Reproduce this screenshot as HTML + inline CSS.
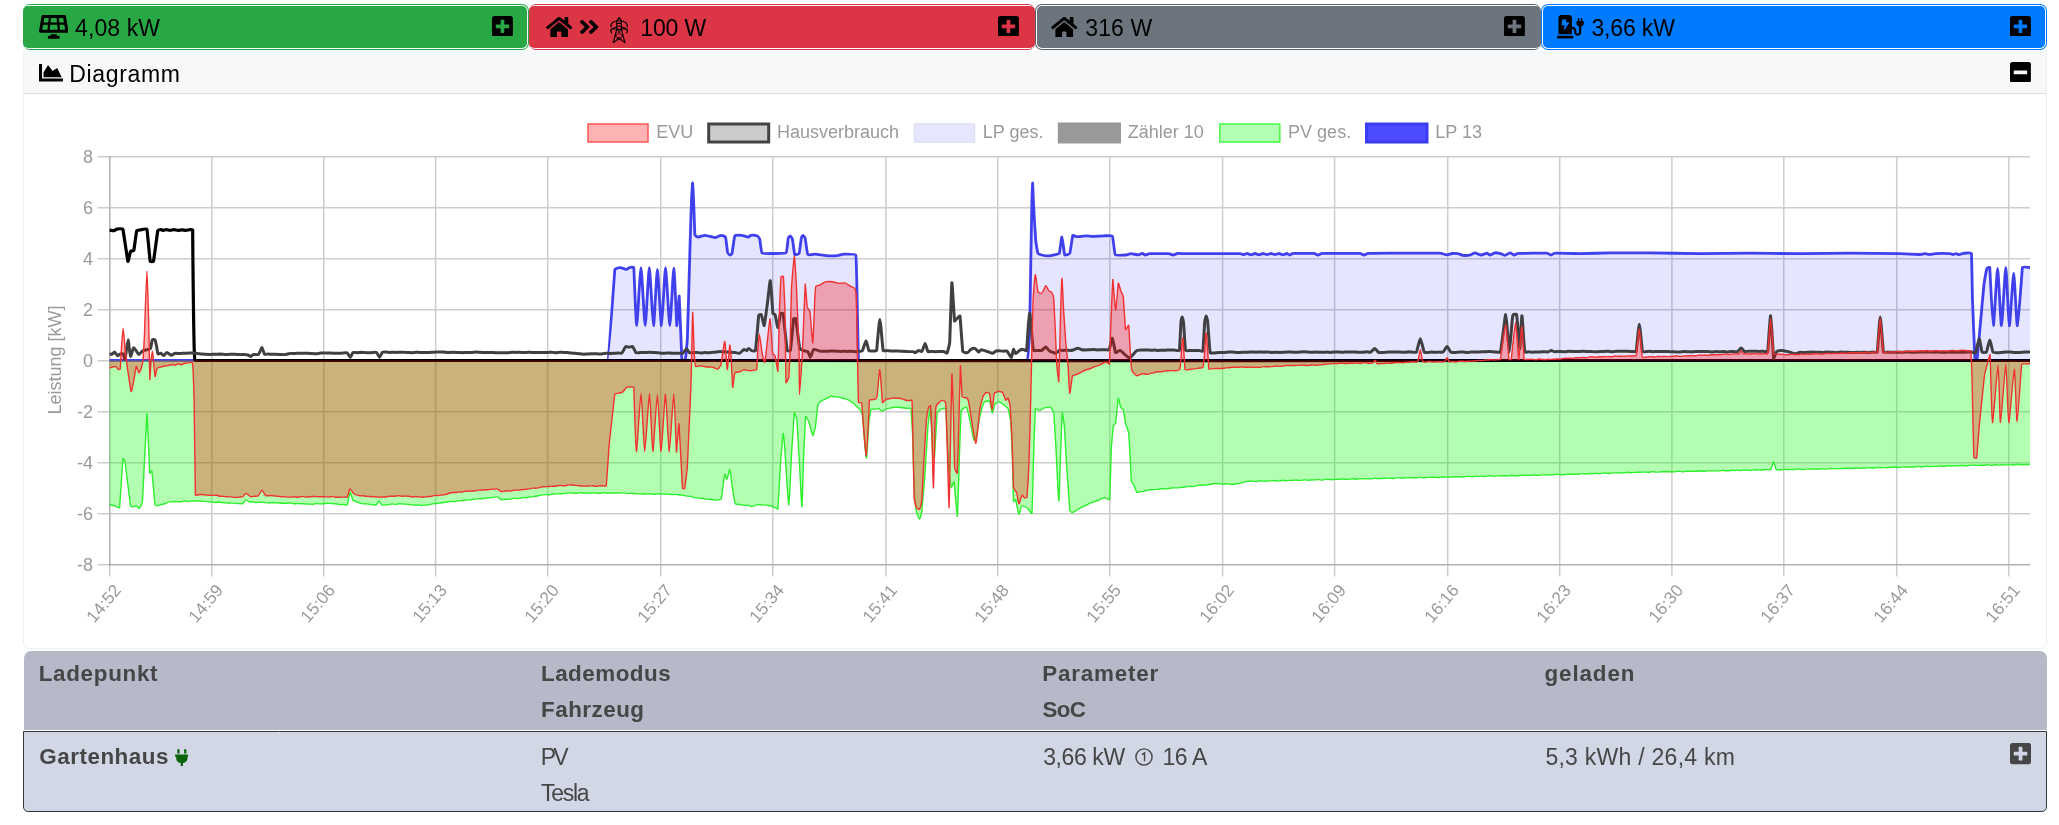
<!DOCTYPE html>
<html lang="de"><head><meta charset="utf-8"><title>openWB</title>
<style>
*{box-sizing:border-box}
html,body{margin:0;padding:0;background:#fff;width:2059px;height:825px;overflow:hidden}
body{font-family:"Liberation Sans",Arial,sans-serif;color:#000;position:relative}
.ic{display:inline-block;vertical-align:middle;position:absolute}
.t{position:absolute;font-size:23px;line-height:34px;white-space:nowrap}
.tc,.tc i,.tc b{position:absolute;display:block}
.card{position:absolute;left:23px;top:50px;width:2024px;height:599px;background:#fff;border:1px solid #eff0f2;border-top:none;border-radius:0 0 7px 7px}
.chead{position:absolute;left:0;top:0;width:100%;height:44px;background:#f7f8fa;border-bottom:1.500px solid #dcdddf}
.chart{position:absolute;left:0;top:0;will-change:transform}
.thead{position:absolute;left:23.5px;top:650.6px;width:2023px;height:79.4px;background:#b6bac8;border-radius:7px 7px 0 0}
.trow{position:absolute;left:23px;top:731.3px;width:2024px;height:80.7px;background:#d2d7e6;border:1.500px solid #33363b;border-radius:0 0 5px 5px}
.cell{position:absolute;font-size:23px;line-height:36px;color:#464646;white-space:nowrap;letter-spacing:-0.200px}
.b{font-weight:bold;font-size:22.4px}

#t1{left:75.10px;top:11.30px;letter-spacing:0.100px}
#t2{left:640.30px;top:11.30px;letter-spacing:-0.150px}
#t3{left:1085.30px;top:11.30px;letter-spacing:0.100px}
#t4{left:1591.50px;top:11.30px;letter-spacing:-0.170px}
#t5{left:69.20px;top:57.00px;letter-spacing:0.660px}
#h1{left:38.70px;top:656.20px;letter-spacing:0.705px}
#h2{left:541.00px;top:656.20px;letter-spacing:0.494px}
#h3{left:541.00px;top:692.20px;letter-spacing:0.500px}
#h4{left:1042.20px;top:656.20px;letter-spacing:0.825px}
#h5{left:1042.40px;top:692.20px;letter-spacing:-0.650px}
#h6{left:1544.50px;top:656.20px;letter-spacing:0.880px}
#r1{left:39.30px;top:738.80px;letter-spacing:0.526px}
#r2{left:540.80px;top:739.20px;letter-spacing:-2.800px}
#r3{left:541.00px;top:775.10px;letter-spacing:-1.300px}
#r4{left:1043.20px;top:739.20px;letter-spacing:-0.400px}
#r5{left:1162.40px;top:739.20px;letter-spacing:-0.400px}
#r6{left:1545.40px;top:739.20px;letter-spacing:0.260px}
</style></head><body>
<div class="card"><div class="chead"></div></div>
<svg class="chart" width="2059" height="60" viewBox="0 0 2059 60"><rect x="23.00" y="4.00" width="506.00" height="46.00" rx="7" fill="#28a745"/><rect x="23.00" y="5.00" width="505.00" height="44.00" rx="6" fill="#fff"/><rect x="23.00" y="6.00" width="504.00" height="42.00" rx="5" fill="#28a745"/><rect x="529.00" y="4.00" width="506.00" height="46.00" rx="7" fill="#dc3545"/><rect x="529.00" y="5.00" width="506.00" height="44.00" rx="6" fill="#fff"/><rect x="529.00" y="6.00" width="506.00" height="42.00" rx="5" fill="#dc3545"/><rect x="1035.00" y="4.00" width="506.00" height="46.00" rx="7" fill="#5a6268"/><rect x="1036.00" y="5.00" width="505.00" height="44.00" rx="6" fill="#fff"/><rect x="1037.00" y="6.00" width="504.00" height="42.00" rx="5" fill="#6c757d"/><rect x="1541.00" y="4.00" width="506.00" height="46.00" rx="7" fill="#007bff"/><rect x="1542.00" y="5.00" width="504.00" height="44.00" rx="6" fill="#fff"/><rect x="1543.00" y="6.00" width="502.00" height="42.00" rx="5" fill="#007bff"/></svg>
<svg class="chart" width="2059" height="825" viewBox="0 0 2059 825">
<g stroke="#cdcdcd" stroke-width="1.5" fill="none">
<line x1="97.5" x2="2030" y1="156.70" y2="156.70"/>
<line x1="97.5" x2="2030" y1="207.70" y2="207.70"/>
<line x1="97.5" x2="2030" y1="258.70" y2="258.70"/>
<line x1="97.5" x2="2030" y1="309.70" y2="309.70"/>
<line x1="97.5" x2="2030" y1="360.70" y2="360.70"/>
<line x1="97.5" x2="2030" y1="411.70" y2="411.70"/>
<line x1="97.5" x2="2030" y1="462.70" y2="462.70"/>
<line x1="97.5" x2="2030" y1="513.70" y2="513.70"/>
<line x1="97.5" x2="2030" y1="564.70" y2="564.70"/>
<line x1="109.80" x2="109.80" y1="156" y2="576.5"/>
<line x1="211.80" x2="211.80" y1="156" y2="576.5"/>
<line x1="323.75" x2="323.75" y1="156" y2="576.5"/>
<line x1="435.65" x2="435.65" y1="156" y2="576.5"/>
<line x1="547.70" x2="547.70" y1="156" y2="576.5"/>
<line x1="660.75" x2="660.75" y1="156" y2="576.5"/>
<line x1="772.80" x2="772.80" y1="156" y2="576.5"/>
<line x1="885.90" x2="885.90" y1="156" y2="576.5"/>
<line x1="997.75" x2="997.75" y1="156" y2="576.5"/>
<line x1="1109.80" x2="1109.80" y1="156" y2="576.5"/>
<line x1="1222.60" x2="1222.60" y1="156" y2="576.5"/>
<line x1="1334.60" x2="1334.60" y1="156" y2="576.5"/>
<line x1="1447.70" x2="1447.70" y1="156" y2="576.5"/>
<line x1="1559.70" x2="1559.70" y1="156" y2="576.5"/>
<line x1="1671.90" x2="1671.90" y1="156" y2="576.5"/>
<line x1="1783.80" x2="1783.80" y1="156" y2="576.5"/>
<line x1="1896.70" x2="1896.70" y1="156" y2="576.5"/>
<line x1="2008.80" x2="2008.80" y1="156" y2="576.5"/>
<line x1="109.8" x2="109.8" y1="156" y2="565.4" stroke="#000" stroke-opacity="0.13"/>
<line x1="109" x2="2030" y1="564.7" y2="564.7" stroke="#000" stroke-opacity="0.13"/>
</g>
<path d="M109.6 360.3C110.9 360.3 605.9 360.6 607.2 360.4C608.5 360.2 614.7 270.7 614.8 269.4C614.9 268.8 616.9 268.2 617.5 268C618.1 267.8 620.1 267.5 620.7 267.6C621.8 267.8 625.1 269.4 626.2 269.4C626.9 269.4 628.8 267.8 629.5 267.6C630.3 267.4 633.7 266.8 633.8 267.6C634 268.9 636 325.5 636.7 325.5C637.4 325.5 640.1 267.6 641 267.6C641.8 267.6 644.4 325.5 645.2 325.5C646 325.5 648.5 267.6 649.3 267.6C650.1 267.6 652.7 325.3 653.5 325.5C654.3 325.7 656.6 269.4 657.4 269.4C658.2 269.4 660.7 325.7 661.5 325.5C662.3 325.3 664.7 267.6 665.5 267.6C666.3 267.6 669 325.4 669.8 325.5C670.6 325.5 673.1 268.1 673.8 268.1C674.5 268.1 676.6 324.2 676.8 325.5C677 326.8 679 294.7 679.2 296C679.4 297.3 681.7 356.9 681.8 358.2C681.8 358.7 682.2 360.2 682.5 360.4C682.8 360.6 685 360.9 685.1 360.4C685.4 359.1 687.2 340.9 687.3 339.6C687.4 338.3 690.1 244.9 690.1 243.6C690.1 242.3 691.4 201.3 691.5 200C691.6 198.7 692.4 182.6 692.6 183C692.9 183.6 693.7 203.7 693.8 205C693.9 206.3 694.7 233.6 694.9 234.9C695 235.7 697.5 237.1 698.2 237.1C699.4 237.2 703.4 235.3 704.7 235.3C706 235.3 710 236.4 711.3 236.7C712.2 236.9 714.8 237.6 715.6 237.5C716.7 237.3 720 235.3 721.1 235.3C722 235.3 725.2 236.3 725.5 237.1C726 238.3 727.3 251.1 727.6 252.4C727.8 253 729.3 254.9 729.8 255C730.2 255.1 731.9 254 732 253.5C732.3 252.2 734.2 237.1 734.8 236C735.4 235 740.5 235.2 741.8 235.3C743.1 235.4 747.2 237.1 748.4 237.1C748.9 237.1 750.1 235.4 750.6 235.3C751.9 235.1 756.2 235.5 757.4 236C758.1 236.3 759.6 238.5 759.8 239.3C760.1 240.6 761.2 251.8 762 252.8C762.8 253.8 770.5 253.5 771.8 253.5C773.1 253.5 785 253.7 786 252.8C787 251.9 787.9 239.5 788.2 238.2C788.4 237.6 790 235.9 790.4 236C790.9 236.1 792.3 238.5 792.5 239.3C792.8 240.6 794.2 253.3 794.7 254.5C795 255.1 798.8 254.2 799.1 253.5C799.6 252.3 801 239.5 801.3 238.2C801.4 237.5 802.6 235.3 803 235.3C803.4 235.3 805 237.5 805.2 238.2C805.5 239.5 807.1 253.4 807.8 254.5C808.5 255.5 814.2 254 815.5 254.1C816.8 254.2 825.1 255.5 826.4 255.6C827.7 255.7 836 255.7 837.3 255.6C838.6 255.5 842.5 254.1 843.8 254.1C845.1 254.1 855.3 253.8 855.8 255C856.3 256.2 856.9 286 856.9 287.3C856.9 288.6 858.4 358 858.4 359.3C858.4 359.5 858.6 360.4 858.8 360.4C860.1 360.4 1025.9 360.7 1027.2 360.4C1028.5 360.1 1029.8 322.2 1029.8 320.9C1029.8 319.6 1030.9 256.8 1030.9 255.5C1030.9 254.2 1031.8 206.3 1031.8 205C1031.8 203.7 1032.4 183.6 1032.6 183C1032.7 182.6 1033.3 198.7 1033.4 200C1033.5 201.3 1034.1 214.9 1034.2 216.2C1034.3 217.5 1035.6 238.9 1035.7 240.2C1035.8 241.5 1037.4 252.1 1037.9 253.3C1038.2 254 1041 254.8 1041.8 255C1043.1 255.3 1047.1 255.9 1048.4 255.9C1049.5 255.9 1052.9 255.1 1054 254.8C1055.1 254.5 1058.9 254.2 1059.3 253.3C1059.8 252.1 1061.4 236.8 1061.9 236.9C1062.5 237.1 1064.1 253.6 1064.7 254.8C1065.1 255.5 1069.4 254.2 1069.8 253.3C1070.3 252.1 1072.3 236.6 1072.8 235.4C1073 234.9 1075.3 236.4 1076 236.5C1077.1 236.6 1080.6 236.4 1081.8 236.3C1082.8 236.2 1086 235.8 1087 235.8C1088.1 235.8 1091.6 236.3 1092.7 236.3C1094 236.3 1102.3 235.8 1103.6 235.8C1104.9 235.8 1111.7 235.2 1112.4 236.3C1113.1 237.4 1114.5 253.3 1115.2 254.4C1115.9 255.5 1124.2 255.1 1125.5 255C1126.6 255 1129.8 253.7 1130.9 253.7C1132.2 253.7 1137.2 254.8 1138.5 254.8C1139.3 254.8 1141.7 253.3 1142.5 253.3C1143.1 253.3 1144.5 255 1145.1 255C1145.9 255 1148.6 253.7 1149.5 253.7C1150.8 253.6 1167.8 253.6 1169.1 253.7C1169.9 253.7 1172.2 255 1173 255C1174 255 1176.8 253.4 1177.8 253.3C1179.1 253.2 1189.6 253.7 1190.9 253.7C1192.2 253.7 1238.7 253.7 1240 253.7C1240.8 253.7 1243.2 254.6 1244 254.6C1244.6 254.6 1246.4 253.4 1247 253.4C1247.8 253.4 1250.2 254.8 1251 254.8C1251.8 254.8 1254.2 253.5 1255 253.5C1255.8 253.5 1258.2 254.8 1259 254.8C1259.8 254.8 1262.2 253.5 1263 253.5C1263.8 253.5 1266.2 254.6 1267 254.6C1267.8 254.6 1270.2 253.5 1271 253.5C1271.8 253.5 1274.2 254.6 1275 254.6C1275.8 254.6 1278.2 253.5 1279 253.5C1279.8 253.5 1282.2 254.8 1283 254.8C1283.8 254.8 1286.2 253.5 1287 253.5C1287.5 253.5 1289 255 1289.5 255C1290.2 255 1292.2 253.4 1293 253.4C1294.3 253.3 1312.7 253.3 1314 253.4C1314.9 253.5 1317.2 255 1318 255C1318.8 255 1321.1 253.4 1322 253.4C1323.3 253.4 1358.7 253.4 1360 253.4C1360.9 253.4 1363.2 255 1364 255C1364.8 255 1367.1 253.5 1368 253.4C1369.3 253.3 1388.7 253.2 1390 253.2C1391.3 253.2 1438.7 253.2 1440 253.2C1441.3 253.2 1445.7 254.8 1447 254.8C1448 254.8 1451 253.6 1452 253.5C1453.2 253.4 1456.8 253.4 1458 253.6C1459 253.8 1462 255.2 1463 255.3C1464.3 255.5 1468.7 255.3 1470 255C1471.1 254.8 1474 252.8 1475 252.8C1476.2 252.8 1479.8 255 1481 255C1482.2 255 1485.8 253.2 1487 253.2C1487.6 253.2 1489.4 255 1490 255C1491 255 1494 253 1495 252.8C1496 252.6 1499 253.2 1500 253.4C1501 253.7 1504 255.4 1505 255.3C1506 255.2 1509 252.8 1510 252.8C1510.8 252.8 1513.2 254.9 1514 255C1514.8 255.1 1517.1 253.4 1518 253.4C1519.3 253.3 1545.7 253.1 1547 253.2C1547.9 253.2 1550.2 255 1551 255C1551.8 255 1554.1 253.2 1555 253.2C1556.3 253.1 1578.7 253.6 1580 253.6C1581.3 253.6 1608.7 252.9 1610 252.9C1611.3 252.9 1648.7 252.9 1650 252.9C1651.3 252.9 1698.7 253.6 1700 253.6C1701.3 253.6 1748.7 253.2 1750 253.2C1751.3 253.2 1798.7 253.7 1800 253.7C1801.3 253.7 1848.7 253.2 1850 253.2C1851.3 253.2 1898.7 253.6 1900 253.6C1901.3 253.6 1918.7 254.5 1920 254.5C1921 254.5 1924 253.6 1925 253.6C1926 253.6 1929 254.5 1930 254.5C1931 254.5 1934 253.6 1935 253.6C1936.3 253.5 1948.7 253.5 1950 253.6C1950.6 253.6 1952.4 254.5 1953 254.5C1953.6 254.5 1955.4 253.6 1956 253.6C1956.6 253.6 1958.4 254.6 1959 254.6C1959.8 254.6 1962.2 253.5 1963 253.4C1964.3 253.3 1971.1 252.1 1971.4 253.4C1971.7 254.7 1972.4 296.3 1972.4 297.6C1972.4 298.9 1974.8 357.4 1974.9 358.7C1974.9 359.1 1977.1 359.1 1977.2 358.7C1977.4 357.4 1980 328 1980.1 326.7C1980.2 325.4 1983.8 285.3 1984 284C1984.2 282.7 1986.5 269.7 1986.9 268.5C1987.1 268 1989.7 266.9 1989.8 267.5C1989.9 268.8 1992.5 325.6 1993.3 325.7C1994.1 325.8 1996.8 268.5 1997.6 268.5C1998.4 268.5 2000.7 325.8 2001.5 325.7C2002.3 325.6 2005 267.5 2005.8 267.5C2006.6 267.5 2008.5 325.1 2009.3 325.7C2010 326.3 2012.9 273.4 2013.7 273.4C2014.5 273.4 2016.6 326.3 2017.4 325.7C2018.3 325.1 2022.1 268.8 2022.4 267.5C2022.7 266.2 2028.7 267.5 2030 267.5" fill="none" stroke="#4444ec" stroke-width="2.8" stroke-linejoin="round"/>
<path d="M109.6 504.7C110.7 504.9 113.9 505.5 115 505.8C115.9 506.1 119.5 508.5 119.6 507.6C119.8 506.3 122.7 459.8 122.9 458.5C123 457.8 125 461.4 125.1 462.2C125.3 463.5 130.3 504.5 130.5 505.8C130.6 506.3 132.2 506.9 132.7 506.9C133.3 506.9 135.4 505.7 136 505.8C136.7 506 138.8 508.7 139.3 508.4C140.1 507.8 142.4 502.8 142.5 501.5C142.6 500.2 146.6 415 146.9 413.7C147.2 412.4 149.6 471.8 149.7 473.1C149.7 473.7 151.8 470.4 151.9 470.9C152.1 472.2 154.8 503.4 155 504.7C155.1 505.2 156.7 505.8 157.2 505.8C157.8 505.8 159.7 504.8 160.3 504.7C161 504.5 162.9 504.3 163.5 504.2C164.2 504 166 503 166.7 502.8C167.3 502.5 169.2 502 169.8 501.9C170.4 501.8 172.2 501.8 172.8 501.8C173.4 501.7 175.2 501.5 175.8 501.5C176.4 501.5 178.2 501.8 178.8 501.8C179.4 501.8 181.2 501.6 181.8 501.5C182.4 501.4 184.2 501 184.8 501C185.4 501 187.2 501.5 187.8 501.5C188.4 501.5 190.2 501.2 190.8 501.1C191.4 501.1 193.2 501 193.8 501C194.5 501 196.4 500.9 197.1 500.9C197.8 500.9 199.7 501 200.4 501C201.3 501 203.9 501.3 204.8 501.4C205.6 501.5 208.2 501.8 209.1 501.9C209.8 502 211.7 502 212.4 502.1C213 502.2 215 502.5 215.6 502.5C216.3 502.5 218.3 502 218.9 502C219.6 502.1 221.5 502.5 222.2 502.6C222.9 502.7 225 502.8 225.7 502.9C226.4 503 228.5 503.2 229.2 503.2C229.9 503.2 231.9 503 232.6 503.1C233.3 503.1 235.4 503.3 236.1 503.4C236.8 503.4 238.9 503.6 239.6 503.6C240.3 503.6 242.4 503.9 242.9 503.6C243.6 503.2 245.1 500.1 245.8 499.9C246.4 499.7 248.7 501.7 249.5 501.9C250.1 502.1 252.1 501.9 252.8 501.9C253.4 502 255.4 502.5 256 502.5C256.7 502.5 258.6 502.1 259.3 502.1C259.9 502.1 261.9 502.2 262.5 502.3C263.2 502.3 265.1 502.5 265.8 502.6C266.4 502.7 268.3 503 268.9 503C269.5 503 271.4 502.7 272 502.6C272.6 502.6 274.5 502.8 275.1 502.8C275.8 502.9 277.6 502.8 278.3 502.8C278.9 502.9 280.7 503.2 281.4 503.2C282 503.3 283.9 503.2 284.5 503.2C285.1 503.2 287 503.2 287.6 503.2C288.2 503.2 290.1 502.9 290.7 503C291.4 503 293.2 503.7 293.9 503.8C294.5 503.8 296.4 503.6 297 503.6C297.6 503.6 299.5 503.6 300.1 503.6C300.7 503.6 302.6 503.8 303.2 503.8C303.9 503.8 305.7 504 306.4 504C307 504 308.9 504.1 309.5 504.1C310.2 504.1 312.2 504.3 312.9 504.2C313.6 504.2 315.6 503.5 316.3 503.5C317 503.5 319.1 503.8 319.8 503.9C320.4 503.9 322.5 503.9 323.2 503.8C323.9 503.8 325.9 503.4 326.6 503.3C327.3 503.3 329.3 503.4 330 503.4C330.7 503.4 332.8 503.7 333.5 503.7C334.2 503.8 336.2 503.9 336.9 504C337.6 504.1 339.7 504.6 340.4 504.6C341.1 504.7 343.2 504.4 343.8 504.5C344.5 504.5 347 505.5 347.3 505C347.9 503.8 349.3 492.9 350 492.3C350.5 491.9 352.3 499.3 353 500.4C353.4 501 355.8 501.4 356.4 501.6C357.2 501.9 359.2 503 359.9 503.2C360.5 503.4 362.5 503.9 363.1 503.9C363.8 504 365.7 503.7 366.3 503.8C367 503.8 368.9 504.2 369.6 504.3C370.2 504.3 372.1 504.5 372.8 504.6C373.4 504.6 375.5 505.3 376 505C376.8 504.6 378.4 500.9 379 500.9C379.6 500.9 381.1 504.5 381.8 505C382.3 505.3 384.6 505 385.3 504.9C386 504.9 388 504.7 388.7 504.6C389.4 504.5 391.5 503.9 392.2 503.9C392.9 503.9 394.9 504.4 395.6 504.4C396.3 504.3 398.4 503.8 399.1 503.8C399.8 503.8 401.7 504 402.4 504C403 504.1 405 504.1 405.7 504.1C406.3 504.2 408.3 504.5 409 504.5C409.6 504.6 411.6 504.7 412.2 504.8C412.9 504.9 414.9 505.2 415.5 505.2C416.2 505.3 418.2 504.9 418.8 504.9C419.5 504.9 421.4 505.5 422.1 505.5C422.8 505.5 424.7 505.2 425.4 505.1C426 505.1 428 504.9 428.7 504.8C429.3 504.7 431.3 504 432 503.9C432.6 503.8 434.6 503.7 435.2 503.6C435.9 503.6 437.9 503.2 438.5 503.1C439.2 503 441.2 503 441.8 502.9C442.5 502.8 444.4 502.3 445.1 502.2C445.8 502.1 447.7 501.8 448.4 501.7C449.1 501.6 451 501.4 451.7 501.4C452.4 501.4 454.4 501.6 455 501.6C455.7 501.5 457.6 500.8 458.3 500.7C458.9 500.6 460.9 500.6 461.6 500.5C462.3 500.5 464.2 500.3 464.9 500.2C465.6 500.1 467.5 499.9 468.2 499.9C468.9 499.9 470.8 499.8 471.5 499.7C472.1 499.7 474.1 499.4 474.8 499.3C475.4 499.2 477.4 498.6 478.1 498.6C478.7 498.5 480.7 498.9 481.3 498.9C482 498.9 484 498.4 484.6 498.3C485.3 498.1 487.3 497.8 487.9 497.8C488.6 497.7 490.5 497.7 491.2 497.6C492.4 497.5 495.9 496.7 497 496.9C498 497.1 500.5 499.4 501.5 499.7C502 499.9 503.9 499.5 504.5 499.5C505.1 499.4 506.9 499.2 507.6 499.2C508.2 499.2 510 499.2 510.6 499.1C511.2 499 513 498.4 513.6 498.3C514.2 498.2 516 498.5 516.6 498.5C517.2 498.5 519.1 498.5 519.7 498.4C520.3 498.3 522.1 497.7 522.7 497.6C523.3 497.5 525.1 497.6 525.7 497.6C526.4 497.6 528.5 497.2 529.2 497.1C529.8 497 531.9 496.7 532.6 496.6C533.3 496.5 535.4 496.4 536 496.3C536.8 496.2 538.8 495.6 539.5 495.4C540.2 495.3 542.3 495 543 494.9C543.6 494.8 545.7 494.6 546.4 494.6C547 494.6 548.9 494.8 549.6 494.8C550.2 494.7 552.1 494.1 552.8 494C553.4 493.9 555.3 494 555.9 493.9C556.6 493.9 558.5 493.8 559.1 493.8C559.7 493.8 561.6 493.7 562.3 493.7C562.9 493.7 564.8 493.5 565.4 493.4C566.1 493.4 568 492.9 568.6 492.9C569.3 492.8 571.2 493 571.8 493C572.4 493 574.3 493.3 574.9 493.3C575.6 493.3 577.4 493.1 578.1 493C578.7 493 580.6 492.8 581.2 492.8C581.8 492.8 583.7 493.1 584.3 493.1C585 493.1 586.9 493 587.5 493C588.1 493 590 493.2 590.6 493.2C591.2 493.1 593.1 492.7 593.8 492.7C594.4 492.7 596.3 493 596.9 493.1C597.5 493.2 599.4 493.3 600 493.3C600.7 493.2 602.5 492.7 603.2 492.7C603.8 492.7 605.7 493 606.3 493C606.9 493 608.8 493 609.4 493C610 493 611.9 492.9 612.5 493C613.1 493 615 493.1 615.6 493.1C616.2 493.1 618.1 492.8 618.7 492.8C619.3 492.7 621.2 492.9 621.8 492.9C622.4 492.9 624.3 492.8 624.9 492.9C625.5 493 627.4 493.6 628 493.6C628.6 493.6 630.5 493.2 631.1 493.2C631.8 493.1 633.6 493.4 634.3 493.5C634.9 493.5 636.7 493.7 637.4 493.7C638 493.8 639.9 493.9 640.5 493.9C641.1 493.9 643 494 643.6 494C644.2 494 646.1 494.1 646.7 494C647.4 494 649.2 493.6 649.9 493.7C650.5 493.7 652.4 494.3 653 494.3C653.6 494.4 655.5 494.1 656.1 494C656.7 494 658.6 493.8 659.2 493.8C659.9 493.8 661.7 494.1 662.4 494.1C663 494.1 664.9 494 665.5 494C666.2 494 668.3 494.2 669 494.2C669.7 494.3 671.8 494.6 672.5 494.6C673.2 494.6 675.2 494.3 675.9 494.4C676.6 494.4 678.7 494.9 679.4 495C680.1 495.1 682.2 495 682.9 495.1C683.6 495.2 685.8 496 686.5 496.1C687.2 496.2 689.5 496.1 690.2 496.3C690.9 496.4 693.1 497.1 693.8 497.3C694.5 497.5 696.7 497.8 697.4 497.9C698.2 498 700.3 498.2 701.1 498.3C701.8 498.4 704 498.7 704.7 498.8C705.4 498.9 707.6 499.3 708.3 499.4C709.1 499.4 711.2 499.5 712 499.5C712.7 499.6 714.9 500.2 715.6 500.1C716.7 500 720.6 499.6 721.1 498.8C721.8 497.7 722.4 490.9 722.6 489.6C722.8 488.3 724.3 475.6 724.8 474.4C725 473.9 726.7 479.5 727 479.2C727.7 478.6 729.4 469.1 729.8 469.6C730.4 470.3 731.8 484 732 485.3C732.2 486.6 734.9 502.6 735.3 503.8C735.5 504.4 737.9 504.1 738.5 504.2C739.2 504.3 741.1 504.8 741.8 504.9C742.5 505 744.4 505.5 745.1 505.5C745.8 505.5 747.8 505.2 748.4 505.3C749.1 505.4 751 506.7 751.6 506.7C752.6 506.7 755.5 505.1 756.5 504.9C757.1 504.7 759.1 504.7 759.8 504.7C760.5 504.7 762.4 504.8 763.1 504.9C764 505 766.6 505.3 767.5 505.4C768.3 505.5 771 505.8 771.8 506C772.4 506.2 774.2 507.2 774.8 507.5C775.5 507.8 777.8 509.4 777.9 508.8C778.1 507.5 780.4 464.8 780.5 463.5C780.6 462.2 782.9 433 783.4 433.4C784 433.9 785.9 466.5 786 467.8C786.1 469.1 788.3 506 788.8 504.9C789.3 503.7 791.4 456 791.5 454.7C791.6 453.4 794.1 414.1 794.3 412.8C794.5 411.7 796.8 418.5 796.9 419.8C797 421.1 799.6 466.5 799.7 467.8C799.8 469.1 801.6 507.5 801.9 506.7C802.3 505.7 803.4 460.4 803.5 459.1C803.6 457.8 805.4 417.9 805.6 416.6C805.7 415.6 808.5 420.8 808.9 422C809.4 423.2 812 435 812.8 435.5C813.3 435.9 815.3 427.7 815.5 426.4C815.7 425.1 817.4 408 817.6 406.7C817.8 405.7 819.1 402.6 819.8 401.9C820.6 401.1 824.2 399.7 825.3 399.1C826.4 398.5 829.6 396.6 830.7 396.3C831.3 396.1 833.3 396.6 834 396.6C834.7 396.7 836.7 396.8 837.3 396.9C838.2 397.1 840.8 397.8 841.6 398C842.5 398.3 845.1 398.8 846 399.1C846.7 399.3 848.7 400.1 849.3 400.4C850 400.8 852 401.9 852.6 402.4C853.5 403.2 856 405.8 856.9 406.7C857.6 407.4 859.7 409.2 860.2 410C860.8 411 862.3 414.3 862.4 415.5C862.6 416.8 865.6 457.3 866.3 458C866.9 458.6 868.8 423.3 868.9 422C869 420.7 870.5 410.5 871.1 409.3C871.4 408.7 874.1 409.3 874.9 409.2C875.7 409.1 878 408.3 878.7 408.5C879.4 408.7 881.3 411.1 882 411.1C882.8 411.1 885.5 409.2 886.4 408.9C887.1 408.6 889.4 408.2 890.2 408.1C891 407.9 893.2 407.3 894 407.2C894.9 407.1 897.5 407.2 898.4 407.2C899.2 407.3 901.8 407.7 902.7 407.8C903.5 407.9 906 408.2 906.8 408.3C907.6 408.4 910.8 407.8 910.9 408.5C911.2 409.8 912.6 436 912.7 437.3C912.8 438.6 914.1 490.5 914.2 491.8C914.3 493.1 916.1 510.2 916.4 511.5C916.7 512.8 919 519.1 919.6 519.1C920.1 519.1 921.6 512.8 921.8 511.5C922 510.2 925 473.5 925.1 472.2C925.2 470.9 927.8 427.7 927.9 426.4C928 425.1 930.3 405.9 930.5 407.2C930.7 408.5 932.6 455.6 932.7 456.9C932.7 457.2 934.5 457.2 934.5 456.9C934.6 455.6 936.9 414.6 937.1 413.3C937.3 412.1 940.5 409.4 941.5 408.9C942.2 408.5 945.7 408.1 945.8 408.9C946 410.2 947.5 446.9 947.6 448.2C947.7 449.5 949 470.9 949.1 472.2C949.2 473.5 950.7 486.3 951.3 487.5C951.6 488.1 953.9 481.1 954.1 482C954.4 483.3 957.1 517.6 957.4 516.3C957.7 515 959.3 460.4 959.3 459.1C959.3 457.8 960.9 412.4 961.1 411.1C961.3 409.8 965.9 406.6 966.5 407.2C967.4 408.1 969.5 418.5 969.8 419.8C970.1 421.1 973.3 438.7 973.8 439.9C974 440.4 976.2 438 976.4 437.3C976.7 436 979.3 418.9 979.6 417.6C979.9 416.3 983.3 403.5 984 402.4C984.5 401.5 989 400.6 989.5 401.3C990.3 402.3 991.7 412.5 992.3 412.8C992.8 413 994.2 405.2 994.9 404.1C995.4 403.3 998.5 401.8 999.3 401.9C1000.4 402.1 1003.7 404.8 1004.7 405.6C1005.4 406.1 1007.7 407.7 1008 408.5C1008.5 409.7 1010.7 420.7 1010.8 422C1010.9 423.3 1012.4 457.8 1012.4 459.1C1012.4 460.4 1013.4 500.3 1013.5 501.6C1013.5 502.1 1015.4 499.1 1015.6 499.5C1016.1 500.7 1018.1 513.3 1018.9 514.1C1019.4 514.6 1020.8 506.8 1021.8 506C1022.4 505.5 1025.8 506.9 1026.6 507.5C1027.7 508.2 1031.8 514.4 1032 513.2C1032.2 511.9 1033.5 460.4 1033.5 459.1C1033.5 457.8 1035.1 410.2 1035.3 408.9C1035.4 408.1 1038.8 410.8 1039.6 410.7C1040.5 410.6 1043.1 408.2 1044 407.8C1044.6 407.6 1046.6 407.6 1047.3 407.5C1048 407.4 1050.2 406.8 1050.6 407.2C1051.5 408 1053.6 412 1053.8 413.3C1054 414.6 1055.9 446.9 1056 448.2C1056.1 449.5 1058.3 499.8 1058.8 501C1059.2 502 1060.3 460.4 1060.4 459.1C1060.5 457.8 1062 414.1 1062.2 412.8C1062.4 411.5 1064.3 425.1 1064.4 426.4C1064.5 427.7 1066.4 462.2 1066.5 463.5C1066.6 464.8 1069.6 509.1 1069.8 510.4C1069.9 511.1 1071.8 512.8 1072.4 512.6C1073.7 512.3 1080.7 507.7 1081.8 507.1C1082.5 506.7 1084.7 506 1085.4 505.6C1086.2 505.3 1088.3 504 1089.1 503.6C1089.8 503.3 1092 502.6 1092.7 502.3C1093.3 502.1 1095.1 501.4 1095.7 501.2C1096.3 501 1098.1 500.5 1098.7 500.3C1099.3 500 1101.1 498.8 1101.7 498.5C1102.3 498.3 1104.1 497.6 1104.7 497.7C1105.7 497.8 1109.6 500.4 1109.7 499.5C1109.9 498.2 1111.2 449.5 1111.3 448.2C1111.4 446.9 1113.3 426.6 1113.5 425.3C1113.6 424.7 1115.5 423.7 1115.6 423.1C1115.8 421.8 1117.9 399.6 1118.3 398.4C1118.6 397.5 1120.2 406 1120.7 407.2C1121 407.9 1123.1 409.3 1123.3 410C1123.7 411.2 1125.2 421.8 1125.5 423.1C1125.8 424.4 1128.5 431.6 1128.7 432.9C1128.9 434.2 1130.2 457.8 1130.3 459.1C1130.4 460.4 1131.1 479.6 1131.3 480.9C1131.5 482 1133.7 484.7 1134.2 485.7C1134.8 486.9 1136 491.4 1136.8 492.3C1137.1 492.7 1139.2 492 1139.8 491.9C1140.5 491.8 1142.3 491.5 1142.9 491.4C1143.8 491.2 1146.4 490.3 1147.3 490.1C1148 490 1150.2 489.9 1150.9 489.8C1151.7 489.8 1153.8 489.7 1154.6 489.6C1155.3 489.5 1157.5 489.3 1158.2 489.2C1158.8 489.1 1160.7 488.9 1161.3 488.8C1161.9 488.8 1163.8 488.6 1164.4 488.6C1165.1 488.6 1166.9 488.9 1167.5 488.9C1168.2 488.8 1170 488.1 1170.7 488C1171.3 487.9 1173.1 487.9 1173.8 487.9C1174.4 487.9 1176.3 487.9 1176.9 487.9C1177.5 487.8 1179.4 487.6 1180 487.5C1180.6 487.4 1182.5 487.3 1183.1 487.2C1183.7 487.1 1185.6 487 1186.2 486.9C1186.9 486.8 1188.7 486.3 1189.3 486.3C1190 486.2 1191.8 486.6 1192.5 486.6C1193.1 486.5 1194.9 486.1 1195.6 485.9C1196.2 485.8 1198.1 485.4 1198.7 485.3C1199.3 485.3 1201.2 485.3 1201.8 485.3C1202.4 485.3 1204.3 485.2 1204.9 485.1C1205.5 485.1 1207.3 484.7 1207.9 484.6C1208.5 484.5 1210.4 484.4 1211 484.3C1211.6 484.2 1213.4 483.7 1214 483.6C1214.6 483.5 1216.5 483.5 1217.1 483.5C1217.7 483.5 1219.7 483.7 1220.3 483.8C1221 483.9 1222.9 484.2 1223.5 484.2C1224.2 484.2 1226.1 483.7 1226.8 483.7C1227.4 483.8 1229.4 484.3 1230 484.3C1230.7 484.3 1232.8 484.2 1233.5 484.2C1234.2 484.1 1236.3 483.9 1237 483.8C1237.7 483.7 1239.7 483.2 1240.3 483.1C1241 482.9 1243 482.4 1243.7 482.2C1244.3 482.1 1246.3 481.5 1247 481.4C1247.6 481.3 1249.4 481.3 1250 481.2C1250.6 481.2 1252.4 481.1 1253 481.1C1253.6 481.1 1255.4 481.6 1256 481.6C1256.6 481.6 1258.4 480.9 1259 480.9C1259.6 480.8 1261.5 480.9 1262.1 481C1262.7 481 1264.5 481.2 1265.1 481.2C1265.7 481.2 1267.5 480.9 1268.1 480.9C1268.7 480.9 1270.5 480.9 1271.1 480.9C1271.7 480.8 1273.5 480.5 1274.1 480.5C1274.7 480.5 1276.5 481 1277.1 481C1277.7 481 1279.5 480.7 1280.1 480.7C1280.7 480.6 1282.5 480.3 1283.1 480.3C1283.7 480.3 1285.5 480.7 1286.1 480.7C1286.7 480.7 1288.5 480.5 1289.1 480.4C1289.7 480.4 1291.6 480.5 1292.2 480.4C1292.8 480.4 1294.6 480.1 1295.2 480.1C1295.8 480.1 1297.6 480.3 1298.2 480.3C1298.8 480.3 1300.6 480.5 1301.2 480.4C1301.8 480.4 1303.6 479.7 1304.2 479.7C1304.8 479.7 1306.6 480.1 1307.2 480.1C1307.8 480.2 1309.6 480.1 1310.2 480C1310.8 480 1312.6 479.9 1313.2 479.9C1313.8 479.9 1315.6 479.8 1316.2 479.7C1316.8 479.7 1318.6 479.6 1319.2 479.6C1319.9 479.6 1321.7 480.1 1322.3 480.1C1322.9 480 1324.7 479.4 1325.3 479.4C1325.9 479.3 1327.7 479.4 1328.3 479.4C1328.9 479.5 1330.7 479.7 1331.3 479.7C1331.9 479.7 1333.7 479.4 1334.3 479.4C1334.9 479.4 1336.8 479.3 1337.4 479.3C1338 479.3 1339.8 479.3 1340.5 479.3C1341.1 479.3 1342.9 479 1343.5 479C1344.2 479 1346 479.4 1346.6 479.4C1347.2 479.4 1349.1 479.2 1349.7 479.1C1350.3 479 1352.2 478.7 1352.8 478.7C1353.4 478.7 1355.2 479.2 1355.8 479.2C1356.5 479.2 1358.3 478.9 1358.9 478.9C1359.5 478.8 1361.4 478.9 1362 478.8C1362.6 478.8 1364.5 478.6 1365.1 478.6C1365.7 478.6 1367.5 478.7 1368.2 478.8C1368.8 478.8 1370.6 478.9 1371.2 478.9C1371.9 478.8 1373.7 478.2 1374.3 478.2C1374.9 478.1 1376.8 478.6 1377.4 478.6C1378 478.6 1379.9 478.6 1380.5 478.5C1381.1 478.5 1382.9 478.4 1383.6 478.3C1384.2 478.3 1386 478.3 1386.6 478.2C1387.2 478.2 1389.1 478.1 1389.7 478.1C1390.3 478.1 1392.2 478.6 1392.8 478.5C1393.4 478.5 1395.2 477.9 1395.9 477.9C1396.5 477.8 1398.3 477.9 1398.9 477.9C1399.6 478 1401.4 478.2 1402 478.2C1402.6 478.2 1404.5 477.9 1405.1 477.8C1405.7 477.8 1407.6 477.9 1408.2 477.9C1408.8 477.8 1410.6 477.6 1411.3 477.6C1411.9 477.6 1413.7 478 1414.3 478C1415 478 1416.8 477.7 1417.4 477.7C1418 477.6 1419.9 477.2 1420.5 477.3C1421.1 477.3 1423 477.8 1423.6 477.8C1424.2 477.8 1426 477.5 1426.7 477.4C1427.3 477.4 1429.1 477.4 1429.7 477.4C1430.3 477.4 1432.2 477.2 1432.8 477.2C1433.4 477.2 1435.3 477.3 1435.9 477.3C1436.5 477.4 1438.4 477.5 1439 477.5C1439.6 477.4 1441.4 476.8 1442 476.7C1442.7 476.7 1444.5 477.2 1445.1 477.2C1445.7 477.2 1447.6 477 1448.2 477C1448.8 477 1450.6 477.1 1451.2 477.1C1451.8 477.1 1453.6 476.8 1454.2 476.8C1454.8 476.8 1456.6 476.8 1457.2 476.8C1457.9 476.7 1459.7 476.6 1460.3 476.6C1460.9 476.7 1462.7 477.1 1463.3 477C1463.9 477 1465.7 476.4 1466.3 476.4C1466.9 476.3 1468.7 476.4 1469.3 476.4C1469.9 476.5 1471.7 476.8 1472.3 476.8C1472.9 476.7 1474.7 476.4 1475.3 476.3C1475.9 476.3 1477.8 476.4 1478.4 476.4C1479 476.3 1480.8 476.1 1481.4 476.1C1482 476.1 1483.8 476.5 1484.4 476.5C1485 476.5 1486.8 476.2 1487.4 476.2C1488 476.1 1489.8 475.7 1490.4 475.7C1491 475.8 1492.8 476.3 1493.4 476.3C1494 476.3 1495.9 476 1496.5 475.9C1497.1 475.9 1498.9 475.9 1499.5 475.9C1500.1 475.8 1501.9 475.7 1502.5 475.7C1503.1 475.7 1504.9 475.8 1505.5 475.8C1506.1 475.9 1507.9 476 1508.5 476C1509.1 475.9 1510.9 475.3 1511.5 475.2C1512.1 475.2 1514 475.7 1514.6 475.7C1515.2 475.7 1517 475.7 1517.6 475.7C1518.2 475.6 1520 475.4 1520.6 475.3C1521.2 475.3 1523 475.4 1523.6 475.4C1524.2 475.3 1526 475.2 1526.6 475.2C1527.2 475.2 1529 475.6 1529.6 475.6C1530.2 475.5 1532 475 1532.7 474.9C1533.3 474.9 1535.1 474.9 1535.7 475C1536.3 475 1538.1 475.4 1538.7 475.4C1539.3 475.3 1541.1 474.9 1541.7 474.9C1542.3 474.8 1544.1 474.9 1544.7 474.9C1545.3 474.9 1547.1 474.7 1547.7 474.7C1548.3 474.7 1550.1 475 1550.8 475C1551.4 475 1553.2 474.8 1553.8 474.8C1554.4 474.7 1556.2 474.3 1556.8 474.3C1557.4 474.3 1559.2 474.6 1559.8 474.6C1560.4 474.7 1562.3 474.8 1562.9 474.8C1563.5 474.8 1565.3 474.5 1566 474.4C1566.6 474.3 1568.4 474.3 1569.1 474.2C1569.7 474.2 1571.5 474.2 1572.1 474.2C1572.8 474.2 1574.6 474.2 1575.2 474.2C1575.8 474.2 1577.7 474.3 1578.3 474.3C1578.9 474.2 1580.8 473.6 1581.4 473.6C1582 473.5 1583.9 474 1584.5 474C1585.1 474 1586.9 474 1587.6 473.9C1588.2 473.9 1590 473.5 1590.6 473.5C1591.3 473.5 1593.1 473.6 1593.7 473.6C1594.3 473.6 1596.2 473.4 1596.8 473.4C1597.4 473.4 1599.3 473.7 1599.9 473.7C1600.5 473.7 1602.4 473.1 1603 473.1C1603.6 473 1605.5 473 1606.1 473.1C1606.7 473.1 1608.5 473.5 1609.2 473.5C1609.8 473.4 1611.6 472.9 1612.2 472.9C1612.8 472.8 1614.7 472.9 1615.3 472.9C1615.9 472.9 1617.8 472.8 1618.4 472.8C1619 472.8 1620.9 473 1621.5 473C1622.1 472.9 1624 472.8 1624.6 472.7C1625.2 472.6 1627 472.2 1627.7 472.2C1628.3 472.2 1630.1 472.8 1630.7 472.8C1631.4 472.8 1633.2 472.4 1633.8 472.4C1634.4 472.3 1636.3 472.2 1636.9 472.2C1637.5 472.2 1639.4 472.2 1640 472.2C1640.6 472.2 1642.5 472.1 1643.1 472.1C1643.7 472.1 1645.6 472.1 1646.2 472.1C1646.9 472.2 1648.7 472.3 1649.4 472.3C1650 472.2 1651.9 471.6 1652.5 471.6C1653.1 471.6 1655 472 1655.6 472.1C1656.2 472.1 1658.1 472.1 1658.7 472.1C1659.3 472 1661.2 471.7 1661.8 471.6C1662.5 471.6 1664.3 471.8 1665 471.8C1665.6 471.8 1667.5 471.7 1668.1 471.7C1668.7 471.7 1670.6 471.7 1671.2 471.7C1671.8 471.7 1673.6 471.9 1674.2 471.9C1674.8 471.9 1676.6 471.4 1677.2 471.4C1677.8 471.3 1679.6 471.3 1680.2 471.4C1680.8 471.4 1682.6 471.8 1683.2 471.8C1683.9 471.8 1685.7 471.3 1686.3 471.2C1686.9 471.2 1688.7 471.3 1689.3 471.3C1689.9 471.3 1691.7 471.2 1692.3 471.2C1692.9 471.2 1694.7 471.4 1695.3 471.4C1695.9 471.4 1697.7 471.2 1698.3 471.2C1698.9 471.1 1700.7 470.7 1701.3 470.7C1701.9 470.8 1703.7 471.4 1704.3 471.4C1704.9 471.4 1706.7 471 1707.3 470.9C1707.9 470.9 1709.8 470.8 1710.4 470.8C1711 470.8 1712.8 470.9 1713.4 470.9C1714 470.9 1715.8 470.8 1716.4 470.8C1717 470.8 1718.8 471 1719.4 470.9C1720 470.9 1721.8 470.3 1722.4 470.3C1723 470.3 1724.8 470.7 1725.4 470.7C1726 470.8 1727.8 470.8 1728.4 470.8C1729 470.7 1730.8 470.3 1731.4 470.2C1732 470.2 1733.9 470.5 1734.5 470.5C1735.1 470.5 1736.9 470.3 1737.5 470.3C1738.1 470.3 1739.9 470.6 1740.5 470.5C1741.1 470.5 1742.9 470.1 1743.5 470C1744.1 470 1745.9 470 1746.5 470C1747.1 470.1 1748.9 470.5 1749.5 470.5C1750.1 470.5 1751.9 469.9 1752.5 469.9C1753.1 469.8 1754.9 470 1755.5 470C1756.1 470 1757.9 469.9 1758.6 469.9C1759.2 469.9 1761 470 1761.6 470C1762.2 470 1764 469.9 1764.6 469.8C1765.2 469.8 1767 469.4 1767.6 469.4C1768.2 469.4 1770.3 470.1 1770.6 469.7C1771.4 468.7 1773 462 1773.6 462C1774.2 462 1775.4 468.6 1776.2 469.7C1776.5 470.1 1778.7 470 1779.3 470C1779.9 470 1781.8 469.6 1782.4 469.6C1783 469.5 1784.8 469.4 1785.5 469.4C1786.1 469.4 1787.9 469.5 1788.5 469.5C1789.2 469.5 1791 469.4 1791.6 469.4C1792.2 469.4 1794.1 469.6 1794.7 469.5C1795.3 469.5 1797.2 469 1797.8 468.9C1798.4 468.9 1800.3 469.3 1800.9 469.4C1801.5 469.4 1803.4 469.5 1804 469.4C1804.6 469.4 1806.4 468.9 1807.1 468.9C1807.7 468.8 1809.5 469.1 1810.1 469.1C1810.8 469.1 1812.6 469 1813.2 469C1813.8 469 1815.7 469.2 1816.3 469.2C1816.9 469.1 1818.8 468.8 1819.4 468.7C1820 468.7 1821.9 468.7 1822.5 468.7C1823.1 468.8 1825 469.2 1825.6 469.2C1826.2 469.1 1828 468.6 1828.7 468.5C1829.3 468.5 1831.1 468.6 1831.7 468.6C1832.4 468.6 1834.2 468.6 1834.8 468.6C1835.4 468.6 1837.3 468.7 1837.9 468.7C1838.5 468.7 1840.4 468.5 1841 468.5C1841.6 468.5 1843.5 468.5 1844.1 468.5C1844.7 468.4 1846.6 468 1847.2 468C1847.8 468.1 1849.7 468.6 1850.3 468.6C1850.9 468.7 1852.8 468.3 1853.4 468.2C1854 468.1 1855.9 468 1856.5 468C1857.1 468 1858.9 468.2 1859.6 468.2C1860.2 468.2 1862 468.1 1862.7 468C1863.3 468 1865.1 468.2 1865.8 468.1C1866.4 468.1 1868.2 467.6 1868.8 467.6C1869.5 467.6 1871.3 467.9 1871.9 468C1872.6 468 1874.4 468.1 1875 468C1875.7 467.9 1877.5 467.4 1878.1 467.4C1878.7 467.4 1880.6 467.7 1881.2 467.7C1881.8 467.7 1883.7 467.6 1884.3 467.6C1884.9 467.6 1886.8 467.7 1887.4 467.7C1888 467.6 1889.9 467.3 1890.5 467.3C1891.1 467.2 1893 467.2 1893.6 467.2C1894.2 467.2 1896.1 467.3 1896.7 467.3C1897.3 467.3 1899.1 467.6 1899.7 467.6C1900.3 467.6 1902.2 467 1902.8 466.9C1903.4 466.8 1905.2 467 1905.8 467C1906.4 467 1908.2 467.1 1908.8 467.1C1909.4 467.1 1911.3 467 1911.9 467C1912.5 467 1914.3 466.9 1914.9 466.8C1915.5 466.8 1917.3 466.4 1917.9 466.4C1918.5 466.5 1920.4 467 1921 467C1921.6 467 1923.4 466.6 1924 466.6C1924.6 466.5 1926.4 466.3 1927 466.3C1927.6 466.3 1929.5 466.6 1930.1 466.6C1930.7 466.6 1932.5 466.4 1933.1 466.4C1933.7 466.3 1935.5 466.4 1936.1 466.4C1936.7 466.4 1938.6 465.9 1939.2 465.9C1939.8 465.9 1941.6 466.2 1942.2 466.2C1942.8 466.3 1944.6 466.3 1945.2 466.3C1945.8 466.2 1947.7 465.7 1948.3 465.6C1948.9 465.6 1950.7 466 1951.3 466C1951.9 466 1953.7 465.8 1954.3 465.8C1954.9 465.8 1956.8 465.9 1957.4 465.8C1958 465.8 1959.8 465.5 1960.4 465.5C1961 465.4 1962.8 465.4 1963.4 465.4C1964 465.5 1965.9 465.9 1966.5 465.9C1967.1 465.9 1968.9 465.5 1969.5 465.4C1970.1 465.3 1971.9 465.1 1972.5 465.1C1973.1 465.1 1974.9 465.2 1975.5 465.2C1976.2 465.3 1978 465.4 1978.6 465.4C1979.2 465.4 1981 465.3 1981.6 465.2C1982.2 465.2 1984 465.2 1984.6 465.2C1985.2 465.1 1987 464.8 1987.7 464.8C1988.3 464.8 1990.1 465.4 1990.7 465.4C1991.3 465.4 1993.1 465 1993.7 465C1994.3 464.9 1996.1 464.7 1996.7 464.7C1997.3 464.7 1999.1 465.1 1999.8 465.1C2000.4 465.1 2002.2 464.9 2002.8 464.8C2003.4 464.8 2005.2 464.9 2005.8 464.9C2006.4 464.9 2008.2 464.5 2008.8 464.5C2009.4 464.5 2011.2 464.8 2011.8 464.8C2012.5 464.9 2014.3 465 2014.9 464.9C2015.5 464.8 2017.3 464.3 2017.9 464.2C2018.5 464.2 2020.3 464.6 2020.9 464.7C2021.5 464.7 2023.3 464.6 2024 464.5C2024.6 464.5 2026.4 464.5 2027 464.5C2027.6 464.5 2029.4 464.4 2030 464.4L2030.0 360.5L109.6 360.5Z" fill="rgba(0,255,0,0.3)" stroke="none"/>
<path d="M109.6 504.7C110.7 504.9 113.9 505.5 115 505.8C115.9 506.1 119.5 508.5 119.6 507.6C119.8 506.3 122.7 459.8 122.9 458.5C123 457.8 125 461.4 125.1 462.2C125.3 463.5 130.3 504.5 130.5 505.8C130.6 506.3 132.2 506.9 132.7 506.9C133.3 506.9 135.4 505.7 136 505.8C136.7 506 138.8 508.7 139.3 508.4C140.1 507.8 142.4 502.8 142.5 501.5C142.6 500.2 146.6 415 146.9 413.7C147.2 412.4 149.6 471.8 149.7 473.1C149.7 473.7 151.8 470.4 151.9 470.9C152.1 472.2 154.8 503.4 155 504.7C155.1 505.2 156.7 505.8 157.2 505.8C157.8 505.8 159.7 504.8 160.3 504.7C161 504.5 162.9 504.3 163.5 504.2C164.2 504 166 503 166.7 502.8C167.3 502.5 169.2 502 169.8 501.9C170.4 501.8 172.2 501.8 172.8 501.8C173.4 501.7 175.2 501.5 175.8 501.5C176.4 501.5 178.2 501.8 178.8 501.8C179.4 501.8 181.2 501.6 181.8 501.5C182.4 501.4 184.2 501 184.8 501C185.4 501 187.2 501.5 187.8 501.5C188.4 501.5 190.2 501.2 190.8 501.1C191.4 501.1 193.2 501 193.8 501C194.5 501 196.4 500.9 197.1 500.9C197.8 500.9 199.7 501 200.4 501C201.3 501 203.9 501.3 204.8 501.4C205.6 501.5 208.2 501.8 209.1 501.9C209.8 502 211.7 502 212.4 502.1C213 502.2 215 502.5 215.6 502.5C216.3 502.5 218.3 502 218.9 502C219.6 502.1 221.5 502.5 222.2 502.6C222.9 502.7 225 502.8 225.7 502.9C226.4 503 228.5 503.2 229.2 503.2C229.9 503.2 231.9 503 232.6 503.1C233.3 503.1 235.4 503.3 236.1 503.4C236.8 503.4 238.9 503.6 239.6 503.6C240.3 503.6 242.4 503.9 242.9 503.6C243.6 503.2 245.1 500.1 245.8 499.9C246.4 499.7 248.7 501.7 249.5 501.9C250.1 502.1 252.1 501.9 252.8 501.9C253.4 502 255.4 502.5 256 502.5C256.7 502.5 258.6 502.1 259.3 502.1C259.9 502.1 261.9 502.2 262.5 502.3C263.2 502.3 265.1 502.5 265.8 502.6C266.4 502.7 268.3 503 268.9 503C269.5 503 271.4 502.7 272 502.6C272.6 502.6 274.5 502.8 275.1 502.8C275.8 502.9 277.6 502.8 278.3 502.8C278.9 502.9 280.7 503.2 281.4 503.2C282 503.3 283.9 503.2 284.5 503.2C285.1 503.2 287 503.2 287.6 503.2C288.2 503.2 290.1 502.9 290.7 503C291.4 503 293.2 503.7 293.9 503.8C294.5 503.8 296.4 503.6 297 503.6C297.6 503.6 299.5 503.6 300.1 503.6C300.7 503.6 302.6 503.8 303.2 503.8C303.9 503.8 305.7 504 306.4 504C307 504 308.9 504.1 309.5 504.1C310.2 504.1 312.2 504.3 312.9 504.2C313.6 504.2 315.6 503.5 316.3 503.5C317 503.5 319.1 503.8 319.8 503.9C320.4 503.9 322.5 503.9 323.2 503.8C323.9 503.8 325.9 503.4 326.6 503.3C327.3 503.3 329.3 503.4 330 503.4C330.7 503.4 332.8 503.7 333.5 503.7C334.2 503.8 336.2 503.9 336.9 504C337.6 504.1 339.7 504.6 340.4 504.6C341.1 504.7 343.2 504.4 343.8 504.5C344.5 504.5 347 505.5 347.3 505C347.9 503.8 349.3 492.9 350 492.3C350.5 491.9 352.3 499.3 353 500.4C353.4 501 355.8 501.4 356.4 501.6C357.2 501.9 359.2 503 359.9 503.2C360.5 503.4 362.5 503.9 363.1 503.9C363.8 504 365.7 503.7 366.3 503.8C367 503.8 368.9 504.2 369.6 504.3C370.2 504.3 372.1 504.5 372.8 504.6C373.4 504.6 375.5 505.3 376 505C376.8 504.6 378.4 500.9 379 500.9C379.6 500.9 381.1 504.5 381.8 505C382.3 505.3 384.6 505 385.3 504.9C386 504.9 388 504.7 388.7 504.6C389.4 504.5 391.5 503.9 392.2 503.9C392.9 503.9 394.9 504.4 395.6 504.4C396.3 504.3 398.4 503.8 399.1 503.8C399.8 503.8 401.7 504 402.4 504C403 504.1 405 504.1 405.7 504.1C406.3 504.2 408.3 504.5 409 504.5C409.6 504.6 411.6 504.7 412.2 504.8C412.9 504.9 414.9 505.2 415.5 505.2C416.2 505.3 418.2 504.9 418.8 504.9C419.5 504.9 421.4 505.5 422.1 505.5C422.8 505.5 424.7 505.2 425.4 505.1C426 505.1 428 504.9 428.7 504.8C429.3 504.7 431.3 504 432 503.9C432.6 503.8 434.6 503.7 435.2 503.6C435.9 503.6 437.9 503.2 438.5 503.1C439.2 503 441.2 503 441.8 502.9C442.5 502.8 444.4 502.3 445.1 502.2C445.8 502.1 447.7 501.8 448.4 501.7C449.1 501.6 451 501.4 451.7 501.4C452.4 501.4 454.4 501.6 455 501.6C455.7 501.5 457.6 500.8 458.3 500.7C458.9 500.6 460.9 500.6 461.6 500.5C462.3 500.5 464.2 500.3 464.9 500.2C465.6 500.1 467.5 499.9 468.2 499.9C468.9 499.9 470.8 499.8 471.5 499.7C472.1 499.7 474.1 499.4 474.8 499.3C475.4 499.2 477.4 498.6 478.1 498.6C478.7 498.5 480.7 498.9 481.3 498.9C482 498.9 484 498.4 484.6 498.3C485.3 498.1 487.3 497.8 487.9 497.8C488.6 497.7 490.5 497.7 491.2 497.6C492.4 497.5 495.9 496.7 497 496.9C498 497.1 500.5 499.4 501.5 499.7C502 499.9 503.9 499.5 504.5 499.5C505.1 499.4 506.9 499.2 507.6 499.2C508.2 499.2 510 499.2 510.6 499.1C511.2 499 513 498.4 513.6 498.3C514.2 498.2 516 498.5 516.6 498.5C517.2 498.5 519.1 498.5 519.7 498.4C520.3 498.3 522.1 497.7 522.7 497.6C523.3 497.5 525.1 497.6 525.7 497.6C526.4 497.6 528.5 497.2 529.2 497.1C529.8 497 531.9 496.7 532.6 496.6C533.3 496.5 535.4 496.4 536 496.3C536.8 496.2 538.8 495.6 539.5 495.4C540.2 495.3 542.3 495 543 494.9C543.6 494.8 545.7 494.6 546.4 494.6C547 494.6 548.9 494.8 549.6 494.8C550.2 494.7 552.1 494.1 552.8 494C553.4 493.9 555.3 494 555.9 493.9C556.6 493.9 558.5 493.8 559.1 493.8C559.7 493.8 561.6 493.7 562.3 493.7C562.9 493.7 564.8 493.5 565.4 493.4C566.1 493.4 568 492.9 568.6 492.9C569.3 492.8 571.2 493 571.8 493C572.4 493 574.3 493.3 574.9 493.3C575.6 493.3 577.4 493.1 578.1 493C578.7 493 580.6 492.8 581.2 492.8C581.8 492.8 583.7 493.1 584.3 493.1C585 493.1 586.9 493 587.5 493C588.1 493 590 493.2 590.6 493.2C591.2 493.1 593.1 492.7 593.8 492.7C594.4 492.7 596.3 493 596.9 493.1C597.5 493.2 599.4 493.3 600 493.3C600.7 493.2 602.5 492.7 603.2 492.7C603.8 492.7 605.7 493 606.3 493C606.9 493 608.8 493 609.4 493C610 493 611.9 492.9 612.5 493C613.1 493 615 493.1 615.6 493.1C616.2 493.1 618.1 492.8 618.7 492.8C619.3 492.7 621.2 492.9 621.8 492.9C622.4 492.9 624.3 492.8 624.9 492.9C625.5 493 627.4 493.6 628 493.6C628.6 493.6 630.5 493.2 631.1 493.2C631.8 493.1 633.6 493.4 634.3 493.5C634.9 493.5 636.7 493.7 637.4 493.7C638 493.8 639.9 493.9 640.5 493.9C641.1 493.9 643 494 643.6 494C644.2 494 646.1 494.1 646.7 494C647.4 494 649.2 493.6 649.9 493.7C650.5 493.7 652.4 494.3 653 494.3C653.6 494.4 655.5 494.1 656.1 494C656.7 494 658.6 493.8 659.2 493.8C659.9 493.8 661.7 494.1 662.4 494.1C663 494.1 664.9 494 665.5 494C666.2 494 668.3 494.2 669 494.2C669.7 494.3 671.8 494.6 672.5 494.6C673.2 494.6 675.2 494.3 675.9 494.4C676.6 494.4 678.7 494.9 679.4 495C680.1 495.1 682.2 495 682.9 495.1C683.6 495.2 685.8 496 686.5 496.1C687.2 496.2 689.5 496.1 690.2 496.3C690.9 496.4 693.1 497.1 693.8 497.3C694.5 497.5 696.7 497.8 697.4 497.9C698.2 498 700.3 498.2 701.1 498.3C701.8 498.4 704 498.7 704.7 498.8C705.4 498.9 707.6 499.3 708.3 499.4C709.1 499.4 711.2 499.5 712 499.5C712.7 499.6 714.9 500.2 715.6 500.1C716.7 500 720.6 499.6 721.1 498.8C721.8 497.7 722.4 490.9 722.6 489.6C722.8 488.3 724.3 475.6 724.8 474.4C725 473.9 726.7 479.5 727 479.2C727.7 478.6 729.4 469.1 729.8 469.6C730.4 470.3 731.8 484 732 485.3C732.2 486.6 734.9 502.6 735.3 503.8C735.5 504.4 737.9 504.1 738.5 504.2C739.2 504.3 741.1 504.8 741.8 504.9C742.5 505 744.4 505.5 745.1 505.5C745.8 505.5 747.8 505.2 748.4 505.3C749.1 505.4 751 506.7 751.6 506.7C752.6 506.7 755.5 505.1 756.5 504.9C757.1 504.7 759.1 504.7 759.8 504.7C760.5 504.7 762.4 504.8 763.1 504.9C764 505 766.6 505.3 767.5 505.4C768.3 505.5 771 505.8 771.8 506C772.4 506.2 774.2 507.2 774.8 507.5C775.5 507.8 777.8 509.4 777.9 508.8C778.1 507.5 780.4 464.8 780.5 463.5C780.6 462.2 782.9 433 783.4 433.4C784 433.9 785.9 466.5 786 467.8C786.1 469.1 788.3 506 788.8 504.9C789.3 503.7 791.4 456 791.5 454.7C791.6 453.4 794.1 414.1 794.3 412.8C794.5 411.7 796.8 418.5 796.9 419.8C797 421.1 799.6 466.5 799.7 467.8C799.8 469.1 801.6 507.5 801.9 506.7C802.3 505.7 803.4 460.4 803.5 459.1C803.6 457.8 805.4 417.9 805.6 416.6C805.7 415.6 808.5 420.8 808.9 422C809.4 423.2 812 435 812.8 435.5C813.3 435.9 815.3 427.7 815.5 426.4C815.7 425.1 817.4 408 817.6 406.7C817.8 405.7 819.1 402.6 819.8 401.9C820.6 401.1 824.2 399.7 825.3 399.1C826.4 398.5 829.6 396.6 830.7 396.3C831.3 396.1 833.3 396.6 834 396.6C834.7 396.7 836.7 396.8 837.3 396.9C838.2 397.1 840.8 397.8 841.6 398C842.5 398.3 845.1 398.8 846 399.1C846.7 399.3 848.7 400.1 849.3 400.4C850 400.8 852 401.9 852.6 402.4C853.5 403.2 856 405.8 856.9 406.7C857.6 407.4 859.7 409.2 860.2 410C860.8 411 862.3 414.3 862.4 415.5C862.6 416.8 865.6 457.3 866.3 458C866.9 458.6 868.8 423.3 868.9 422C869 420.7 870.5 410.5 871.1 409.3C871.4 408.7 874.1 409.3 874.9 409.2C875.7 409.1 878 408.3 878.7 408.5C879.4 408.7 881.3 411.1 882 411.1C882.8 411.1 885.5 409.2 886.4 408.9C887.1 408.6 889.4 408.2 890.2 408.1C891 407.9 893.2 407.3 894 407.2C894.9 407.1 897.5 407.2 898.4 407.2C899.2 407.3 901.8 407.7 902.7 407.8C903.5 407.9 906 408.2 906.8 408.3C907.6 408.4 910.8 407.8 910.9 408.5C911.2 409.8 912.6 436 912.7 437.3C912.8 438.6 914.1 490.5 914.2 491.8C914.3 493.1 916.1 510.2 916.4 511.5C916.7 512.8 919 519.1 919.6 519.1C920.1 519.1 921.6 512.8 921.8 511.5C922 510.2 925 473.5 925.1 472.2C925.2 470.9 927.8 427.7 927.9 426.4C928 425.1 930.3 405.9 930.5 407.2C930.7 408.5 932.6 455.6 932.7 456.9C932.7 457.2 934.5 457.2 934.5 456.9C934.6 455.6 936.9 414.6 937.1 413.3C937.3 412.1 940.5 409.4 941.5 408.9C942.2 408.5 945.7 408.1 945.8 408.9C946 410.2 947.5 446.9 947.6 448.2C947.7 449.5 949 470.9 949.1 472.2C949.2 473.5 950.7 486.3 951.3 487.5C951.6 488.1 953.9 481.1 954.1 482C954.4 483.3 957.1 517.6 957.4 516.3C957.7 515 959.3 460.4 959.3 459.1C959.3 457.8 960.9 412.4 961.1 411.1C961.3 409.8 965.9 406.6 966.5 407.2C967.4 408.1 969.5 418.5 969.8 419.8C970.1 421.1 973.3 438.7 973.8 439.9C974 440.4 976.2 438 976.4 437.3C976.7 436 979.3 418.9 979.6 417.6C979.9 416.3 983.3 403.5 984 402.4C984.5 401.5 989 400.6 989.5 401.3C990.3 402.3 991.7 412.5 992.3 412.8C992.8 413 994.2 405.2 994.9 404.1C995.4 403.3 998.5 401.8 999.3 401.9C1000.4 402.1 1003.7 404.8 1004.7 405.6C1005.4 406.1 1007.7 407.7 1008 408.5C1008.5 409.7 1010.7 420.7 1010.8 422C1010.9 423.3 1012.4 457.8 1012.4 459.1C1012.4 460.4 1013.4 500.3 1013.5 501.6C1013.5 502.1 1015.4 499.1 1015.6 499.5C1016.1 500.7 1018.1 513.3 1018.9 514.1C1019.4 514.6 1020.8 506.8 1021.8 506C1022.4 505.5 1025.8 506.9 1026.6 507.5C1027.7 508.2 1031.8 514.4 1032 513.2C1032.2 511.9 1033.5 460.4 1033.5 459.1C1033.5 457.8 1035.1 410.2 1035.3 408.9C1035.4 408.1 1038.8 410.8 1039.6 410.7C1040.5 410.6 1043.1 408.2 1044 407.8C1044.6 407.6 1046.6 407.6 1047.3 407.5C1048 407.4 1050.2 406.8 1050.6 407.2C1051.5 408 1053.6 412 1053.8 413.3C1054 414.6 1055.9 446.9 1056 448.2C1056.1 449.5 1058.3 499.8 1058.8 501C1059.2 502 1060.3 460.4 1060.4 459.1C1060.5 457.8 1062 414.1 1062.2 412.8C1062.4 411.5 1064.3 425.1 1064.4 426.4C1064.5 427.7 1066.4 462.2 1066.5 463.5C1066.6 464.8 1069.6 509.1 1069.8 510.4C1069.9 511.1 1071.8 512.8 1072.4 512.6C1073.7 512.3 1080.7 507.7 1081.8 507.1C1082.5 506.7 1084.7 506 1085.4 505.6C1086.2 505.3 1088.3 504 1089.1 503.6C1089.8 503.3 1092 502.6 1092.7 502.3C1093.3 502.1 1095.1 501.4 1095.7 501.2C1096.3 501 1098.1 500.5 1098.7 500.3C1099.3 500 1101.1 498.8 1101.7 498.5C1102.3 498.3 1104.1 497.6 1104.7 497.7C1105.7 497.8 1109.6 500.4 1109.7 499.5C1109.9 498.2 1111.2 449.5 1111.3 448.2C1111.4 446.9 1113.3 426.6 1113.5 425.3C1113.6 424.7 1115.5 423.7 1115.6 423.1C1115.8 421.8 1117.9 399.6 1118.3 398.4C1118.6 397.5 1120.2 406 1120.7 407.2C1121 407.9 1123.1 409.3 1123.3 410C1123.7 411.2 1125.2 421.8 1125.5 423.1C1125.8 424.4 1128.5 431.6 1128.7 432.9C1128.9 434.2 1130.2 457.8 1130.3 459.1C1130.4 460.4 1131.1 479.6 1131.3 480.9C1131.5 482 1133.7 484.7 1134.2 485.7C1134.8 486.9 1136 491.4 1136.8 492.3C1137.1 492.7 1139.2 492 1139.8 491.9C1140.5 491.8 1142.3 491.5 1142.9 491.4C1143.8 491.2 1146.4 490.3 1147.3 490.1C1148 490 1150.2 489.9 1150.9 489.8C1151.7 489.8 1153.8 489.7 1154.6 489.6C1155.3 489.5 1157.5 489.3 1158.2 489.2C1158.8 489.1 1160.7 488.9 1161.3 488.8C1161.9 488.8 1163.8 488.6 1164.4 488.6C1165.1 488.6 1166.9 488.9 1167.5 488.9C1168.2 488.8 1170 488.1 1170.7 488C1171.3 487.9 1173.1 487.9 1173.8 487.9C1174.4 487.9 1176.3 487.9 1176.9 487.9C1177.5 487.8 1179.4 487.6 1180 487.5C1180.6 487.4 1182.5 487.3 1183.1 487.2C1183.7 487.1 1185.6 487 1186.2 486.9C1186.9 486.8 1188.7 486.3 1189.3 486.3C1190 486.2 1191.8 486.6 1192.5 486.6C1193.1 486.5 1194.9 486.1 1195.6 485.9C1196.2 485.8 1198.1 485.4 1198.7 485.3C1199.3 485.3 1201.2 485.3 1201.8 485.3C1202.4 485.3 1204.3 485.2 1204.9 485.1C1205.5 485.1 1207.3 484.7 1207.9 484.6C1208.5 484.5 1210.4 484.4 1211 484.3C1211.6 484.2 1213.4 483.7 1214 483.6C1214.6 483.5 1216.5 483.5 1217.1 483.5C1217.7 483.5 1219.7 483.7 1220.3 483.8C1221 483.9 1222.9 484.2 1223.5 484.2C1224.2 484.2 1226.1 483.7 1226.8 483.7C1227.4 483.8 1229.4 484.3 1230 484.3C1230.7 484.3 1232.8 484.2 1233.5 484.2C1234.2 484.1 1236.3 483.9 1237 483.8C1237.7 483.7 1239.7 483.2 1240.3 483.1C1241 482.9 1243 482.4 1243.7 482.2C1244.3 482.1 1246.3 481.5 1247 481.4C1247.6 481.3 1249.4 481.3 1250 481.2C1250.6 481.2 1252.4 481.1 1253 481.1C1253.6 481.1 1255.4 481.6 1256 481.6C1256.6 481.6 1258.4 480.9 1259 480.9C1259.6 480.8 1261.5 480.9 1262.1 481C1262.7 481 1264.5 481.2 1265.1 481.2C1265.7 481.2 1267.5 480.9 1268.1 480.9C1268.7 480.9 1270.5 480.9 1271.1 480.9C1271.7 480.8 1273.5 480.5 1274.1 480.5C1274.7 480.5 1276.5 481 1277.1 481C1277.7 481 1279.5 480.7 1280.1 480.7C1280.7 480.6 1282.5 480.3 1283.1 480.3C1283.7 480.3 1285.5 480.7 1286.1 480.7C1286.7 480.7 1288.5 480.5 1289.1 480.4C1289.7 480.4 1291.6 480.5 1292.2 480.4C1292.8 480.4 1294.6 480.1 1295.2 480.1C1295.8 480.1 1297.6 480.3 1298.2 480.3C1298.8 480.3 1300.6 480.5 1301.2 480.4C1301.8 480.4 1303.6 479.7 1304.2 479.7C1304.8 479.7 1306.6 480.1 1307.2 480.1C1307.8 480.2 1309.6 480.1 1310.2 480C1310.8 480 1312.6 479.9 1313.2 479.9C1313.8 479.9 1315.6 479.8 1316.2 479.7C1316.8 479.7 1318.6 479.6 1319.2 479.6C1319.9 479.6 1321.7 480.1 1322.3 480.1C1322.9 480 1324.7 479.4 1325.3 479.4C1325.9 479.3 1327.7 479.4 1328.3 479.4C1328.9 479.5 1330.7 479.7 1331.3 479.7C1331.9 479.7 1333.7 479.4 1334.3 479.4C1334.9 479.4 1336.8 479.3 1337.4 479.3C1338 479.3 1339.8 479.3 1340.5 479.3C1341.1 479.3 1342.9 479 1343.5 479C1344.2 479 1346 479.4 1346.6 479.4C1347.2 479.4 1349.1 479.2 1349.7 479.1C1350.3 479 1352.2 478.7 1352.8 478.7C1353.4 478.7 1355.2 479.2 1355.8 479.2C1356.5 479.2 1358.3 478.9 1358.9 478.9C1359.5 478.8 1361.4 478.9 1362 478.8C1362.6 478.8 1364.5 478.6 1365.1 478.6C1365.7 478.6 1367.5 478.7 1368.2 478.8C1368.8 478.8 1370.6 478.9 1371.2 478.9C1371.9 478.8 1373.7 478.2 1374.3 478.2C1374.9 478.1 1376.8 478.6 1377.4 478.6C1378 478.6 1379.9 478.6 1380.5 478.5C1381.1 478.5 1382.9 478.4 1383.6 478.3C1384.2 478.3 1386 478.3 1386.6 478.2C1387.2 478.2 1389.1 478.1 1389.7 478.1C1390.3 478.1 1392.2 478.6 1392.8 478.5C1393.4 478.5 1395.2 477.9 1395.9 477.9C1396.5 477.8 1398.3 477.9 1398.9 477.9C1399.6 478 1401.4 478.2 1402 478.2C1402.6 478.2 1404.5 477.9 1405.1 477.8C1405.7 477.8 1407.6 477.9 1408.2 477.9C1408.8 477.8 1410.6 477.6 1411.3 477.6C1411.9 477.6 1413.7 478 1414.3 478C1415 478 1416.8 477.7 1417.4 477.7C1418 477.6 1419.9 477.2 1420.5 477.3C1421.1 477.3 1423 477.8 1423.6 477.8C1424.2 477.8 1426 477.5 1426.7 477.4C1427.3 477.4 1429.1 477.4 1429.7 477.4C1430.3 477.4 1432.2 477.2 1432.8 477.2C1433.4 477.2 1435.3 477.3 1435.9 477.3C1436.5 477.4 1438.4 477.5 1439 477.5C1439.6 477.4 1441.4 476.8 1442 476.7C1442.7 476.7 1444.5 477.2 1445.1 477.2C1445.7 477.2 1447.6 477 1448.2 477C1448.8 477 1450.6 477.1 1451.2 477.1C1451.8 477.1 1453.6 476.8 1454.2 476.8C1454.8 476.8 1456.6 476.8 1457.2 476.8C1457.9 476.7 1459.7 476.6 1460.3 476.6C1460.9 476.7 1462.7 477.1 1463.3 477C1463.9 477 1465.7 476.4 1466.3 476.4C1466.9 476.3 1468.7 476.4 1469.3 476.4C1469.9 476.5 1471.7 476.8 1472.3 476.8C1472.9 476.7 1474.7 476.4 1475.3 476.3C1475.9 476.3 1477.8 476.4 1478.4 476.4C1479 476.3 1480.8 476.1 1481.4 476.1C1482 476.1 1483.8 476.5 1484.4 476.5C1485 476.5 1486.8 476.2 1487.4 476.2C1488 476.1 1489.8 475.7 1490.4 475.7C1491 475.8 1492.8 476.3 1493.4 476.3C1494 476.3 1495.9 476 1496.5 475.9C1497.1 475.9 1498.9 475.9 1499.5 475.9C1500.1 475.8 1501.9 475.7 1502.5 475.7C1503.1 475.7 1504.9 475.8 1505.5 475.8C1506.1 475.9 1507.9 476 1508.5 476C1509.1 475.9 1510.9 475.3 1511.5 475.2C1512.1 475.2 1514 475.7 1514.6 475.7C1515.2 475.7 1517 475.7 1517.6 475.7C1518.2 475.6 1520 475.4 1520.6 475.3C1521.2 475.3 1523 475.4 1523.6 475.4C1524.2 475.3 1526 475.2 1526.6 475.2C1527.2 475.2 1529 475.6 1529.6 475.6C1530.2 475.5 1532 475 1532.7 474.9C1533.3 474.9 1535.1 474.9 1535.7 475C1536.3 475 1538.1 475.4 1538.7 475.4C1539.3 475.3 1541.1 474.9 1541.7 474.9C1542.3 474.8 1544.1 474.9 1544.7 474.9C1545.3 474.9 1547.1 474.7 1547.7 474.7C1548.3 474.7 1550.1 475 1550.8 475C1551.4 475 1553.2 474.8 1553.8 474.8C1554.4 474.7 1556.2 474.3 1556.8 474.3C1557.4 474.3 1559.2 474.6 1559.8 474.6C1560.4 474.7 1562.3 474.8 1562.9 474.8C1563.5 474.8 1565.3 474.5 1566 474.4C1566.6 474.3 1568.4 474.3 1569.1 474.2C1569.7 474.2 1571.5 474.2 1572.1 474.2C1572.8 474.2 1574.6 474.2 1575.2 474.2C1575.8 474.2 1577.7 474.3 1578.3 474.3C1578.9 474.2 1580.8 473.6 1581.4 473.6C1582 473.5 1583.9 474 1584.5 474C1585.1 474 1586.9 474 1587.6 473.9C1588.2 473.9 1590 473.5 1590.6 473.5C1591.3 473.5 1593.1 473.6 1593.7 473.6C1594.3 473.6 1596.2 473.4 1596.8 473.4C1597.4 473.4 1599.3 473.7 1599.9 473.7C1600.5 473.7 1602.4 473.1 1603 473.1C1603.6 473 1605.5 473 1606.1 473.1C1606.7 473.1 1608.5 473.5 1609.2 473.5C1609.8 473.4 1611.6 472.9 1612.2 472.9C1612.8 472.8 1614.7 472.9 1615.3 472.9C1615.9 472.9 1617.8 472.8 1618.4 472.8C1619 472.8 1620.9 473 1621.5 473C1622.1 472.9 1624 472.8 1624.6 472.7C1625.2 472.6 1627 472.2 1627.7 472.2C1628.3 472.2 1630.1 472.8 1630.7 472.8C1631.4 472.8 1633.2 472.4 1633.8 472.4C1634.4 472.3 1636.3 472.2 1636.9 472.2C1637.5 472.2 1639.4 472.2 1640 472.2C1640.6 472.2 1642.5 472.1 1643.1 472.1C1643.7 472.1 1645.6 472.1 1646.2 472.1C1646.9 472.2 1648.7 472.3 1649.4 472.3C1650 472.2 1651.9 471.6 1652.5 471.6C1653.1 471.6 1655 472 1655.6 472.1C1656.2 472.1 1658.1 472.1 1658.7 472.1C1659.3 472 1661.2 471.7 1661.8 471.6C1662.5 471.6 1664.3 471.8 1665 471.8C1665.6 471.8 1667.5 471.7 1668.1 471.7C1668.7 471.7 1670.6 471.7 1671.2 471.7C1671.8 471.7 1673.6 471.9 1674.2 471.9C1674.8 471.9 1676.6 471.4 1677.2 471.4C1677.8 471.3 1679.6 471.3 1680.2 471.4C1680.8 471.4 1682.6 471.8 1683.2 471.8C1683.9 471.8 1685.7 471.3 1686.3 471.2C1686.9 471.2 1688.7 471.3 1689.3 471.3C1689.9 471.3 1691.7 471.2 1692.3 471.2C1692.9 471.2 1694.7 471.4 1695.3 471.4C1695.9 471.4 1697.7 471.2 1698.3 471.2C1698.9 471.1 1700.7 470.7 1701.3 470.7C1701.9 470.8 1703.7 471.4 1704.3 471.4C1704.9 471.4 1706.7 471 1707.3 470.9C1707.9 470.9 1709.8 470.8 1710.4 470.8C1711 470.8 1712.8 470.9 1713.4 470.9C1714 470.9 1715.8 470.8 1716.4 470.8C1717 470.8 1718.8 471 1719.4 470.9C1720 470.9 1721.8 470.3 1722.4 470.3C1723 470.3 1724.8 470.7 1725.4 470.7C1726 470.8 1727.8 470.8 1728.4 470.8C1729 470.7 1730.8 470.3 1731.4 470.2C1732 470.2 1733.9 470.5 1734.5 470.5C1735.1 470.5 1736.9 470.3 1737.5 470.3C1738.1 470.3 1739.9 470.6 1740.5 470.5C1741.1 470.5 1742.9 470.1 1743.5 470C1744.1 470 1745.9 470 1746.5 470C1747.1 470.1 1748.9 470.5 1749.5 470.5C1750.1 470.5 1751.9 469.9 1752.5 469.9C1753.1 469.8 1754.9 470 1755.5 470C1756.1 470 1757.9 469.9 1758.6 469.9C1759.2 469.9 1761 470 1761.6 470C1762.2 470 1764 469.9 1764.6 469.8C1765.2 469.8 1767 469.4 1767.6 469.4C1768.2 469.4 1770.3 470.1 1770.6 469.7C1771.4 468.7 1773 462 1773.6 462C1774.2 462 1775.4 468.6 1776.2 469.7C1776.5 470.1 1778.7 470 1779.3 470C1779.9 470 1781.8 469.6 1782.4 469.6C1783 469.5 1784.8 469.4 1785.5 469.4C1786.1 469.4 1787.9 469.5 1788.5 469.5C1789.2 469.5 1791 469.4 1791.6 469.4C1792.2 469.4 1794.1 469.6 1794.7 469.5C1795.3 469.5 1797.2 469 1797.8 468.9C1798.4 468.9 1800.3 469.3 1800.9 469.4C1801.5 469.4 1803.4 469.5 1804 469.4C1804.6 469.4 1806.4 468.9 1807.1 468.9C1807.7 468.8 1809.5 469.1 1810.1 469.1C1810.8 469.1 1812.6 469 1813.2 469C1813.8 469 1815.7 469.2 1816.3 469.2C1816.9 469.1 1818.8 468.8 1819.4 468.7C1820 468.7 1821.9 468.7 1822.5 468.7C1823.1 468.8 1825 469.2 1825.6 469.2C1826.2 469.1 1828 468.6 1828.7 468.5C1829.3 468.5 1831.1 468.6 1831.7 468.6C1832.4 468.6 1834.2 468.6 1834.8 468.6C1835.4 468.6 1837.3 468.7 1837.9 468.7C1838.5 468.7 1840.4 468.5 1841 468.5C1841.6 468.5 1843.5 468.5 1844.1 468.5C1844.7 468.4 1846.6 468 1847.2 468C1847.8 468.1 1849.7 468.6 1850.3 468.6C1850.9 468.7 1852.8 468.3 1853.4 468.2C1854 468.1 1855.9 468 1856.5 468C1857.1 468 1858.9 468.2 1859.6 468.2C1860.2 468.2 1862 468.1 1862.7 468C1863.3 468 1865.1 468.2 1865.8 468.1C1866.4 468.1 1868.2 467.6 1868.8 467.6C1869.5 467.6 1871.3 467.9 1871.9 468C1872.6 468 1874.4 468.1 1875 468C1875.7 467.9 1877.5 467.4 1878.1 467.4C1878.7 467.4 1880.6 467.7 1881.2 467.7C1881.8 467.7 1883.7 467.6 1884.3 467.6C1884.9 467.6 1886.8 467.7 1887.4 467.7C1888 467.6 1889.9 467.3 1890.5 467.3C1891.1 467.2 1893 467.2 1893.6 467.2C1894.2 467.2 1896.1 467.3 1896.7 467.3C1897.3 467.3 1899.1 467.6 1899.7 467.6C1900.3 467.6 1902.2 467 1902.8 466.9C1903.4 466.8 1905.2 467 1905.8 467C1906.4 467 1908.2 467.1 1908.8 467.1C1909.4 467.1 1911.3 467 1911.9 467C1912.5 467 1914.3 466.9 1914.9 466.8C1915.5 466.8 1917.3 466.4 1917.9 466.4C1918.5 466.5 1920.4 467 1921 467C1921.6 467 1923.4 466.6 1924 466.6C1924.6 466.5 1926.4 466.3 1927 466.3C1927.6 466.3 1929.5 466.6 1930.1 466.6C1930.7 466.6 1932.5 466.4 1933.1 466.4C1933.7 466.3 1935.5 466.4 1936.1 466.4C1936.7 466.4 1938.6 465.9 1939.2 465.9C1939.8 465.9 1941.6 466.2 1942.2 466.2C1942.8 466.3 1944.6 466.3 1945.2 466.3C1945.8 466.2 1947.7 465.7 1948.3 465.6C1948.9 465.6 1950.7 466 1951.3 466C1951.9 466 1953.7 465.8 1954.3 465.8C1954.9 465.8 1956.8 465.9 1957.4 465.8C1958 465.8 1959.8 465.5 1960.4 465.5C1961 465.4 1962.8 465.4 1963.4 465.4C1964 465.5 1965.9 465.9 1966.5 465.9C1967.1 465.9 1968.9 465.5 1969.5 465.4C1970.1 465.3 1971.9 465.1 1972.5 465.1C1973.1 465.1 1974.9 465.2 1975.5 465.2C1976.2 465.3 1978 465.4 1978.6 465.4C1979.2 465.4 1981 465.3 1981.6 465.2C1982.2 465.2 1984 465.2 1984.6 465.2C1985.2 465.1 1987 464.8 1987.7 464.8C1988.3 464.8 1990.1 465.4 1990.7 465.4C1991.3 465.4 1993.1 465 1993.7 465C1994.3 464.9 1996.1 464.7 1996.7 464.7C1997.3 464.7 1999.1 465.1 1999.8 465.1C2000.4 465.1 2002.2 464.9 2002.8 464.8C2003.4 464.8 2005.2 464.9 2005.8 464.9C2006.4 464.9 2008.2 464.5 2008.8 464.5C2009.4 464.5 2011.2 464.8 2011.8 464.8C2012.5 464.9 2014.3 465 2014.9 464.9C2015.5 464.8 2017.3 464.3 2017.9 464.2C2018.5 464.2 2020.3 464.6 2020.9 464.7C2021.5 464.7 2023.3 464.6 2024 464.5C2024.6 464.5 2026.4 464.5 2027 464.5C2027.6 464.5 2029.4 464.4 2030 464.4" fill="none" stroke="#2bf02b" stroke-width="1.4" stroke-linejoin="round"/>
<path d="M109.6 230.1C110.5 230.2 113.3 230.8 114.2 230.7C114.7 230.6 115.9 229.3 116.4 229.2C117.6 229 122.5 228.1 122.9 229.2C123.3 230.4 127.5 260.1 127.9 261.3C128.3 262.4 129.9 252.6 130.5 251.5C130.8 250.9 133.6 251 133.8 250.4C134.2 249.2 136.3 231.9 136.7 230.7C136.9 230.1 139.3 230.1 140 230C141.3 229.8 146.5 228.1 146.9 229.2C147.3 230.4 149.9 260 150.2 261.3C150.3 261.9 153.4 261.9 153.5 261.3C153.8 260 157.5 232 157.8 230.7C157.9 230.1 159.9 229.5 160.5 229.5C161 229.5 162.7 230.3 163.3 230.3C163.8 230.3 165.5 229.6 166 229.6C166.8 229.6 169.2 230.4 170 230.4C170.8 230.4 173.2 229.7 174 229.7C174.8 229.7 177.2 230.3 178 230.3C178.8 230.3 181.2 229.8 182 229.8C182.8 229.8 185.2 230.3 186 230.3C186.8 230.3 189.2 229.6 190 229.6C190.5 229.6 192.7 229.6 192.7 230.1C192.7 231.4 193.6 360.4 194.9 360.5C196.2 360.6 2028.7 360.5 2030 360.5" fill="none" stroke="#000" stroke-width="3.2" stroke-linejoin="round"/>
<path d="M109.6 360.3C110.9 360.3 605.9 360.6 607.2 360.4C608.5 360.2 614.7 270.7 614.8 269.4C614.9 268.8 616.9 268.2 617.5 268C618.1 267.8 620.1 267.5 620.7 267.6C621.8 267.8 625.1 269.4 626.2 269.4C626.9 269.4 628.8 267.8 629.5 267.6C630.3 267.4 633.7 266.8 633.8 267.6C634 268.9 636 325.5 636.7 325.5C637.4 325.5 640.1 267.6 641 267.6C641.8 267.6 644.4 325.5 645.2 325.5C646 325.5 648.5 267.6 649.3 267.6C650.1 267.6 652.7 325.3 653.5 325.5C654.3 325.7 656.6 269.4 657.4 269.4C658.2 269.4 660.7 325.7 661.5 325.5C662.3 325.3 664.7 267.6 665.5 267.6C666.3 267.6 669 325.4 669.8 325.5C670.6 325.5 673.1 268.1 673.8 268.1C674.5 268.1 676.6 324.2 676.8 325.5C677 326.8 679 294.7 679.2 296C679.4 297.3 681.7 356.9 681.8 358.2C681.8 358.7 682.2 360.2 682.5 360.4C682.8 360.6 685 360.9 685.1 360.4C685.4 359.1 687.2 340.9 687.3 339.6C687.4 338.3 690.1 244.9 690.1 243.6C690.1 242.3 691.4 201.3 691.5 200C691.6 198.7 692.4 182.6 692.6 183C692.9 183.6 693.7 203.7 693.8 205C693.9 206.3 694.7 233.6 694.9 234.9C695 235.7 697.5 237.1 698.2 237.1C699.4 237.2 703.4 235.3 704.7 235.3C706 235.3 710 236.4 711.3 236.7C712.2 236.9 714.8 237.6 715.6 237.5C716.7 237.3 720 235.3 721.1 235.3C722 235.3 725.2 236.3 725.5 237.1C726 238.3 727.3 251.1 727.6 252.4C727.8 253 729.3 254.9 729.8 255C730.2 255.1 731.9 254 732 253.5C732.3 252.2 734.2 237.1 734.8 236C735.4 235 740.5 235.2 741.8 235.3C743.1 235.4 747.2 237.1 748.4 237.1C748.9 237.1 750.1 235.4 750.6 235.3C751.9 235.1 756.2 235.5 757.4 236C758.1 236.3 759.6 238.5 759.8 239.3C760.1 240.6 761.2 251.8 762 252.8C762.8 253.8 770.5 253.5 771.8 253.5C773.1 253.5 785 253.7 786 252.8C787 251.9 787.9 239.5 788.2 238.2C788.4 237.6 790 235.9 790.4 236C790.9 236.1 792.3 238.5 792.5 239.3C792.8 240.6 794.2 253.3 794.7 254.5C795 255.1 798.8 254.2 799.1 253.5C799.6 252.3 801 239.5 801.3 238.2C801.4 237.5 802.6 235.3 803 235.3C803.4 235.3 805 237.5 805.2 238.2C805.5 239.5 807.1 253.4 807.8 254.5C808.5 255.5 814.2 254 815.5 254.1C816.8 254.2 825.1 255.5 826.4 255.6C827.7 255.7 836 255.7 837.3 255.6C838.6 255.5 842.5 254.1 843.8 254.1C845.1 254.1 855.3 253.8 855.8 255C856.3 256.2 856.9 286 856.9 287.3C856.9 288.6 858.4 358 858.4 359.3C858.4 359.5 858.6 360.4 858.8 360.4C860.1 360.4 1025.9 360.7 1027.2 360.4C1028.5 360.1 1029.8 322.2 1029.8 320.9C1029.8 319.6 1030.9 256.8 1030.9 255.5C1030.9 254.2 1031.8 206.3 1031.8 205C1031.8 203.7 1032.4 183.6 1032.6 183C1032.7 182.6 1033.3 198.7 1033.4 200C1033.5 201.3 1034.1 214.9 1034.2 216.2C1034.3 217.5 1035.6 238.9 1035.7 240.2C1035.8 241.5 1037.4 252.1 1037.9 253.3C1038.2 254 1041 254.8 1041.8 255C1043.1 255.3 1047.1 255.9 1048.4 255.9C1049.5 255.9 1052.9 255.1 1054 254.8C1055.1 254.5 1058.9 254.2 1059.3 253.3C1059.8 252.1 1061.4 236.8 1061.9 236.9C1062.5 237.1 1064.1 253.6 1064.7 254.8C1065.1 255.5 1069.4 254.2 1069.8 253.3C1070.3 252.1 1072.3 236.6 1072.8 235.4C1073 234.9 1075.3 236.4 1076 236.5C1077.1 236.6 1080.6 236.4 1081.8 236.3C1082.8 236.2 1086 235.8 1087 235.8C1088.1 235.8 1091.6 236.3 1092.7 236.3C1094 236.3 1102.3 235.8 1103.6 235.8C1104.9 235.8 1111.7 235.2 1112.4 236.3C1113.1 237.4 1114.5 253.3 1115.2 254.4C1115.9 255.5 1124.2 255.1 1125.5 255C1126.6 255 1129.8 253.7 1130.9 253.7C1132.2 253.7 1137.2 254.8 1138.5 254.8C1139.3 254.8 1141.7 253.3 1142.5 253.3C1143.1 253.3 1144.5 255 1145.1 255C1145.9 255 1148.6 253.7 1149.5 253.7C1150.8 253.6 1167.8 253.6 1169.1 253.7C1169.9 253.7 1172.2 255 1173 255C1174 255 1176.8 253.4 1177.8 253.3C1179.1 253.2 1189.6 253.7 1190.9 253.7C1192.2 253.7 1238.7 253.7 1240 253.7C1240.8 253.7 1243.2 254.6 1244 254.6C1244.6 254.6 1246.4 253.4 1247 253.4C1247.8 253.4 1250.2 254.8 1251 254.8C1251.8 254.8 1254.2 253.5 1255 253.5C1255.8 253.5 1258.2 254.8 1259 254.8C1259.8 254.8 1262.2 253.5 1263 253.5C1263.8 253.5 1266.2 254.6 1267 254.6C1267.8 254.6 1270.2 253.5 1271 253.5C1271.8 253.5 1274.2 254.6 1275 254.6C1275.8 254.6 1278.2 253.5 1279 253.5C1279.8 253.5 1282.2 254.8 1283 254.8C1283.8 254.8 1286.2 253.5 1287 253.5C1287.5 253.5 1289 255 1289.5 255C1290.2 255 1292.2 253.4 1293 253.4C1294.3 253.3 1312.7 253.3 1314 253.4C1314.9 253.5 1317.2 255 1318 255C1318.8 255 1321.1 253.4 1322 253.4C1323.3 253.4 1358.7 253.4 1360 253.4C1360.9 253.4 1363.2 255 1364 255C1364.8 255 1367.1 253.5 1368 253.4C1369.3 253.3 1388.7 253.2 1390 253.2C1391.3 253.2 1438.7 253.2 1440 253.2C1441.3 253.2 1445.7 254.8 1447 254.8C1448 254.8 1451 253.6 1452 253.5C1453.2 253.4 1456.8 253.4 1458 253.6C1459 253.8 1462 255.2 1463 255.3C1464.3 255.5 1468.7 255.3 1470 255C1471.1 254.8 1474 252.8 1475 252.8C1476.2 252.8 1479.8 255 1481 255C1482.2 255 1485.8 253.2 1487 253.2C1487.6 253.2 1489.4 255 1490 255C1491 255 1494 253 1495 252.8C1496 252.6 1499 253.2 1500 253.4C1501 253.7 1504 255.4 1505 255.3C1506 255.2 1509 252.8 1510 252.8C1510.8 252.8 1513.2 254.9 1514 255C1514.8 255.1 1517.1 253.4 1518 253.4C1519.3 253.3 1545.7 253.1 1547 253.2C1547.9 253.2 1550.2 255 1551 255C1551.8 255 1554.1 253.2 1555 253.2C1556.3 253.1 1578.7 253.6 1580 253.6C1581.3 253.6 1608.7 252.9 1610 252.9C1611.3 252.9 1648.7 252.9 1650 252.9C1651.3 252.9 1698.7 253.6 1700 253.6C1701.3 253.6 1748.7 253.2 1750 253.2C1751.3 253.2 1798.7 253.7 1800 253.7C1801.3 253.7 1848.7 253.2 1850 253.2C1851.3 253.2 1898.7 253.6 1900 253.6C1901.3 253.6 1918.7 254.5 1920 254.5C1921 254.5 1924 253.6 1925 253.6C1926 253.6 1929 254.5 1930 254.5C1931 254.5 1934 253.6 1935 253.6C1936.3 253.5 1948.7 253.5 1950 253.6C1950.6 253.6 1952.4 254.5 1953 254.5C1953.6 254.5 1955.4 253.6 1956 253.6C1956.6 253.6 1958.4 254.6 1959 254.6C1959.8 254.6 1962.2 253.5 1963 253.4C1964.3 253.3 1971.1 252.1 1971.4 253.4C1971.7 254.7 1972.4 296.3 1972.4 297.6C1972.4 298.9 1974.8 357.4 1974.9 358.7C1974.9 359.1 1977.1 359.1 1977.2 358.7C1977.4 357.4 1980 328 1980.1 326.7C1980.2 325.4 1983.8 285.3 1984 284C1984.2 282.7 1986.5 269.7 1986.9 268.5C1987.1 268 1989.7 266.9 1989.8 267.5C1989.9 268.8 1992.5 325.6 1993.3 325.7C1994.1 325.8 1996.8 268.5 1997.6 268.5C1998.4 268.5 2000.7 325.8 2001.5 325.7C2002.3 325.6 2005 267.5 2005.8 267.5C2006.6 267.5 2008.5 325.1 2009.3 325.7C2010 326.3 2012.9 273.4 2013.7 273.4C2014.5 273.4 2016.6 326.3 2017.4 325.7C2018.3 325.1 2022.1 268.8 2022.4 267.5C2022.7 266.2 2028.7 267.5 2030 267.5L2030.0 360.5L109.6 360.5Z" fill="rgba(0,0,255,0.1)" stroke="none"/>
<path d="M109.6 354.3C110.1 354.2 111.8 354.2 112.3 354C112.8 353.8 114.3 352 114.7 352.1C115.4 352.3 117 355.6 117.7 355.8C118.1 355.9 119.6 354.2 120.2 354C120.7 353.8 122.9 353.5 123.2 353.9C123.8 354.6 124.8 359.8 125 359.4C125.4 358.7 126.4 349.8 126.6 348.5C126.8 347.2 128 339.8 128.3 339.8C128.6 339.8 129.1 347.2 129.3 348.5C129.5 349.8 130.3 356.5 130.7 356.4C131.1 356.3 132.7 348.8 133.5 347.9C133.8 347.6 135.5 349.8 135.9 350.3C136.6 351.1 138.2 354.4 138.9 354.5C139.6 354.6 141.7 351.4 142.6 350.9C143.4 350.4 146.5 350 147.4 349.7C148 349.5 150.2 349 150.5 348.5C151.1 347.3 151.7 341 152.3 339.8C152.5 339.4 154.7 339.4 154.9 339.8C155.5 340.7 156.2 344.7 156.5 346C156.8 347.3 157.4 352.8 158 353.9C158.2 354.3 160.3 353.2 160.8 353.3C161.5 353.5 163.2 355.6 163.8 355.5C164.4 355.4 166.1 352.4 166.8 352.4C167.6 352.4 170.2 355.1 171.1 355.2C171.9 355.3 174.4 353.5 175.3 353.3C176 353.1 178.2 353.5 178.9 353.5C179.7 353.5 181.9 353.3 182.6 353.3C183.3 353.3 185.5 353.3 186.2 353.3C187 353.2 189.1 352.9 189.9 352.9C190.6 352.9 192.8 352.9 193.5 353C194.3 353.1 196.6 353.4 197.3 353.5C198.1 353.6 200.4 353.8 201.2 353.9C201.9 353.9 204.2 354.3 205 354.3C206 354.4 209 354.4 210 354.4C211 354.4 214 354.2 215 354.2C216 354.2 219 354.1 220 354.1C221 354.2 224 354.5 225 354.5C226 354.5 229 354.4 230 354.3C231 354.3 234 354.2 235 354.2C236 354.2 239 354.6 240 354.6C241 354.7 244 354.5 245 354.6C245.7 354.6 247.8 355 248.5 355.2C249 355.4 250.2 356.7 250.6 356.6C251.1 356.5 252.4 354.8 253 354.6C254 354.3 257.8 355 258.5 354.4C259.5 353.6 261.3 347.5 261.9 347.5C262.5 347.5 263.7 353.3 264.5 354.2C264.9 354.6 267.3 354 268 354C268.7 354 270.8 354.3 271.5 354.3C272.2 354.3 274.3 354.3 275 354.3C276 354.3 279 354.4 280 354.5C281 354.5 284 354.7 285 354.6C286 354.5 289 353.5 290 353.4C291 353.3 294 353.5 295 353.4C296 353.4 299 353.3 300 353.3C300.8 353.3 303.2 353.3 304 353.3C304.8 353.3 307.2 353.3 308 353.3C308.8 353.3 311.2 353.6 312 353.6C312.9 353.6 315.5 353.7 316.3 353.7C317.2 353.6 319.8 353.2 320.7 353.1C321.5 353 324.1 353 325 353C325.9 353 328.5 353 329.3 353C330.2 353 332.8 353.2 333.7 353.3C334.5 353.3 337.1 353.3 338 353.3C338.9 353.3 341.6 353.1 342.5 353.1C343.4 353 346.3 352.4 347 352.8C347.9 353.3 349.7 357.2 350.3 357.2C350.9 357.2 352.2 353.1 353 352.6C353.6 352.2 356.2 352.7 357 352.7C357.8 352.6 360.2 352.4 361 352.3C361.8 352.3 364.2 352.6 365 352.6C365.8 352.6 368.1 352.7 368.8 352.7C369.6 352.7 371.9 352.6 372.7 352.5C373.4 352.5 375.9 352 376.5 352.4C377.3 353 378.9 357.2 379.5 357.2C380.1 357.2 381.7 352.9 382.5 352.3C383 351.9 385.3 352.1 386 352.1C386.7 352.1 388.8 352.4 389.5 352.4C390.2 352.4 392.3 352.3 393 352.3C393.7 352.3 395.8 352.4 396.5 352.4C397.2 352.4 399.3 352.3 400 352.3C400.8 352.3 403.2 352.1 404 352.2C404.8 352.2 407.2 352.3 408 352.4C408.8 352.4 411.2 352.7 412 352.7C412.8 352.7 415.2 352.2 416 352.2C416.8 352.2 419.2 352.5 420 352.5C420.8 352.5 423.2 352.5 424 352.4C424.8 352.4 427.2 352.4 428 352.4C428.8 352.4 431.2 352.4 432 352.3C432.8 352.3 435.2 352.2 436 352.1C436.8 352.1 439.2 352.1 440 352.1C440.8 352.1 443.2 352 444 352C444.8 352.1 447.2 352.6 448 352.6C448.8 352.6 451.2 352.3 452 352.3C452.8 352.3 455.2 352.4 456 352.4C456.8 352.4 459.2 352.6 460 352.6C460.8 352.6 463.2 352.7 464 352.6C464.8 352.6 467.2 352.5 468 352.5C468.8 352.5 471.2 352.5 472 352.5C472.8 352.4 475.2 352.1 476 352.1C476.8 352.1 479.2 352.3 480 352.3C480.8 352.3 483.2 352.6 484 352.6C484.8 352.6 487.2 352.6 488 352.6C488.8 352.6 491.2 352.3 492 352.4C492.8 352.4 495.2 352.8 496 352.8C496.8 352.9 499.2 352.8 500 352.8C500.8 352.8 503.2 352.7 504 352.7C504.8 352.7 507.2 352.7 508 352.7C508.8 352.6 511.2 352.4 512 352.3C512.8 352.3 515.2 352.4 516 352.4C516.8 352.4 519.2 352.3 520 352.3C520.8 352.3 523.2 352.6 524 352.6C524.8 352.6 527.2 352.2 528 352.2C528.8 352.2 531.2 352.5 532 352.5C532.8 352.5 535.2 352.6 536 352.6C536.8 352.6 539.2 352.6 540 352.6C540.8 352.6 543.2 352.6 544 352.6C544.8 352.6 547.2 352.5 548 352.4C548.8 352.4 551.2 352.2 552 352.3C552.8 352.3 555.2 352.6 556 352.7C556.8 352.7 559.2 352.3 560 352.3C560.7 352.3 563 352.4 563.8 352.4C564.5 352.4 566.8 352.6 567.5 352.6C568.3 352.7 570.5 353.1 571.2 353.1C572 353.2 574.3 353.1 575 353.2C575.8 353.3 578.2 353.6 579 353.7C579.8 353.8 582.2 354.2 583 354.2C583.8 354.2 586.2 354.2 587 354.1C587.8 354.1 590.2 353.8 591 353.7C591.8 353.7 594.2 353.8 595 353.8C595.8 353.8 598 353.9 598.8 353.9C599.5 353.9 601.8 353.8 602.5 353.7C603.3 353.6 605.5 353.3 606.2 353.2C607 353.2 609.2 353.4 610 353.4C610.8 353.4 613.2 353.4 614 353.3C614.8 353.3 617.2 353 618 353C618.8 353 621.3 353.6 621.8 353.2C622.8 352.4 624.7 347.4 625.7 346.6C626.1 346.2 628.3 347.2 629 347.2C629.7 347.2 632.2 346.2 632.7 346.6C633.6 347.3 635.1 352 636 352.7C636.6 353.2 639.5 352.6 640.3 352.6C641.2 352.6 643.8 352.5 644.7 352.5C645.5 352.5 648.1 352.3 649 352.3C649.8 352.3 652.2 352.3 653 352.4C653.8 352.4 656.2 352.7 657 352.7C657.8 352.8 660.2 353.2 661 353.2C661.8 353.3 664.2 353.2 665 353.2C665.7 353.2 667.9 352.9 668.6 352.9C669.3 352.9 671.4 353.2 672.2 353.2C672.9 353.3 675 353.3 675.7 353.3C676.5 353.3 678.6 353.2 679.3 353.2C680 353.2 682.3 353.5 682.9 353.2C683.8 352.7 685.9 348.9 686.6 348.8C687.2 348.8 688.7 352.3 689.4 352.7C690 353 692.5 352.7 693.3 352.7C694.1 352.7 696.5 352.5 697.2 352.5C698 352.6 700.4 353 701.2 353C701.9 353 704.3 352.6 705.1 352.6C705.9 352.6 708.2 352.7 709 352.7C709.7 352.7 711.9 352.2 712.7 352.2C713.4 352.1 715.6 352.2 716.3 352.1C717.1 352.1 719.3 351.6 720 351.6C720.7 351.6 722.9 351.8 723.7 351.8C724.4 351.9 726.6 352.1 727.3 352.1C728.1 352.2 730.3 352.3 731 352.3C731.9 352.3 734.4 352.5 735.3 352.6C736.2 352.7 738.9 353.5 739.6 353.2C740.6 352.9 743.1 349.8 744 349.5C744.5 349.3 746.1 350.7 746.6 350.6C747.1 350.5 748.3 348.4 748.8 348.4C749.3 348.4 751 350.4 751.6 350.6C752.3 350.8 755.4 351.3 755.5 350.6C755.8 349.3 758.5 316.9 758.7 315.6C758.8 315.1 761.1 314.2 761.3 314.6C761.9 315.7 763.8 326.3 764.2 325.5C764.8 324.3 767.3 303.9 767.5 302.6C767.7 301.3 769.9 279.8 770.3 280.7C770.9 281.9 772.7 312.2 772.9 313.5C773 314 774.9 314.2 775.1 314.6C775.5 315.8 777.4 327.7 777.9 327.6C778.5 327.5 780 314.7 780.5 313.5C780.7 313.1 783.1 313 783.2 313.5C783.4 314.8 786.9 349.3 787.1 350.6C787.2 351.2 790.3 351.2 790.4 350.6C790.7 349.3 793.4 320.2 793.6 318.9C793.7 318.5 795.7 318.5 795.8 318.9C796.1 320.2 799.4 347.1 799.7 348.4C799.9 349.2 802.7 350.3 803.5 350.6C804.3 350.9 807.2 351.1 807.8 351.6C808.6 352.4 809.9 357.3 810.4 357.1C811.1 356.9 812.6 350.2 813.7 349.5C814.5 349 818.6 350.8 819.8 351C820.6 351.1 823.2 351.2 824.1 351.2C825 351.2 827.5 351.2 828.4 351.2C829.3 351.2 831.8 350.9 832.7 350.9C833.6 350.9 836.1 351.1 837 351.2C837.7 351.2 839.9 351.4 840.6 351.4C841.3 351.4 843.4 351.3 844.1 351.3C844.8 351.3 847 351.4 847.7 351.4C848.4 351.4 850.6 351.3 851.3 351.3C852 351.4 854.1 351.5 854.8 351.5C855.5 351.6 857.7 351.7 858.4 351.6C859.2 351.5 862 351.2 862.4 350.6C863.2 349.5 865.4 340.7 866.1 340.7C866.7 340.7 868.2 349.5 868.9 350.6C869.3 351.2 872 350.9 872.8 350.9C873.5 350.9 876.4 351.3 876.6 350.6C876.9 349.3 879.2 319.6 879.8 319.6C880.5 319.6 882.8 349.3 883.1 350.6C883.3 351.3 886.2 350.4 887 350.5C887.8 350.5 890.2 350.8 890.9 350.9C891.7 350.9 894.1 351.1 894.9 351.1C895.6 351.1 898 351 898.8 351.1C899.6 351.1 901.9 351.2 902.7 351.2C903.7 351.2 906.8 351.3 907.9 351.4C908.9 351.4 912 351.4 913 351.6C913.5 351.7 914.9 352.7 915.3 352.6C916 352.5 917.8 350.5 918.5 350.4C919.1 350.3 921.4 351.9 921.8 351.5C922.7 350.6 924.5 343.4 925.1 343.4C925.7 343.4 927.1 350.5 927.9 351.5C928.3 352 931 351.3 931.8 351.4C932.6 351.4 935 351.8 935.8 351.8C936.5 351.8 938.9 351.4 939.7 351.4C940.5 351.4 942.9 351.3 943.6 351.5C944.3 351.7 946.6 353.6 946.9 353.2C947.6 352.1 949.6 344 949.7 342.7C949.8 341.4 951.6 284 951.9 282.7C952.2 281.4 954.3 319.6 954.5 320.9C954.6 321.5 956.6 318.8 957.2 318.3C957.7 317.8 959.9 315.5 960 316.1C960.2 317.4 962.5 350.2 962.8 351.5C963 352.4 966.8 352.8 967.6 352.6C968.4 352.4 970.1 349.7 970.9 349.3C971.7 348.9 974.6 348.3 975.3 348.6C976.1 348.9 977.8 351.8 978.5 351.9C979 352 980.6 349.7 981.2 349.7C982.3 349.6 986.1 351.1 987.3 351.5C988.4 351.8 991.7 353.3 992.7 353.2C993.4 353.2 995.3 351.2 996 351C996.7 350.8 998.9 350.8 999.6 350.8C1000.4 350.9 1002.5 351.2 1003.3 351.2C1004 351.2 1006.4 350.6 1006.9 351C1007.9 351.8 1010.7 357.8 1011.3 357.6C1012 357.4 1012.9 349.8 1013.5 349.3C1013.8 349 1015 353.4 1015.6 353.6C1016.1 353.8 1018.2 351.5 1018.9 351C1019.5 350.6 1021.5 349.4 1022.2 349.3C1023 349.2 1026.4 351.1 1026.6 350.4C1026.9 349.1 1028.2 326.6 1028.3 325.3C1028.4 324 1029.5 312.8 1029.8 313.3C1030.2 314.1 1031.5 330.5 1031.6 331.8C1031.7 333.1 1033.1 349.2 1033.5 350.4C1033.7 351.1 1036.8 350.4 1037.7 350.4C1038.5 350.4 1041.1 350.7 1041.8 350.4C1042.7 350 1045 347 1045.8 347.1C1046.6 347.2 1048.6 350.5 1049.5 351C1050.6 351.7 1054.8 353.3 1056 353.2C1056.8 353.2 1058.5 350.7 1059.3 350.4C1059.9 350.1 1062.2 350.4 1062.9 350.4C1063.7 350.4 1065.8 350.2 1066.6 350.2C1067.3 350.2 1069.5 350.4 1070.2 350.4C1070.8 350.4 1072.5 350.2 1073 350C1074 349.7 1076.9 348.2 1077.9 348.2C1078.7 348.2 1081 349.5 1081.8 349.7C1082.6 349.9 1084.9 349.9 1085.7 349.9C1086.5 349.9 1088.8 349.8 1089.6 349.8C1090.4 349.7 1092.7 349.4 1093.5 349.4C1094.3 349.4 1096.6 349.8 1097.4 349.9C1098.2 349.9 1100.5 349.7 1101.3 349.7C1102.1 349.7 1104.4 349.7 1105.2 349.7C1106 349.7 1108.7 350.3 1109.1 349.7C1109.8 348.6 1111.8 338.1 1112.4 338.4C1113.1 338.7 1114.9 351.5 1115.6 352.6C1116 353.2 1119.2 350.3 1120 350.4C1120.9 350.6 1123.5 353.4 1124.4 354.1C1125.4 354.9 1128.4 357.8 1129.4 358C1129.9 358.1 1131.5 356.3 1132 355.8C1132.9 354.9 1135.7 351.1 1136.8 350.4C1137.3 350 1139.6 350.2 1140.3 350.1C1141 350.1 1143.1 350.1 1143.8 350.1C1144.5 350 1146.6 349.9 1147.3 349.9C1148 349.9 1150.2 350.3 1150.9 350.3C1151.7 350.3 1153.8 350 1154.6 350C1155.3 350 1157.5 350.4 1158.2 350.4C1158.9 350.4 1161.1 350.3 1161.8 350.3C1162.6 350.2 1164.7 350.2 1165.5 350.2C1166.2 350.2 1168.4 349.9 1169.1 349.9C1170.1 349.9 1173.2 350 1174.2 350.1C1175.3 350.1 1179.2 351.3 1179.4 350.4C1179.7 349.1 1180.8 324.3 1180.9 323C1181 321.8 1181.9 317 1182.2 317C1182.5 317 1183.5 321.8 1183.6 323C1183.7 324.3 1185.2 349.1 1185.5 350.4C1185.7 351.2 1189.4 350.4 1190.4 350.4C1191.4 350.4 1194.3 350.4 1195.3 350.4C1196.1 350.4 1198.3 350.5 1199.1 350.6C1199.9 350.6 1202.8 351.7 1202.9 351C1203.1 349.7 1204.6 323.3 1204.7 322C1204.8 320.8 1205.9 316 1206.2 316C1206.5 316 1207.6 320.8 1207.7 322C1207.8 323.3 1209.8 351.3 1210.1 352.6C1210.3 353.4 1213.7 352.9 1214.6 352.9C1215.5 352.8 1218.2 352.5 1219.1 352.5C1220 352.5 1222.7 352.6 1223.6 352.6C1224.5 352.6 1227.1 352.2 1228 352.1C1228.9 352 1231.5 351.9 1232.4 351.9C1233.2 351.9 1235.4 352.3 1236.2 352.4C1237 352.4 1239.2 352.4 1240 352.4C1240.8 352.4 1243.2 352.3 1244 352.3C1244.8 352.2 1247.2 352.3 1248 352.2C1248.8 352.2 1251.2 352 1252 352C1252.8 352 1255.2 352.2 1256 352.2C1256.8 352.2 1259.2 352 1260 352C1260.8 352 1263.2 352.2 1264 352.2C1264.8 352.2 1267.2 351.8 1268 351.9C1268.8 351.9 1271.2 352.4 1272 352.4C1272.8 352.5 1275.2 352.3 1276 352.3C1276.8 352.3 1279.2 352.4 1280 352.4C1280.8 352.4 1283.2 352.3 1284 352.3C1284.8 352.2 1287.2 352.1 1288 352.1C1288.8 352.1 1291.2 352.1 1292 352.1C1292.8 352.1 1295.2 352.3 1296 352.2C1296.8 352.2 1299.2 352 1300 351.9C1300.8 351.8 1303.2 351.7 1304 351.7C1304.8 351.7 1307.2 352 1308 352.1C1308.8 352.1 1311.2 352.3 1312 352.3C1312.8 352.3 1315.2 352.1 1316 352.1C1316.8 352.1 1319.2 352.3 1320 352.3C1320.7 352.3 1322.9 352.3 1323.6 352.2C1324.3 352.2 1326.4 352.1 1327.1 352.1C1327.9 352.1 1330 352.4 1330.7 352.4C1331.4 352.4 1333.6 352.1 1334.3 352C1335 352 1337.1 351.9 1337.9 351.9C1338.6 351.9 1340.7 352.3 1341.4 352.3C1342.1 352.3 1344.3 352 1345 352C1345.7 352 1347.9 351.9 1348.6 351.9C1349.4 351.9 1351.6 352 1352.3 352C1353 352 1355.2 351.9 1355.9 351.9C1356.7 352 1358.8 352.2 1359.6 352.2C1360.3 352.2 1362.5 352.2 1363.2 352.2C1363.9 352.1 1366.1 351.8 1366.9 351.8C1367.6 351.8 1369.9 352.4 1370.5 352.1C1371.5 351.7 1374 348.5 1374.8 348.5C1375.6 348.5 1377.6 351.8 1378.5 352.3C1379.1 352.6 1381.4 352.5 1382.1 352.5C1382.8 352.5 1384.9 352.3 1385.7 352.3C1386.4 352.2 1388.5 352.1 1389.2 352.1C1390 352.1 1392.1 352.1 1392.8 352.1C1393.5 352.1 1395.7 352.1 1396.4 352.1C1397.1 352.1 1399.3 352.1 1400 352.1C1400.8 352.1 1403.3 352.3 1404.1 352.3C1404.9 352.3 1407.4 351.9 1408.2 351.8C1409 351.8 1411.5 352.1 1412.3 352.1C1413.1 352.2 1416 352.7 1416.4 352.1C1417.1 351 1419.5 338.8 1420.3 338.8C1421.1 338.8 1423.6 351.2 1424.2 352.3C1424.5 352.9 1427.2 352.5 1428 352.4C1428.7 352.4 1431 352.1 1431.7 352.1C1432.5 352.1 1434.7 352.2 1435.5 352.2C1436.2 352.2 1438.5 352.1 1439.2 352.1C1440 352 1442.4 352.5 1443 352.1C1444 351.4 1446.2 346.6 1447 346.6C1447.8 346.6 1450 351.6 1451 352.3C1451.6 352.7 1454.2 352.5 1455 352.5C1455.8 352.5 1458.2 352.1 1459 352.1C1459.8 352 1462.2 352 1463 352C1463.8 352 1466.2 352.4 1467 352.4C1467.8 352.4 1470.2 352 1471 352C1471.8 351.9 1474.2 352 1475 352C1475.8 352 1478 351.9 1478.8 351.9C1479.5 351.8 1481.7 351.7 1482.5 351.7C1483.2 351.7 1485.5 351.8 1486.2 351.7C1487 351.7 1489.3 351.5 1490 351.5C1491 351.5 1494.2 351.8 1495.2 351.9C1496.2 351.9 1500.1 352.9 1500.4 352.1C1500.9 350.9 1503.3 331.3 1503.5 330C1503.7 328.7 1505.3 314.3 1505.7 314.5C1506.1 314.7 1507.4 330.7 1507.5 332C1507.6 333.3 1508.9 352 1509.3 352C1509.7 352 1511.1 333.3 1511.2 332C1511.3 330.7 1512.6 316.2 1513 315C1513.2 314.4 1516.4 313.9 1516.6 314.5C1516.9 315.8 1518.3 333.7 1518.4 335C1518.5 336.3 1519.6 349.6 1519.8 348.5C1520 347.2 1521.5 317 1521.9 315.8C1522.2 315 1523.5 336.7 1523.6 338C1523.7 339.3 1524.5 350.9 1524.9 352.1C1525.1 352.7 1527.9 351.7 1528.7 351.8C1529.4 351.8 1531.7 352.2 1532.5 352.2C1533.2 352.2 1535.5 352 1536.2 352C1537 352 1539.2 351.9 1540 351.9C1540.8 351.9 1543.2 351.8 1544 351.8C1544.8 351.8 1547.2 352 1548 351.9C1548.7 351.8 1550.6 350.4 1551.3 350.4C1551.8 350.4 1553.4 351.5 1554 351.6C1554.7 351.7 1557 351.6 1557.7 351.6C1558.5 351.5 1560.7 351.5 1561.4 351.5C1562.2 351.6 1564.4 351.8 1565.1 351.7C1565.9 351.7 1568.1 351.2 1568.9 351.2C1569.6 351.2 1571.8 351.4 1572.6 351.5C1573.3 351.5 1575.5 351.6 1576.3 351.6C1577 351.6 1579.3 351.4 1580 351.4C1580.8 351.4 1583.2 351.3 1584 351.3C1584.8 351.3 1587.2 351.5 1588 351.5C1588.8 351.5 1591.2 351.4 1592 351.5C1592.8 351.5 1595.2 351.7 1596 351.8C1596.8 351.8 1599.2 351.6 1600 351.6C1600.8 351.6 1603.2 351.5 1604 351.4C1604.8 351.4 1607.2 351.3 1608 351.3C1608.8 351.3 1611.2 351.7 1612 351.7C1612.8 351.7 1615.2 351.3 1616 351.3C1616.8 351.2 1619.2 351.3 1620 351.3C1620.8 351.3 1623.2 351.3 1624 351.3C1624.9 351.3 1627.3 351.3 1628.1 351.3C1628.9 351.3 1631.3 351.5 1632.2 351.5C1633 351.5 1636 352.1 1636.2 351.4C1636.5 350.1 1638.7 324.2 1639.3 324.2C1639.9 324.2 1642.1 350.3 1642.4 351.6C1642.5 352.2 1645.2 351.7 1645.9 351.6C1646.6 351.6 1648.7 351.2 1649.4 351.2C1650.1 351.2 1652.3 351.7 1653 351.7C1653.7 351.7 1655.8 351.5 1656.5 351.5C1657.2 351.5 1659.3 351.4 1660 351.4C1660.8 351.4 1663.2 351.4 1664 351.4C1664.8 351.4 1667.2 351.6 1668 351.6C1668.8 351.6 1671.2 351.7 1672 351.7C1672.8 351.7 1675.2 352 1676 352C1676.8 352 1679.2 351.9 1680 351.9C1680.8 351.9 1683.2 351.6 1684 351.6C1684.8 351.6 1687.2 351.7 1688 351.8C1688.8 351.8 1691.2 351.9 1692 351.9C1692.8 351.8 1695.2 351.4 1696 351.4C1696.8 351.4 1699.2 351.5 1700 351.5C1700.8 351.5 1703.2 351.6 1704 351.6C1704.8 351.6 1707.2 351.5 1708 351.6C1708.8 351.6 1711.2 351.8 1712 351.9C1712.8 351.9 1715.2 351.6 1716 351.6C1716.8 351.6 1719.2 351.8 1720 351.8C1720.7 351.8 1722.8 351.6 1723.5 351.6C1724.2 351.6 1726.3 352 1727 352C1727.7 352 1729.8 351.6 1730.5 351.6C1731.2 351.5 1733.3 351.6 1734 351.6C1734.7 351.6 1736.9 351.9 1737.5 351.6C1738.3 351.2 1740.4 348 1741.1 348C1741.8 348 1743.7 351 1744.5 351.4C1745.1 351.7 1747.3 351.3 1748 351.3C1748.7 351.3 1750.8 351.4 1751.5 351.3C1752.2 351.3 1754.3 351.2 1755 351.2C1755.8 351.2 1758.4 351.4 1759.2 351.4C1760.1 351.4 1762.6 351.2 1763.5 351.2C1764.3 351.2 1767.5 352.3 1767.7 351.6C1768 350.3 1770.1 315.2 1770.6 315.8C1771.2 316.5 1773.4 356.9 1773.6 358.2C1773.8 359.2 1775.8 352.5 1776.7 351.6C1777.3 351 1780.5 350.4 1781.5 350.4C1782.8 350.4 1786.7 351.3 1788 351.6C1789.3 351.9 1793.6 353.7 1794.9 353.8C1795.9 353.9 1799 352.5 1800 352.3C1800.7 352.2 1803 352.5 1803.8 352.5C1804.5 352.5 1806.8 352.4 1807.5 352.3C1808.3 352.3 1810.5 352.1 1811.2 352.1C1812 352.1 1814.2 352.3 1815 352.3C1815.7 352.3 1818 352.2 1818.8 352.2C1819.5 352.2 1821.8 352.4 1822.5 352.4C1823.3 352.4 1825.5 352 1826.2 352C1827 352 1829.2 352.2 1830 352.2C1830.7 352.2 1833 352.2 1833.8 352.3C1834.5 352.3 1836.8 352.5 1837.5 352.5C1838.3 352.5 1840.5 352.1 1841.2 352.1C1842 352.1 1844.2 352.3 1845 352.3C1845.7 352.3 1848 352.3 1848.8 352.3C1849.5 352.3 1851.8 352.5 1852.5 352.5C1853.3 352.5 1855.5 352.3 1856.2 352.3C1857 352.3 1859.3 352.4 1860 352.4C1860.9 352.4 1863.5 352.1 1864.3 352.2C1865.2 352.2 1867.8 352.6 1868.7 352.5C1869.5 352.5 1872.1 352.1 1873 352.1C1873.8 352 1877.1 352.9 1877.3 352.1C1877.6 350.8 1879.6 317 1880.2 317C1880.8 317 1883.1 350.8 1883.4 352.1C1883.6 352.8 1886.7 352.1 1887.6 352.1C1888.4 352.1 1890.9 352.2 1891.7 352.2C1892.5 352.2 1895 352.2 1895.8 352.2C1896.7 352.2 1899.2 352.2 1900 352.2C1900.8 352.2 1903 352.3 1903.8 352.2C1904.5 352.2 1906.8 351.9 1907.5 351.9C1908.3 351.9 1910.5 352.3 1911.2 352.3C1912 352.4 1914.3 352.2 1915 352.2C1915.8 352.1 1918 351.9 1918.8 351.9C1919.5 351.9 1921.7 352.1 1922.5 352.1C1923.2 352.1 1925.5 352 1926.2 352C1927 352 1929.3 352 1930 352C1930.7 352 1932.9 352.2 1933.6 352.2C1934.3 352.2 1936.4 351.9 1937.1 351.9C1937.9 351.9 1940 352.1 1940.7 352.2C1941.4 352.2 1943.6 352.4 1944.3 352.4C1945 352.4 1947.1 352 1947.9 352C1948.6 352 1950.7 352.3 1951.4 352.3C1952.1 352.3 1954.3 352.3 1955 352.3C1955.8 352.3 1958.4 352.2 1959.2 352.3C1960.1 352.3 1962.6 352.3 1963.5 352.3C1964.3 352.3 1966.8 352.1 1967.7 352.1C1968.5 352 1971.1 352 1971.9 352.1C1972.6 352.2 1975.2 353.8 1975.5 353.3C1976.1 352.2 1978.5 338.9 1979.2 338.8C1979.8 338.7 1981.5 351 1982.1 352.1C1982.4 352.7 1986 352.7 1986.4 352.1C1987.1 351 1989.1 340 1989.8 340C1990.5 340 1992.2 351.1 1993 352.1C1993.7 353 1998.7 352.6 2000 352.6C2001 352.6 2004 352.2 2005 352.1C2006 352 2009 351.9 2010 351.9C2011 351.9 2014 352.4 2015 352.4C2016 352.5 2019 352.4 2020 352.4C2021 352.4 2024 352.2 2025 352.1C2026 352.1 2029 352.1 2030 352.1" fill="none" stroke="#404043" stroke-width="3" stroke-linejoin="round"/>
<path d="M109.6 367.9C110.4 367.7 112.7 366.9 113.5 366.7C114 366.6 115.5 366.5 115.9 366.7C116.5 367 117.7 369 118.3 369.3C118.6 369.5 120.1 369.5 120.2 369.1C120.4 367.8 121.3 349.8 121.4 348.5C121.5 347.2 122.8 328.1 123.2 328.1C123.6 328.1 124.9 347.2 125 348.5C125.1 349.8 127.2 366.6 127.4 367.9C127.6 369.2 130.6 390.3 131.1 391.5C131.4 392.3 133.2 383.7 133.5 382.4C133.8 381.1 135.7 367.5 136.3 366.4C136.6 365.8 138.3 372.5 138.9 372.7C139.4 372.8 141.1 368.9 141.4 367.9C141.8 366.7 143.1 359.5 143.2 358.2C143.3 356.9 144.3 337.7 144.4 336.4C144.5 335.1 146.4 271.1 146.9 271.1C147.4 271.1 149 334.7 149 336C149 337.3 149.7 378.1 149.8 379.4C149.9 380.7 151 361.9 151.1 360.6C151.2 359.3 152.3 351.3 152.5 351.5C152.8 351.8 153.6 361.7 153.7 363C153.8 364.3 154.7 375.9 155.1 376.6C155.4 377 156.4 369.6 157.1 368.5C157.6 367.7 161 367 162 366.7C163.2 366.4 166.8 365.7 168 365.5C169 365.3 171.9 364.5 172.9 364.5C173.4 364.5 174.9 365.6 175.3 365.5C175.8 365.4 177.2 363.7 177.7 363.6C178.4 363.5 180.7 364.8 181.4 364.8C182.1 364.8 184.2 363.5 185 363.3C185.9 363.1 188.8 362.9 189.8 362.8C190.3 362.7 192.2 362 192.3 362.4C192.7 363.6 193.1 371.4 193.2 372.7C193.3 374 194.1 398.7 194.1 400C194.1 401.3 195.3 493.6 195.4 494.9C195.5 495.8 199.4 494.5 200.4 494.5C201.1 494.5 203 494.6 203.7 494.7C204.3 494.7 206.3 495 206.9 495.1C207.6 495.1 209.6 495.2 210.2 495.3C210.9 495.3 212.8 495.4 213.5 495.4C214.2 495.4 216.1 495.3 216.8 495.3C217.4 495.4 219.4 496.2 220.1 496.3C220.7 496.4 222.7 496.4 223.3 496.4C224 496.5 225.9 496.7 226.6 496.7C227.5 496.8 230.1 496.9 230.9 496.9C231.8 497 234.4 497.5 235.3 497.5C236.1 497.5 238.3 497.2 239.1 497.1C239.9 497 242.3 497 242.9 496.7C243.6 496.3 245.1 493.4 245.8 493.4C246.7 493.4 249.6 496.3 250.6 496.7C251.3 496.9 253.6 496.4 254.4 496.3C255.2 496.3 257.7 496.4 258.2 496C259.2 495.2 261.1 490.2 261.9 490.1C262.6 490 264.5 494.6 265.4 495.4C265.8 495.8 267.9 495.8 268.5 495.8C269.1 495.8 270.9 495.4 271.5 495.5C272.1 495.5 274 495.9 274.6 496C275.2 496.1 277.2 496.2 277.9 496.3C278.5 496.4 280.4 496.8 281.1 496.8C281.7 496.8 283.7 496.6 284.4 496.6C285 496.6 286.9 497.1 287.6 497.1C288.2 497.1 290.1 497.1 290.7 497.1C291.4 497.1 293.2 496.9 293.9 496.9C294.5 496.9 296.4 497.2 297 497.2C297.6 497.1 299.5 496.8 300.1 496.7C300.7 496.7 302.6 496.6 303.2 496.6C303.9 496.6 305.7 497.1 306.4 497.1C307 497.1 308.9 496.8 309.5 496.7C310.1 496.6 312.1 496.5 312.8 496.5C313.4 496.5 315.3 496.6 316 496.6C316.6 496.6 318.6 496.7 319.2 496.7C319.9 496.7 321.9 496.7 322.5 496.7C323.2 496.7 325.3 496.9 326 496.9C326.7 496.9 328.8 497 329.5 496.9C330.2 496.9 332.3 496.5 333 496.6C333.7 496.6 335.8 497.3 336.5 497.3C337.2 497.4 339.3 497.1 340 497.1C340.7 497.1 342.9 497.1 343.6 497.1C344.4 497.1 346.9 497.5 347.3 497C348.1 496 349.2 489.2 350 488.9C350.6 488.6 353.2 493.3 354.2 494C355.2 494.7 358.8 495.6 360 495.8C360.6 495.9 362.6 495.8 363.2 495.8C363.9 495.9 365.8 496.3 366.5 496.3C367.1 496.4 369.1 496.4 369.8 496.5C370.4 496.6 372.3 496.9 373 496.9C373.6 497 375.6 496.6 376.2 496.6C376.9 496.7 378.8 497.2 379.5 497.2C380.1 497.2 382.1 497 382.8 497C383.4 497 385.4 497.1 386 497C386.7 496.9 388.6 496.3 389.3 496.2C389.9 496.2 391.9 496.3 392.6 496.3C393.2 496.3 395.2 496.1 395.8 496C396.5 496 398.4 495.8 399.1 495.8C399.8 495.8 401.7 496.2 402.4 496.2C403 496.2 405 496.1 405.7 496.1C406.3 496.1 408.3 496.1 409 496.2C409.6 496.3 411.6 496.9 412.2 497C412.9 497 414.9 496.6 415.5 496.6C416.2 496.6 418.2 496.9 418.8 496.9C419.5 497 421.4 497.2 422.1 497.2C422.8 497.2 424.7 496.9 425.4 496.9C426 496.8 428 496.6 428.7 496.5C429.3 496.5 431.3 496.3 432 496.2C432.6 496 434.6 495.4 435.2 495.4C435.9 495.3 437.9 495.7 438.5 495.6C439.2 495.6 441.2 495.1 441.8 495C442.5 494.9 444.5 494.8 445.1 494.6C446 494.4 448.8 493.3 449.7 493C450.3 492.8 452.2 492.5 452.8 492.5C453.4 492.4 455.3 492.5 455.9 492.5C456.5 492.5 458.3 492.1 458.9 492.1C459.6 492 461.4 492.1 462 492C462.7 491.9 464.5 491.3 465.1 491.2C465.7 491.1 467.6 491.2 468.2 491.2C468.9 491.2 470.8 491 471.5 491C472.1 491 474.1 491 474.8 491C475.4 490.9 477.4 490.2 478.1 490.1C478.7 490 480.7 490.2 481.3 490.2C482 490.1 484 489.9 484.6 489.8C485.3 489.8 487.3 489.8 487.9 489.7C488.6 489.7 490.5 489.4 491.2 489.3C492.4 489.2 495.9 488.7 497 488.9C498 489.1 500.5 491.3 501.5 491.6C502.1 491.8 503.9 491.3 504.5 491.2C505.1 491.1 506.9 490.8 507.6 490.8C508.2 490.8 510 491.2 510.6 491.1C511.2 491.1 513 490.4 513.6 490.3C514.2 490.2 516 490.1 516.6 490.1C517.2 490 519 490 519.7 490C520.3 489.9 522.1 489.7 522.7 489.6C523.3 489.6 525.1 489.4 525.7 489.3C526.4 489.2 528.5 489 529.2 488.9C529.8 488.8 531.9 488.1 532.6 488.1C533.3 488 535.4 488.3 536 488.2C536.7 488.2 538.8 487.7 539.5 487.6C540.2 487.4 542.3 486.9 543 486.8C543.6 486.7 545.7 486.6 546.4 486.6C547 486.6 548.9 486.6 549.6 486.5C550.2 486.5 552.1 486.2 552.8 486.2C553.4 486.2 555.3 486.2 555.9 486.2C556.6 486.1 558.5 485.6 559.1 485.5C559.7 485.5 561.6 485.6 562.3 485.6C562.9 485.7 564.8 485.8 565.4 485.7C566.1 485.6 568 485 568.6 484.9C569.2 484.8 571.2 485 571.8 485C572.6 485.1 574.9 485.3 575.6 485.4C576.4 485.5 578.7 485.7 579.5 485.8C580.2 485.8 582.5 486.1 583.3 486.1C584 486.1 585.9 486.2 586.6 486.2C587.2 486.2 589.2 486 589.9 485.9C590.5 485.9 592.5 485.8 593.2 485.8C593.8 485.9 595.8 486.4 596.4 486.4C597.1 486.4 599.1 485.8 599.7 485.8C600.4 485.7 602.4 485.8 603 485.8C603.7 485.8 606.2 486.5 606.3 485.9C606.5 484.6 609 446.4 609.1 445.1C609.2 443.8 614.6 395.3 614.8 394C614.9 393.3 617.8 393.4 618.6 393.2C619.4 393 621.8 392.6 622.4 392.2C623.5 391.4 625.9 387.8 627 387.1C627.5 386.8 629.7 387.1 630.4 387.1C631.1 387.1 633.7 386.5 633.8 387.1C633.9 388.4 635.6 450.9 636.4 451.5C637.1 452.1 640.2 393.2 641 393.2C641.8 393.2 643.9 451.5 644.7 451.5C645.6 451.5 648.7 393.2 649.5 393.2C650.3 393.2 652 451.3 652.8 451.5C653.6 451.6 656.6 394.7 657.4 394.7C658.2 394.7 660.3 451.6 661.1 451.5C661.9 451.4 664.7 394 665.5 394.1C666.3 394.2 668.4 452.1 669.2 452.1C670 452 673.1 393.6 673.8 393.6C674.5 393.6 676.2 450.8 676.4 452.1C676.6 453.4 678.8 422.5 679 423.8C679.2 425.1 682.4 487.3 682.5 488.6C682.5 489 684.6 489 684.7 488.6C685 487.3 687.2 469.1 687.3 467.8C687.4 466.5 690.5 394.9 690.6 393.6C690.7 392.3 691.6 362.2 691.6 360.9C691.6 359.6 692.4 313.3 692.7 312.4C692.9 311.7 694.1 351.4 694.2 352.7C694.3 354 695 365.2 695.6 366.4C695.9 367.1 699.4 365.7 700.4 365.7C701.1 365.7 703 366.3 703.7 366.4C704.4 366.5 706.3 366.9 707 367C707.6 367.1 709.6 366.9 710.2 366.9C710.9 367 712.9 367.3 713.5 367.5C714.4 367.8 717.1 369.5 717.8 369.2C718.7 368.8 720.8 365.3 721.1 364.2C721.4 362.9 724.3 340.9 724.8 341.4C725.5 342 726.7 369.2 727.2 369.6C727.7 369.9 729.4 346.3 729.8 345.1C730.1 344.3 731.1 357.4 731.2 358.7C731.3 360 732.4 386.2 732.7 387.5C732.9 388.5 734.3 374.1 734.8 372.9C735.1 372.1 738.7 372.1 739.6 371.8C740.5 371.5 743.1 369.8 744 369.6C744.6 369.5 746.6 370.3 747.3 370.4C748 370.6 749.9 370.7 750.6 370.7C751.2 370.7 753 370.3 753.7 370.2C754.3 370.1 756.6 370.1 756.7 369.6C757 368.3 757.5 354 757.6 352.7C757.7 351.4 759 334.2 759.4 334.2C759.8 334.2 761.8 351.4 762 352.7C762.2 354 764.5 363.4 764.8 362.6C765.3 361.4 767.3 340.9 767.5 339.6C767.7 338.3 769.7 317.9 770.1 318.9C770.6 320.1 772.3 351.4 772.5 352.7C772.6 353.5 774.9 355.2 775.1 356C775.5 357.2 777.8 372.7 777.9 371.4C778 370.1 779.5 310.4 779.5 309.1C779.5 307.8 780.8 278.1 781 276.8C781.1 276.3 783.3 276 783.4 276.4C783.6 277.7 784.9 307.8 784.9 309.1C784.9 310.4 785.9 381.4 786 382.7C786.1 383.7 788.6 378.5 788.8 377.3C789 376 790 354 790 352.7C790 351.4 791.4 288.6 791.5 287.3C791.6 286 793.8 256.8 794.3 256.3C794.7 255.9 796.2 281.6 796.3 282.9C796.4 284.2 799.1 351.4 799.1 352.7C799.1 354 799.2 394.7 799.5 394.7C799.8 394.7 802.3 354 802.4 352.7C802.5 351.4 805.1 285.3 805.2 284C805.3 282.7 807 305.6 807.2 306.9C807.4 307.9 809.8 310.3 810 311.3C810.2 312.6 812.4 344 812.8 342.9C813.2 341.7 814.7 299.5 814.8 298.2C814.9 296.9 815.4 287.4 815.9 286.2C816.2 285.5 819.1 285.4 819.8 285.1C821 284.6 824.1 282.3 825.3 281.8C826 281.5 828.3 281.5 829.1 281.5C829.9 281.5 832.2 281.7 832.9 281.8C833.6 281.9 835.5 282.6 836.2 282.7C836.9 282.9 838.8 283.3 839.5 283.3C840.6 283.3 843.9 282.6 844.9 282.9C846.1 283.2 849.3 285.6 850.4 286.2C851.2 286.7 854.2 287.6 854.7 288.4C855.4 289.5 856.2 294.7 856.3 296C856.4 297.3 857.4 351.4 857.4 352.7C857.4 354 858.3 401.1 858.4 402.4C858.5 403 861.6 402.2 861.7 402.8C861.9 404.1 865.5 456.1 866.3 455.8C867.1 455.5 869.3 401.5 869.4 400.2C869.5 399.6 871.8 399.8 872.5 399.7C873.1 399.5 875.1 399.5 875.5 399.1C876 398.7 877.1 396.5 877.2 395.8C877.4 394.5 879.3 369 879.8 369.6C880.4 370.3 882.1 401.1 882.4 402.4C882.6 403.2 885.5 399.5 886.4 399.1C887.1 398.8 889.4 398.8 890.2 398.7C891 398.6 893.2 398 894 398C894.9 398 897.5 398.2 898.4 398.3C899.2 398.4 901.8 398.9 902.7 399.1C903.6 399.3 906.2 400.5 907.1 400.6C908.1 400.8 911.9 399.7 912 400.6C912.2 401.9 913.1 446.9 913.1 448.2C913.1 449.5 914.1 497.1 914.2 498.4C914.3 499.7 915.8 506.3 916.4 507.5C916.7 508.1 919.3 509.7 919.6 509.3C920.4 508.3 921.7 501.9 921.8 500.6C921.9 499.3 923.9 460.4 924 459.1C924.1 457.8 926.1 423.3 926.2 422C926.3 420.7 928.1 409.1 928.4 407.8C928.6 407.2 930.4 405.1 930.5 405.6C930.7 406.9 932.1 436 932.1 437.3C932.1 438.6 933.1 488.9 933.4 487.9C933.7 486.7 934.9 427.7 934.9 426.4C934.9 425.1 935.7 408 936 406.7C936.3 405.4 939.4 402.1 940.4 401.3C940.9 400.9 943.1 400.4 943.6 400.6C944.2 400.8 945.8 402.8 945.8 403.5C945.9 404.8 947.6 457.8 947.6 459.1C947.6 460.4 948.9 508.8 949.1 507.5C949.3 506.2 950.6 438.6 950.6 437.3C950.6 436 951.7 375.3 951.9 374C952.1 372.7 953.5 414.2 953.5 415.5C953.5 416.8 954.4 466.5 954.5 467.8C954.6 469 957.1 474.2 957.2 473.3C957.4 472 958.5 438.6 958.5 437.3C958.5 436 960.3 367 960.4 365.7C960.5 364.4 961.9 395.6 962.2 396.9C962.4 397.9 967.2 397.5 967.6 398.4C968.2 399.6 970.7 414.2 970.9 415.5C971.1 416.8 975.1 443.8 975.9 443.4C976.8 442.9 979.4 412.4 979.6 411.1C979.8 409.8 982.5 398.1 982.9 396.9C983.3 395.9 985.4 392.9 986.2 392.5C986.7 392.2 989.3 393 989.5 393.6C989.9 394.8 991.6 410 992.1 410C992.6 410 993.9 394.8 994.3 393.6C994.6 392.8 997.4 391.6 998.2 391.5C999 391.4 1002.1 391.9 1002.6 392.5C1003.5 393.5 1005 399.4 1005.8 400.2C1006.1 400.5 1007.8 397.7 1008 398C1008.7 399 1010.1 405.4 1010.2 406.7C1010.3 408 1011.8 436 1011.9 437.3C1012 438.6 1013.4 486.2 1013.5 487.5C1013.6 488.7 1016.3 491.7 1016.7 492.9C1017.1 494.1 1018.3 503.6 1018.9 503.8C1019.4 504 1021.4 496 1022.2 495.1C1022.5 494.8 1023.9 497.6 1024.4 497.9C1024.8 498.1 1026.9 497.8 1027 497.3C1027.2 496 1028.6 471.3 1028.7 470C1028.8 468.7 1030.3 416.8 1030.3 415.5C1030.3 414.2 1031.6 362.2 1031.6 360.9C1031.6 359.6 1033 300.4 1033.1 299.1C1033.2 297.8 1034.7 275.6 1035.3 274.7C1035.7 274.1 1037.5 290.3 1037.9 291.5C1038.1 292.1 1040.2 293.6 1040.7 293.6C1041.2 293.6 1042.6 292 1042.9 291.5C1043.6 290.4 1045.2 285.7 1045.8 285.6C1046.4 285.5 1048 289.9 1048.8 290.8C1049.2 291.2 1051.3 291.6 1051.6 292.1C1052.3 293.2 1053.7 297.8 1053.8 299.1C1053.9 300.4 1055.3 330.5 1055.4 331.8C1055.5 333.1 1056.6 363.2 1056.7 364.5C1056.8 365.8 1058.7 382.9 1058.8 381.6C1058.9 380.3 1060.4 322.2 1060.4 320.9C1060.4 319.6 1061.5 279.6 1061.9 278.4C1062.2 277.5 1063.5 308.7 1063.6 310C1063.7 311.3 1065.7 341.4 1065.8 342.7C1065.9 344 1067.9 363.2 1068 364.5C1068.1 365.8 1069.3 392 1069.8 393.2C1070.1 394.1 1072 377.4 1072.4 376.2C1072.6 375.6 1074.9 375 1075.5 374.8C1076.2 374.5 1078.1 373.9 1078.7 373.6C1079.3 373.3 1081.2 372.1 1081.8 371.8C1082.5 371.4 1084.7 370.3 1085.4 370C1086.1 369.8 1088.4 369.2 1089.1 369C1089.8 368.7 1092 367.8 1092.7 367.5C1093.6 367.2 1096.2 366.2 1097.1 365.9C1098 365.6 1100.6 364.6 1101.5 364.2C1102.4 363.8 1104.9 362 1105.8 362C1106.5 362 1109.3 364.6 1109.4 363.9C1109.6 362.6 1110.5 333.1 1110.6 331.8C1110.7 330.5 1112.5 280.8 1112.8 279.5C1113.1 278.2 1115 309.6 1115.6 310C1116.1 310.3 1118 284.5 1118.3 283.2C1118.5 282.3 1120.3 289.2 1120.7 290.4C1121.1 291.6 1123.1 295.6 1123.3 296.9C1123.5 298.2 1125.3 328.3 1125.5 329.6C1125.7 330.4 1128.6 324.5 1128.7 325.3C1128.9 326.6 1130.8 361.1 1130.9 362.4C1131 363.7 1131.5 369.5 1132 370.7C1132.5 371.9 1135.7 375.1 1136.8 375.7C1137.3 376 1139.2 374.9 1139.8 374.7C1140.5 374.5 1142.3 373.6 1142.9 373.6C1143.8 373.6 1146.4 374.4 1147.3 374.4C1148 374.4 1150.2 373.6 1150.9 373.4C1151.7 373.3 1153.8 372.6 1154.6 372.5C1155.3 372.3 1157.5 371.9 1158.2 371.8C1158.9 371.7 1161.1 371.9 1161.8 371.8C1162.6 371.7 1164.7 371 1165.5 370.9C1166.2 370.8 1168.4 370.7 1169.1 370.7C1169.7 370.7 1171.7 370.6 1172.3 370.6C1173 370.6 1175 370.8 1175.6 370.7C1176.4 370.6 1179.2 370.2 1179.6 369.6C1180.2 368.5 1180.6 363.7 1180.7 362.4C1180.8 361.1 1182.4 337.3 1182.8 337.9C1183.3 338.7 1184.7 368.3 1185 369.6C1185.3 370.6 1189.7 369.3 1190.9 369.2C1191.5 369.2 1193.3 369 1193.9 368.9C1194.5 368.9 1196.3 368.4 1196.9 368.4C1197.5 368.3 1199.3 368.1 1199.9 368C1200.5 367.9 1202.7 368 1202.9 367.5C1203.4 366.3 1204.3 357.3 1204.4 356C1204.5 354.7 1205.8 332.3 1206.2 332.9C1206.6 333.6 1208.3 361.1 1208.4 362.4C1208.5 363.7 1208.4 368.4 1209 369.2C1209.3 369.7 1212.2 368.6 1213 368.6C1213.9 368.5 1216.3 368.5 1217.1 368.5C1218 368.5 1220.6 368.5 1221.4 368.5C1222.3 368.4 1224.9 368 1225.8 367.9C1226.5 367.8 1228.6 367.8 1229.3 367.7C1230.1 367.7 1232.2 367.2 1232.9 367.1C1233.6 367.1 1235.7 367.4 1236.5 367.4C1237.2 367.4 1239.3 367 1240 367C1240.7 367 1242.8 367.1 1243.5 367.1C1244.3 367.1 1246.4 367.3 1247.1 367.3C1247.8 367.3 1249.9 367.1 1250.7 367.1C1251.4 367.1 1253.5 367.4 1254.2 367.4C1254.8 367.4 1256.6 367.3 1257.2 367.3C1257.8 367.3 1259.7 367.5 1260.3 367.4C1260.9 367.3 1262.7 366.6 1263.3 366.6C1263.9 366.5 1265.7 366.8 1266.3 366.8C1266.9 366.9 1268.8 366.7 1269.4 366.7C1270 366.7 1271.8 366.5 1272.4 366.5C1273 366.4 1274.8 366.3 1275.4 366.2C1276 366.2 1277.9 365.9 1278.5 366C1279.1 366 1280.9 366.4 1281.5 366.4C1282.1 366.3 1283.9 365.7 1284.5 365.6C1285.1 365.5 1287 365.5 1287.6 365.5C1288.2 365.5 1290 365.5 1290.6 365.5C1291.2 365.5 1293.1 365.7 1293.7 365.6C1294.3 365.6 1296.2 365.4 1296.8 365.4C1297.4 365.3 1299.3 365.4 1299.9 365.4C1300.5 365.3 1302.4 365 1303 365C1303.6 365 1305.5 365.5 1306.1 365.5C1306.7 365.5 1308.6 365.3 1309.2 365.2C1309.8 365.2 1311.7 364.8 1312.3 364.8C1312.9 364.8 1314.8 365.2 1315.4 365.3C1316 365.3 1317.9 365.1 1318.5 365C1319.1 364.9 1321 364.8 1321.7 364.7C1322.3 364.6 1324.2 364.5 1324.8 364.4C1325.5 364.4 1327.3 364 1328 363.9C1328.6 363.8 1330.5 363.9 1331.1 363.8C1331.8 363.8 1333.7 363.5 1334.3 363.5C1334.9 363.5 1336.9 363.8 1337.5 363.8C1338.2 363.7 1340.1 363.1 1340.8 363C1341.4 363 1343.4 363.4 1344 363.5C1344.6 363.5 1346.6 363.5 1347.2 363.5C1347.9 363.4 1349.8 363.3 1350.5 363.3C1351.1 363.3 1353.1 363.2 1353.7 363.2C1354.3 363.2 1356.3 363 1356.9 363C1357.6 363.1 1359.5 363.6 1360.2 363.5C1360.8 363.5 1362.7 363 1363.4 362.9C1364 362.9 1366 362.9 1366.6 362.9C1367.3 363 1369.2 363.3 1369.9 363.3C1370.5 363.3 1372.6 363.3 1373.1 363C1373.6 362.7 1374.4 360 1374.8 360.1C1375.3 360.2 1376.6 363.4 1377.2 363.8C1377.7 364.1 1379.8 363.6 1380.4 363.6C1381.1 363.5 1383 363.5 1383.6 363.5C1384.3 363.4 1386.2 363.1 1386.8 363.1C1387.5 363 1389.4 363.4 1390.1 363.4C1390.7 363.4 1392.6 363.1 1393.3 363C1393.9 362.9 1395.8 362.5 1396.5 362.4C1397.1 362.4 1399.1 362.6 1399.7 362.6C1400.3 362.6 1402.1 362.7 1402.7 362.7C1403.3 362.7 1405.2 362.4 1405.8 362.3C1406.4 362.3 1408.2 362.3 1408.8 362.2C1409.4 362.2 1411.2 361.9 1411.8 361.9C1412.4 361.9 1414.3 362 1414.9 362C1415.5 362 1417.7 362.3 1417.9 361.8C1418.4 360.6 1419.8 349.7 1420.3 349.7C1420.8 349.7 1422.3 360.6 1422.8 361.8C1423 362.3 1425.3 362.1 1425.9 362.1C1426.5 362.1 1428.4 361.4 1429 361.4C1429.6 361.4 1431.5 361.8 1432.1 361.9C1432.8 361.9 1434.6 362 1435.3 361.9C1435.9 361.9 1437.7 361.8 1438.4 361.7C1439 361.7 1440.9 361.8 1441.5 361.8C1442.1 361.8 1444.2 362.1 1444.6 361.8C1445.3 361.3 1446.5 357.7 1447 357.7C1447.5 357.7 1448.7 361.3 1449.4 361.8C1449.9 362.1 1452 361.5 1452.7 361.6C1453.4 361.6 1455.3 362 1456 362C1456.7 361.9 1458.6 361.4 1459.3 361.3C1460 361.2 1461.9 361.2 1462.6 361.2C1463.3 361.3 1465.2 361.6 1465.9 361.6C1466.6 361.6 1468.5 361.2 1469.2 361.1C1469.9 361.1 1471.8 361.1 1472.5 361.1C1473.1 361.1 1474.9 360.9 1475.5 360.9C1476.1 360.8 1477.9 360.4 1478.5 360.4C1479.2 360.4 1481 360.6 1481.6 360.6C1482.2 360.6 1484 360.2 1484.6 360.1C1485.2 360 1487.1 360.1 1487.8 360C1488.4 360 1490.3 359.5 1490.9 359.5C1491.6 359.5 1493.4 359.9 1494.1 359.9C1494.7 360 1496.6 359.6 1497.2 359.5C1497.9 359.5 1500.3 360 1500.4 359.4C1500.7 358.1 1504.8 324.2 1505.7 324.2C1506.5 324.2 1508.7 358.1 1508.9 359.4C1509 359.8 1511.2 359.8 1511.3 359.4C1511.5 358.1 1514.9 322.3 1515.6 322.3C1516.3 322.3 1518.4 358.1 1518.6 359.4C1518.8 360.5 1519.5 351.3 1519.6 350C1519.7 348.7 1521.5 325.9 1521.9 326.7C1522.4 327.8 1523.9 358.1 1524.1 359.4C1524.2 360 1526.5 359.4 1527.1 359.4C1527.7 359.4 1529.5 359.3 1530.1 359.3C1530.7 359.3 1532.6 359.4 1533.2 359.4C1533.8 359.5 1535.6 359.7 1536.2 359.7C1536.8 359.6 1538.6 359 1539.2 359C1539.8 359 1541.6 359.4 1542.2 359.5C1542.8 359.5 1544.7 359.6 1545.3 359.6C1545.9 359.6 1547.7 359.3 1548.3 359.3C1548.9 359.3 1550.7 359.4 1551.3 359.4C1551.9 359.4 1553.7 359.2 1554.3 359.2C1554.9 359.1 1556.8 358.9 1557.4 358.9C1558 358.9 1559.8 359.2 1560.4 359.1C1561 359.1 1562.8 358.5 1563.4 358.4C1564 358.3 1565.9 358.2 1566.5 358.2C1567.1 358.2 1568.9 358.2 1569.5 358.2C1570.1 358.2 1571.9 358.4 1572.5 358.4C1573.1 358.3 1574.9 357.9 1575.5 357.8C1576.2 357.7 1578 357.8 1578.6 357.7C1579.2 357.7 1581 357.5 1581.6 357.4C1582.2 357.4 1584 357.7 1584.6 357.7C1585.2 357.7 1587 357.5 1587.7 357.4C1588.3 357.3 1590.1 356.8 1590.7 356.8C1591.3 356.7 1593.1 357 1593.7 357C1594.3 357 1596.1 357.2 1596.7 357.2C1597.3 357.2 1599.2 356.9 1599.8 356.8C1600.4 356.8 1602.2 356.7 1602.8 356.7C1603.4 356.6 1605.2 356.6 1605.8 356.6C1606.5 356.6 1608.3 356.6 1608.9 356.6C1609.5 356.6 1611.3 356.8 1611.9 356.8C1612.5 356.7 1614.3 356.1 1615 356C1615.6 356 1617.4 356.3 1618 356.3C1618.6 356.3 1620.4 356.3 1621 356.3C1621.6 356.3 1623.5 356.4 1624.1 356.3C1624.7 356.3 1626.5 355.9 1627.1 355.9C1627.7 355.9 1629.5 356 1630.1 356C1630.7 355.9 1632.6 355.8 1633.2 355.8C1633.8 355.8 1636.1 356.3 1636.2 355.8C1636.5 354.5 1638.7 329 1639.3 329.1C1639.9 329.2 1641.8 355.7 1642.1 357C1642.2 357.6 1644.6 357.3 1645.2 357.2C1645.9 357.2 1647.8 356.7 1648.4 356.7C1649 356.6 1650.9 356.6 1651.5 356.6C1652.2 356.6 1654.1 357.1 1654.7 357C1655.3 357 1657.2 356.6 1657.8 356.5C1658.5 356.5 1660.4 356.6 1661 356.6C1661.6 356.6 1663.5 356.4 1664.1 356.4C1664.8 356.4 1666.7 356.6 1667.3 356.6C1667.9 356.6 1669.8 356.5 1670.4 356.4C1671.1 356.4 1673 356.4 1673.6 356.3C1674.2 356.2 1676.2 355.8 1676.8 355.8C1677.5 355.8 1679.4 356.4 1680.1 356.4C1680.7 356.4 1682.7 356 1683.3 356C1683.9 355.9 1685.9 355.8 1686.5 355.8C1687.2 355.7 1689.1 355.7 1689.8 355.7C1690.4 355.7 1692.4 355.6 1693 355.7C1693.6 355.7 1695.6 355.8 1696.2 355.8C1696.9 355.7 1698.8 355.1 1699.5 355C1700.1 355 1702.1 355.3 1702.7 355.3C1703.3 355.3 1705.1 355.3 1705.7 355.3C1706.3 355.3 1708.2 355.3 1708.8 355.3C1709.4 355.2 1711.2 354.8 1711.8 354.7C1712.4 354.7 1714.2 354.8 1714.8 354.8C1715.4 354.8 1717.3 354.6 1717.9 354.6C1718.5 354.6 1720.3 354.9 1720.9 354.8C1721.5 354.8 1723.3 354.3 1723.9 354.2C1724.5 354.2 1726.4 354.1 1727 354.1C1727.6 354.1 1729.4 354.5 1730 354.5C1730.6 354.5 1732.4 354 1733 353.9C1733.6 353.8 1735.5 353.9 1736.1 353.9C1736.7 353.9 1738.6 354.1 1739.1 353.8C1739.6 353.5 1740.7 350.9 1741.1 350.9C1741.6 350.9 1742.9 353.5 1743.5 353.8C1744 354.1 1745.9 353.7 1746.5 353.7C1747.1 353.7 1748.9 354 1749.5 354C1750.2 354 1752 353.9 1752.6 353.9C1753.2 353.8 1755 353.4 1755.6 353.4C1756.2 353.5 1758 354.1 1758.6 354.1C1759.2 354.1 1761 353.9 1761.7 353.8C1762.3 353.8 1764.1 353.7 1764.7 353.7C1765.3 353.7 1767.6 354.4 1767.7 353.8C1767.9 352.5 1770 318.2 1770.6 318.2C1771.2 318.2 1773.4 352.5 1773.6 353.8C1773.7 354.5 1776.7 354 1777.5 354.1C1778.2 354.1 1780.6 354.3 1781.3 354.3C1782.1 354.4 1784.4 354.6 1785.2 354.6C1785.8 354.6 1787.8 354.8 1788.4 354.8C1789.1 354.7 1791 354.1 1791.7 354.1C1792.3 354.1 1794.3 354.4 1794.9 354.5C1795.5 354.5 1797.5 354.6 1798.1 354.6C1798.8 354.5 1800.7 354.1 1801.4 354.1C1802 354 1804 354.2 1804.6 354.2C1805.2 354.2 1807.2 354.1 1807.8 354.1C1808.5 354.1 1810.4 354.3 1811.1 354.3C1811.7 354.3 1813.6 353.9 1814.3 353.8C1814.9 353.8 1816.9 353.7 1817.5 353.7C1818.2 353.8 1820.1 354.2 1820.8 354.2C1821.4 354.2 1823.4 353.9 1824 353.8C1824.6 353.7 1826.5 353.6 1827.1 353.5C1827.8 353.5 1829.6 353.6 1830.3 353.6C1830.9 353.5 1832.8 353.5 1833.4 353.5C1834 353.5 1835.9 353.6 1836.5 353.5C1837.2 353.5 1839.1 353.4 1839.7 353.4C1840.3 353.3 1842.2 352.8 1842.8 352.8C1843.4 352.8 1845.3 353.4 1845.9 353.4C1846.6 353.4 1848.5 353.1 1849.1 353C1849.7 352.9 1851.6 352.7 1852.2 352.7C1852.8 352.7 1854.7 352.8 1855.4 352.8C1856 352.8 1857.9 352.7 1858.5 352.7C1859.1 352.7 1861 352.9 1861.6 352.8C1862.3 352.8 1864.1 352.2 1864.8 352.2C1865.4 352.1 1867.3 352.4 1867.9 352.5C1868.5 352.5 1870.4 352.6 1871 352.6C1871.7 352.5 1873.5 352 1874.2 352C1874.8 351.9 1877.2 352.7 1877.3 352.1C1877.5 350.8 1879.6 318.2 1880.2 318.2C1880.8 318.2 1883.2 350.8 1883.4 352.1C1883.5 352.7 1886 352.1 1886.6 352.1C1887.2 352 1889.1 351.9 1889.8 351.9C1890.4 351.9 1892.3 352.1 1893 352.1C1893.6 352 1895.5 351.6 1896.2 351.6C1896.8 351.5 1898.7 351.4 1899.3 351.5C1900 351.5 1901.9 352 1902.5 352C1903.2 351.9 1905.1 351.4 1905.7 351.3C1906.3 351.2 1908.3 351.4 1908.9 351.4C1909.5 351.4 1911.3 351.2 1911.9 351.2C1912.5 351.2 1914.3 351.2 1915 351.2C1915.6 351.2 1917.4 351.2 1918 351.1C1918.6 351.1 1920.4 350.9 1921 350.9C1921.6 350.9 1923.4 351 1924 351C1924.6 350.9 1926.4 350.5 1927 350.5C1927.7 350.6 1929.5 351.2 1930.1 351.2C1930.7 351.3 1932.5 351 1933.1 350.9C1933.7 350.9 1935.5 350.7 1936.1 350.7C1936.7 350.7 1938.5 350.9 1939.2 351C1939.8 351 1941.6 350.9 1942.2 350.9C1942.8 350.9 1944.6 350.9 1945.2 350.9C1945.8 350.9 1947.8 351.1 1948.4 351C1949.1 351 1951 350.4 1951.7 350.4C1952.3 350.4 1954.3 350.7 1954.9 350.7C1955.5 350.8 1957.5 350.9 1958.1 350.8C1958.8 350.8 1960.7 350.2 1961.4 350.2C1962 350.2 1964 350.3 1964.6 350.4C1965.2 350.4 1967 350.7 1967.7 350.7C1968.3 350.8 1970.6 350.4 1970.7 350.9C1970.9 352.2 1971.9 371.4 1971.9 372.7C1971.9 374 1973.7 456.3 1973.8 457.6C1973.8 458.2 1976.6 458.6 1976.7 458.1C1976.9 456.8 1979.1 427.4 1979.2 426.1C1979.3 424.8 1984.3 376.5 1984.5 375.2C1984.7 373.9 1989.9 353.3 1990.1 354.6C1990.3 355.9 1991.7 421.5 1992.5 422.5C1993.2 423.5 1997.3 365 1998.1 365C1998.9 365 1999.7 422.6 2000.5 422.5C2001.3 422.4 2005 364.3 2005.8 364.3C2006.6 364.3 2007.9 422 2008.8 422.5C2009.6 423 2013.5 369.2 2014.3 369.1C2015.1 369 2016.3 421.7 2017 421.2C2017.8 420.7 2021.4 365.6 2021.6 364.3C2021.7 363.5 2025 364 2025.8 363.9C2026.6 363.8 2029.2 363.6 2030 363.5L2030.0 360.5L109.6 360.5Z" fill="rgba(255,0,0,0.3)" stroke="none"/>
<path d="M109.6 367.9C110.4 367.7 112.7 366.9 113.5 366.7C114 366.6 115.5 366.5 115.9 366.7C116.5 367 117.7 369 118.3 369.3C118.6 369.5 120.1 369.5 120.2 369.1C120.4 367.8 121.3 349.8 121.4 348.5C121.5 347.2 122.8 328.1 123.2 328.1C123.6 328.1 124.9 347.2 125 348.5C125.1 349.8 127.2 366.6 127.4 367.9C127.6 369.2 130.6 390.3 131.1 391.5C131.4 392.3 133.2 383.7 133.5 382.4C133.8 381.1 135.7 367.5 136.3 366.4C136.6 365.8 138.3 372.5 138.9 372.7C139.4 372.8 141.1 368.9 141.4 367.9C141.8 366.7 143.1 359.5 143.2 358.2C143.3 356.9 144.3 337.7 144.4 336.4C144.5 335.1 146.4 271.1 146.9 271.1C147.4 271.1 149 334.7 149 336C149 337.3 149.7 378.1 149.8 379.4C149.9 380.7 151 361.9 151.1 360.6C151.2 359.3 152.3 351.3 152.5 351.5C152.8 351.8 153.6 361.7 153.7 363C153.8 364.3 154.7 375.9 155.1 376.6C155.4 377 156.4 369.6 157.1 368.5C157.6 367.7 161 367 162 366.7C163.2 366.4 166.8 365.7 168 365.5C169 365.3 171.9 364.5 172.9 364.5C173.4 364.5 174.9 365.6 175.3 365.5C175.8 365.4 177.2 363.7 177.7 363.6C178.4 363.5 180.7 364.8 181.4 364.8C182.1 364.8 184.2 363.5 185 363.3C185.9 363.1 188.8 362.9 189.8 362.8C190.3 362.7 192.2 362 192.3 362.4C192.7 363.6 193.1 371.4 193.2 372.7C193.3 374 194.1 398.7 194.1 400C194.1 401.3 195.3 493.6 195.4 494.9C195.5 495.8 199.4 494.5 200.4 494.5C201.1 494.5 203 494.6 203.7 494.7C204.3 494.7 206.3 495 206.9 495.1C207.6 495.1 209.6 495.2 210.2 495.3C210.9 495.3 212.8 495.4 213.5 495.4C214.2 495.4 216.1 495.3 216.8 495.3C217.4 495.4 219.4 496.2 220.1 496.3C220.7 496.4 222.7 496.4 223.3 496.4C224 496.5 225.9 496.7 226.6 496.7C227.5 496.8 230.1 496.9 230.9 496.9C231.8 497 234.4 497.5 235.3 497.5C236.1 497.5 238.3 497.2 239.1 497.1C239.9 497 242.3 497 242.9 496.7C243.6 496.3 245.1 493.4 245.8 493.4C246.7 493.4 249.6 496.3 250.6 496.7C251.3 496.9 253.6 496.4 254.4 496.3C255.2 496.3 257.7 496.4 258.2 496C259.2 495.2 261.1 490.2 261.9 490.1C262.6 490 264.5 494.6 265.4 495.4C265.8 495.8 267.9 495.8 268.5 495.8C269.1 495.8 270.9 495.4 271.5 495.5C272.1 495.5 274 495.9 274.6 496C275.2 496.1 277.2 496.2 277.9 496.3C278.5 496.4 280.4 496.8 281.1 496.8C281.7 496.8 283.7 496.6 284.4 496.6C285 496.6 286.9 497.1 287.6 497.1C288.2 497.1 290.1 497.1 290.7 497.1C291.4 497.1 293.2 496.9 293.9 496.9C294.5 496.9 296.4 497.2 297 497.2C297.6 497.1 299.5 496.8 300.1 496.7C300.7 496.7 302.6 496.6 303.2 496.6C303.9 496.6 305.7 497.1 306.4 497.1C307 497.1 308.9 496.8 309.5 496.7C310.1 496.6 312.1 496.5 312.8 496.5C313.4 496.5 315.3 496.6 316 496.6C316.6 496.6 318.6 496.7 319.2 496.7C319.9 496.7 321.9 496.7 322.5 496.7C323.2 496.7 325.3 496.9 326 496.9C326.7 496.9 328.8 497 329.5 496.9C330.2 496.9 332.3 496.5 333 496.6C333.7 496.6 335.8 497.3 336.5 497.3C337.2 497.4 339.3 497.1 340 497.1C340.7 497.1 342.9 497.1 343.6 497.1C344.4 497.1 346.9 497.5 347.3 497C348.1 496 349.2 489.2 350 488.9C350.6 488.6 353.2 493.3 354.2 494C355.2 494.7 358.8 495.6 360 495.8C360.6 495.9 362.6 495.8 363.2 495.8C363.9 495.9 365.8 496.3 366.5 496.3C367.1 496.4 369.1 496.4 369.8 496.5C370.4 496.6 372.3 496.9 373 496.9C373.6 497 375.6 496.6 376.2 496.6C376.9 496.7 378.8 497.2 379.5 497.2C380.1 497.2 382.1 497 382.8 497C383.4 497 385.4 497.1 386 497C386.7 496.9 388.6 496.3 389.3 496.2C389.9 496.2 391.9 496.3 392.6 496.3C393.2 496.3 395.2 496.1 395.8 496C396.5 496 398.4 495.8 399.1 495.8C399.8 495.8 401.7 496.2 402.4 496.2C403 496.2 405 496.1 405.7 496.1C406.3 496.1 408.3 496.1 409 496.2C409.6 496.3 411.6 496.9 412.2 497C412.9 497 414.9 496.6 415.5 496.6C416.2 496.6 418.2 496.9 418.8 496.9C419.5 497 421.4 497.2 422.1 497.2C422.8 497.2 424.7 496.9 425.4 496.9C426 496.8 428 496.6 428.7 496.5C429.3 496.5 431.3 496.3 432 496.2C432.6 496 434.6 495.4 435.2 495.4C435.9 495.3 437.9 495.7 438.5 495.6C439.2 495.6 441.2 495.1 441.8 495C442.5 494.9 444.5 494.8 445.1 494.6C446 494.4 448.8 493.3 449.7 493C450.3 492.8 452.2 492.5 452.8 492.5C453.4 492.4 455.3 492.5 455.9 492.5C456.5 492.5 458.3 492.1 458.9 492.1C459.6 492 461.4 492.1 462 492C462.7 491.9 464.5 491.3 465.1 491.2C465.7 491.1 467.6 491.2 468.2 491.2C468.9 491.2 470.8 491 471.5 491C472.1 491 474.1 491 474.8 491C475.4 490.9 477.4 490.2 478.1 490.1C478.7 490 480.7 490.2 481.3 490.2C482 490.1 484 489.9 484.6 489.8C485.3 489.8 487.3 489.8 487.9 489.7C488.6 489.7 490.5 489.4 491.2 489.3C492.4 489.2 495.9 488.7 497 488.9C498 489.1 500.5 491.3 501.5 491.6C502.1 491.8 503.9 491.3 504.5 491.2C505.1 491.1 506.9 490.8 507.6 490.8C508.2 490.8 510 491.2 510.6 491.1C511.2 491.1 513 490.4 513.6 490.3C514.2 490.2 516 490.1 516.6 490.1C517.2 490 519 490 519.7 490C520.3 489.9 522.1 489.7 522.7 489.6C523.3 489.6 525.1 489.4 525.7 489.3C526.4 489.2 528.5 489 529.2 488.9C529.8 488.8 531.9 488.1 532.6 488.1C533.3 488 535.4 488.3 536 488.2C536.7 488.2 538.8 487.7 539.5 487.6C540.2 487.4 542.3 486.9 543 486.8C543.6 486.7 545.7 486.6 546.4 486.6C547 486.6 548.9 486.6 549.6 486.5C550.2 486.5 552.1 486.2 552.8 486.2C553.4 486.2 555.3 486.2 555.9 486.2C556.6 486.1 558.5 485.6 559.1 485.5C559.7 485.5 561.6 485.6 562.3 485.6C562.9 485.7 564.8 485.8 565.4 485.7C566.1 485.6 568 485 568.6 484.9C569.2 484.8 571.2 485 571.8 485C572.6 485.1 574.9 485.3 575.6 485.4C576.4 485.5 578.7 485.7 579.5 485.8C580.2 485.8 582.5 486.1 583.3 486.1C584 486.1 585.9 486.2 586.6 486.2C587.2 486.2 589.2 486 589.9 485.9C590.5 485.9 592.5 485.8 593.2 485.8C593.8 485.9 595.8 486.4 596.4 486.4C597.1 486.4 599.1 485.8 599.7 485.8C600.4 485.7 602.4 485.8 603 485.8C603.7 485.8 606.2 486.5 606.3 485.9C606.5 484.6 609 446.4 609.1 445.1C609.2 443.8 614.6 395.3 614.8 394C614.9 393.3 617.8 393.4 618.6 393.2C619.4 393 621.8 392.6 622.4 392.2C623.5 391.4 625.9 387.8 627 387.1C627.5 386.8 629.7 387.1 630.4 387.1C631.1 387.1 633.7 386.5 633.8 387.1C633.9 388.4 635.6 450.9 636.4 451.5C637.1 452.1 640.2 393.2 641 393.2C641.8 393.2 643.9 451.5 644.7 451.5C645.6 451.5 648.7 393.2 649.5 393.2C650.3 393.2 652 451.3 652.8 451.5C653.6 451.6 656.6 394.7 657.4 394.7C658.2 394.7 660.3 451.6 661.1 451.5C661.9 451.4 664.7 394 665.5 394.1C666.3 394.2 668.4 452.1 669.2 452.1C670 452 673.1 393.6 673.8 393.6C674.5 393.6 676.2 450.8 676.4 452.1C676.6 453.4 678.8 422.5 679 423.8C679.2 425.1 682.4 487.3 682.5 488.6C682.5 489 684.6 489 684.7 488.6C685 487.3 687.2 469.1 687.3 467.8C687.4 466.5 690.5 394.9 690.6 393.6C690.7 392.3 691.6 362.2 691.6 360.9C691.6 359.6 692.4 313.3 692.7 312.4C692.9 311.7 694.1 351.4 694.2 352.7C694.3 354 695 365.2 695.6 366.4C695.9 367.1 699.4 365.7 700.4 365.7C701.1 365.7 703 366.3 703.7 366.4C704.4 366.5 706.3 366.9 707 367C707.6 367.1 709.6 366.9 710.2 366.9C710.9 367 712.9 367.3 713.5 367.5C714.4 367.8 717.1 369.5 717.8 369.2C718.7 368.8 720.8 365.3 721.1 364.2C721.4 362.9 724.3 340.9 724.8 341.4C725.5 342 726.7 369.2 727.2 369.6C727.7 369.9 729.4 346.3 729.8 345.1C730.1 344.3 731.1 357.4 731.2 358.7C731.3 360 732.4 386.2 732.7 387.5C732.9 388.5 734.3 374.1 734.8 372.9C735.1 372.1 738.7 372.1 739.6 371.8C740.5 371.5 743.1 369.8 744 369.6C744.6 369.5 746.6 370.3 747.3 370.4C748 370.6 749.9 370.7 750.6 370.7C751.2 370.7 753 370.3 753.7 370.2C754.3 370.1 756.6 370.1 756.7 369.6C757 368.3 757.5 354 757.6 352.7C757.7 351.4 759 334.2 759.4 334.2C759.8 334.2 761.8 351.4 762 352.7C762.2 354 764.5 363.4 764.8 362.6C765.3 361.4 767.3 340.9 767.5 339.6C767.7 338.3 769.7 317.9 770.1 318.9C770.6 320.1 772.3 351.4 772.5 352.7C772.6 353.5 774.9 355.2 775.1 356C775.5 357.2 777.8 372.7 777.9 371.4C778 370.1 779.5 310.4 779.5 309.1C779.5 307.8 780.8 278.1 781 276.8C781.1 276.3 783.3 276 783.4 276.4C783.6 277.7 784.9 307.8 784.9 309.1C784.9 310.4 785.9 381.4 786 382.7C786.1 383.7 788.6 378.5 788.8 377.3C789 376 790 354 790 352.7C790 351.4 791.4 288.6 791.5 287.3C791.6 286 793.8 256.8 794.3 256.3C794.7 255.9 796.2 281.6 796.3 282.9C796.4 284.2 799.1 351.4 799.1 352.7C799.1 354 799.2 394.7 799.5 394.7C799.8 394.7 802.3 354 802.4 352.7C802.5 351.4 805.1 285.3 805.2 284C805.3 282.7 807 305.6 807.2 306.9C807.4 307.9 809.8 310.3 810 311.3C810.2 312.6 812.4 344 812.8 342.9C813.2 341.7 814.7 299.5 814.8 298.2C814.9 296.9 815.4 287.4 815.9 286.2C816.2 285.5 819.1 285.4 819.8 285.1C821 284.6 824.1 282.3 825.3 281.8C826 281.5 828.3 281.5 829.1 281.5C829.9 281.5 832.2 281.7 832.9 281.8C833.6 281.9 835.5 282.6 836.2 282.7C836.9 282.9 838.8 283.3 839.5 283.3C840.6 283.3 843.9 282.6 844.9 282.9C846.1 283.2 849.3 285.6 850.4 286.2C851.2 286.7 854.2 287.6 854.7 288.4C855.4 289.5 856.2 294.7 856.3 296C856.4 297.3 857.4 351.4 857.4 352.7C857.4 354 858.3 401.1 858.4 402.4C858.5 403 861.6 402.2 861.7 402.8C861.9 404.1 865.5 456.1 866.3 455.8C867.1 455.5 869.3 401.5 869.4 400.2C869.5 399.6 871.8 399.8 872.5 399.7C873.1 399.5 875.1 399.5 875.5 399.1C876 398.7 877.1 396.5 877.2 395.8C877.4 394.5 879.3 369 879.8 369.6C880.4 370.3 882.1 401.1 882.4 402.4C882.6 403.2 885.5 399.5 886.4 399.1C887.1 398.8 889.4 398.8 890.2 398.7C891 398.6 893.2 398 894 398C894.9 398 897.5 398.2 898.4 398.3C899.2 398.4 901.8 398.9 902.7 399.1C903.6 399.3 906.2 400.5 907.1 400.6C908.1 400.8 911.9 399.7 912 400.6C912.2 401.9 913.1 446.9 913.1 448.2C913.1 449.5 914.1 497.1 914.2 498.4C914.3 499.7 915.8 506.3 916.4 507.5C916.7 508.1 919.3 509.7 919.6 509.3C920.4 508.3 921.7 501.9 921.8 500.6C921.9 499.3 923.9 460.4 924 459.1C924.1 457.8 926.1 423.3 926.2 422C926.3 420.7 928.1 409.1 928.4 407.8C928.6 407.2 930.4 405.1 930.5 405.6C930.7 406.9 932.1 436 932.1 437.3C932.1 438.6 933.1 488.9 933.4 487.9C933.7 486.7 934.9 427.7 934.9 426.4C934.9 425.1 935.7 408 936 406.7C936.3 405.4 939.4 402.1 940.4 401.3C940.9 400.9 943.1 400.4 943.6 400.6C944.2 400.8 945.8 402.8 945.8 403.5C945.9 404.8 947.6 457.8 947.6 459.1C947.6 460.4 948.9 508.8 949.1 507.5C949.3 506.2 950.6 438.6 950.6 437.3C950.6 436 951.7 375.3 951.9 374C952.1 372.7 953.5 414.2 953.5 415.5C953.5 416.8 954.4 466.5 954.5 467.8C954.6 469 957.1 474.2 957.2 473.3C957.4 472 958.5 438.6 958.5 437.3C958.5 436 960.3 367 960.4 365.7C960.5 364.4 961.9 395.6 962.2 396.9C962.4 397.9 967.2 397.5 967.6 398.4C968.2 399.6 970.7 414.2 970.9 415.5C971.1 416.8 975.1 443.8 975.9 443.4C976.8 442.9 979.4 412.4 979.6 411.1C979.8 409.8 982.5 398.1 982.9 396.9C983.3 395.9 985.4 392.9 986.2 392.5C986.7 392.2 989.3 393 989.5 393.6C989.9 394.8 991.6 410 992.1 410C992.6 410 993.9 394.8 994.3 393.6C994.6 392.8 997.4 391.6 998.2 391.5C999 391.4 1002.1 391.9 1002.6 392.5C1003.5 393.5 1005 399.4 1005.8 400.2C1006.1 400.5 1007.8 397.7 1008 398C1008.7 399 1010.1 405.4 1010.2 406.7C1010.3 408 1011.8 436 1011.9 437.3C1012 438.6 1013.4 486.2 1013.5 487.5C1013.6 488.7 1016.3 491.7 1016.7 492.9C1017.1 494.1 1018.3 503.6 1018.9 503.8C1019.4 504 1021.4 496 1022.2 495.1C1022.5 494.8 1023.9 497.6 1024.4 497.9C1024.8 498.1 1026.9 497.8 1027 497.3C1027.2 496 1028.6 471.3 1028.7 470C1028.8 468.7 1030.3 416.8 1030.3 415.5C1030.3 414.2 1031.6 362.2 1031.6 360.9C1031.6 359.6 1033 300.4 1033.1 299.1C1033.2 297.8 1034.7 275.6 1035.3 274.7C1035.7 274.1 1037.5 290.3 1037.9 291.5C1038.1 292.1 1040.2 293.6 1040.7 293.6C1041.2 293.6 1042.6 292 1042.9 291.5C1043.6 290.4 1045.2 285.7 1045.8 285.6C1046.4 285.5 1048 289.9 1048.8 290.8C1049.2 291.2 1051.3 291.6 1051.6 292.1C1052.3 293.2 1053.7 297.8 1053.8 299.1C1053.9 300.4 1055.3 330.5 1055.4 331.8C1055.5 333.1 1056.6 363.2 1056.7 364.5C1056.8 365.8 1058.7 382.9 1058.8 381.6C1058.9 380.3 1060.4 322.2 1060.4 320.9C1060.4 319.6 1061.5 279.6 1061.9 278.4C1062.2 277.5 1063.5 308.7 1063.6 310C1063.7 311.3 1065.7 341.4 1065.8 342.7C1065.9 344 1067.9 363.2 1068 364.5C1068.1 365.8 1069.3 392 1069.8 393.2C1070.1 394.1 1072 377.4 1072.4 376.2C1072.6 375.6 1074.9 375 1075.5 374.8C1076.2 374.5 1078.1 373.9 1078.7 373.6C1079.3 373.3 1081.2 372.1 1081.8 371.8C1082.5 371.4 1084.7 370.3 1085.4 370C1086.1 369.8 1088.4 369.2 1089.1 369C1089.8 368.7 1092 367.8 1092.7 367.5C1093.6 367.2 1096.2 366.2 1097.1 365.9C1098 365.6 1100.6 364.6 1101.5 364.2C1102.4 363.8 1104.9 362 1105.8 362C1106.5 362 1109.3 364.6 1109.4 363.9C1109.6 362.6 1110.5 333.1 1110.6 331.8C1110.7 330.5 1112.5 280.8 1112.8 279.5C1113.1 278.2 1115 309.6 1115.6 310C1116.1 310.3 1118 284.5 1118.3 283.2C1118.5 282.3 1120.3 289.2 1120.7 290.4C1121.1 291.6 1123.1 295.6 1123.3 296.9C1123.5 298.2 1125.3 328.3 1125.5 329.6C1125.7 330.4 1128.6 324.5 1128.7 325.3C1128.9 326.6 1130.8 361.1 1130.9 362.4C1131 363.7 1131.5 369.5 1132 370.7C1132.5 371.9 1135.7 375.1 1136.8 375.7C1137.3 376 1139.2 374.9 1139.8 374.7C1140.5 374.5 1142.3 373.6 1142.9 373.6C1143.8 373.6 1146.4 374.4 1147.3 374.4C1148 374.4 1150.2 373.6 1150.9 373.4C1151.7 373.3 1153.8 372.6 1154.6 372.5C1155.3 372.3 1157.5 371.9 1158.2 371.8C1158.9 371.7 1161.1 371.9 1161.8 371.8C1162.6 371.7 1164.7 371 1165.5 370.9C1166.2 370.8 1168.4 370.7 1169.1 370.7C1169.7 370.7 1171.7 370.6 1172.3 370.6C1173 370.6 1175 370.8 1175.6 370.7C1176.4 370.6 1179.2 370.2 1179.6 369.6C1180.2 368.5 1180.6 363.7 1180.7 362.4C1180.8 361.1 1182.4 337.3 1182.8 337.9C1183.3 338.7 1184.7 368.3 1185 369.6C1185.3 370.6 1189.7 369.3 1190.9 369.2C1191.5 369.2 1193.3 369 1193.9 368.9C1194.5 368.9 1196.3 368.4 1196.9 368.4C1197.5 368.3 1199.3 368.1 1199.9 368C1200.5 367.9 1202.7 368 1202.9 367.5C1203.4 366.3 1204.3 357.3 1204.4 356C1204.5 354.7 1205.8 332.3 1206.2 332.9C1206.6 333.6 1208.3 361.1 1208.4 362.4C1208.5 363.7 1208.4 368.4 1209 369.2C1209.3 369.7 1212.2 368.6 1213 368.6C1213.9 368.5 1216.3 368.5 1217.1 368.5C1218 368.5 1220.6 368.5 1221.4 368.5C1222.3 368.4 1224.9 368 1225.8 367.9C1226.5 367.8 1228.6 367.8 1229.3 367.7C1230.1 367.7 1232.2 367.2 1232.9 367.1C1233.6 367.1 1235.7 367.4 1236.5 367.4C1237.2 367.4 1239.3 367 1240 367C1240.7 367 1242.8 367.1 1243.5 367.1C1244.3 367.1 1246.4 367.3 1247.1 367.3C1247.8 367.3 1249.9 367.1 1250.7 367.1C1251.4 367.1 1253.5 367.4 1254.2 367.4C1254.8 367.4 1256.6 367.3 1257.2 367.3C1257.8 367.3 1259.7 367.5 1260.3 367.4C1260.9 367.3 1262.7 366.6 1263.3 366.6C1263.9 366.5 1265.7 366.8 1266.3 366.8C1266.9 366.9 1268.8 366.7 1269.4 366.7C1270 366.7 1271.8 366.5 1272.4 366.5C1273 366.4 1274.8 366.3 1275.4 366.2C1276 366.2 1277.9 365.9 1278.5 366C1279.1 366 1280.9 366.4 1281.5 366.4C1282.1 366.3 1283.9 365.7 1284.5 365.6C1285.1 365.5 1287 365.5 1287.6 365.5C1288.2 365.5 1290 365.5 1290.6 365.5C1291.2 365.5 1293.1 365.7 1293.7 365.6C1294.3 365.6 1296.2 365.4 1296.8 365.4C1297.4 365.3 1299.3 365.4 1299.9 365.4C1300.5 365.3 1302.4 365 1303 365C1303.6 365 1305.5 365.5 1306.1 365.5C1306.7 365.5 1308.6 365.3 1309.2 365.2C1309.8 365.2 1311.7 364.8 1312.3 364.8C1312.9 364.8 1314.8 365.2 1315.4 365.3C1316 365.3 1317.9 365.1 1318.5 365C1319.1 364.9 1321 364.8 1321.7 364.7C1322.3 364.6 1324.2 364.5 1324.8 364.4C1325.5 364.4 1327.3 364 1328 363.9C1328.6 363.8 1330.5 363.9 1331.1 363.8C1331.8 363.8 1333.7 363.5 1334.3 363.5C1334.9 363.5 1336.9 363.8 1337.5 363.8C1338.2 363.7 1340.1 363.1 1340.8 363C1341.4 363 1343.4 363.4 1344 363.5C1344.6 363.5 1346.6 363.5 1347.2 363.5C1347.9 363.4 1349.8 363.3 1350.5 363.3C1351.1 363.3 1353.1 363.2 1353.7 363.2C1354.3 363.2 1356.3 363 1356.9 363C1357.6 363.1 1359.5 363.6 1360.2 363.5C1360.8 363.5 1362.7 363 1363.4 362.9C1364 362.9 1366 362.9 1366.6 362.9C1367.3 363 1369.2 363.3 1369.9 363.3C1370.5 363.3 1372.6 363.3 1373.1 363C1373.6 362.7 1374.4 360 1374.8 360.1C1375.3 360.2 1376.6 363.4 1377.2 363.8C1377.7 364.1 1379.8 363.6 1380.4 363.6C1381.1 363.5 1383 363.5 1383.6 363.5C1384.3 363.4 1386.2 363.1 1386.8 363.1C1387.5 363 1389.4 363.4 1390.1 363.4C1390.7 363.4 1392.6 363.1 1393.3 363C1393.9 362.9 1395.8 362.5 1396.5 362.4C1397.1 362.4 1399.1 362.6 1399.7 362.6C1400.3 362.6 1402.1 362.7 1402.7 362.7C1403.3 362.7 1405.2 362.4 1405.8 362.3C1406.4 362.3 1408.2 362.3 1408.8 362.2C1409.4 362.2 1411.2 361.9 1411.8 361.9C1412.4 361.9 1414.3 362 1414.9 362C1415.5 362 1417.7 362.3 1417.9 361.8C1418.4 360.6 1419.8 349.7 1420.3 349.7C1420.8 349.7 1422.3 360.6 1422.8 361.8C1423 362.3 1425.3 362.1 1425.9 362.1C1426.5 362.1 1428.4 361.4 1429 361.4C1429.6 361.4 1431.5 361.8 1432.1 361.9C1432.8 361.9 1434.6 362 1435.3 361.9C1435.9 361.9 1437.7 361.8 1438.4 361.7C1439 361.7 1440.9 361.8 1441.5 361.8C1442.1 361.8 1444.2 362.1 1444.6 361.8C1445.3 361.3 1446.5 357.7 1447 357.7C1447.5 357.7 1448.7 361.3 1449.4 361.8C1449.9 362.1 1452 361.5 1452.7 361.6C1453.4 361.6 1455.3 362 1456 362C1456.7 361.9 1458.6 361.4 1459.3 361.3C1460 361.2 1461.9 361.2 1462.6 361.2C1463.3 361.3 1465.2 361.6 1465.9 361.6C1466.6 361.6 1468.5 361.2 1469.2 361.1C1469.9 361.1 1471.8 361.1 1472.5 361.1C1473.1 361.1 1474.9 360.9 1475.5 360.9C1476.1 360.8 1477.9 360.4 1478.5 360.4C1479.2 360.4 1481 360.6 1481.6 360.6C1482.2 360.6 1484 360.2 1484.6 360.1C1485.2 360 1487.1 360.1 1487.8 360C1488.4 360 1490.3 359.5 1490.9 359.5C1491.6 359.5 1493.4 359.9 1494.1 359.9C1494.7 360 1496.6 359.6 1497.2 359.5C1497.9 359.5 1500.3 360 1500.4 359.4C1500.7 358.1 1504.8 324.2 1505.7 324.2C1506.5 324.2 1508.7 358.1 1508.9 359.4C1509 359.8 1511.2 359.8 1511.3 359.4C1511.5 358.1 1514.9 322.3 1515.6 322.3C1516.3 322.3 1518.4 358.1 1518.6 359.4C1518.8 360.5 1519.5 351.3 1519.6 350C1519.7 348.7 1521.5 325.9 1521.9 326.7C1522.4 327.8 1523.9 358.1 1524.1 359.4C1524.2 360 1526.5 359.4 1527.1 359.4C1527.7 359.4 1529.5 359.3 1530.1 359.3C1530.7 359.3 1532.6 359.4 1533.2 359.4C1533.8 359.5 1535.6 359.7 1536.2 359.7C1536.8 359.6 1538.6 359 1539.2 359C1539.8 359 1541.6 359.4 1542.2 359.5C1542.8 359.5 1544.7 359.6 1545.3 359.6C1545.9 359.6 1547.7 359.3 1548.3 359.3C1548.9 359.3 1550.7 359.4 1551.3 359.4C1551.9 359.4 1553.7 359.2 1554.3 359.2C1554.9 359.1 1556.8 358.9 1557.4 358.9C1558 358.9 1559.8 359.2 1560.4 359.1C1561 359.1 1562.8 358.5 1563.4 358.4C1564 358.3 1565.9 358.2 1566.5 358.2C1567.1 358.2 1568.9 358.2 1569.5 358.2C1570.1 358.2 1571.9 358.4 1572.5 358.4C1573.1 358.3 1574.9 357.9 1575.5 357.8C1576.2 357.7 1578 357.8 1578.6 357.7C1579.2 357.7 1581 357.5 1581.6 357.4C1582.2 357.4 1584 357.7 1584.6 357.7C1585.2 357.7 1587 357.5 1587.7 357.4C1588.3 357.3 1590.1 356.8 1590.7 356.8C1591.3 356.7 1593.1 357 1593.7 357C1594.3 357 1596.1 357.2 1596.7 357.2C1597.3 357.2 1599.2 356.9 1599.8 356.8C1600.4 356.8 1602.2 356.7 1602.8 356.7C1603.4 356.6 1605.2 356.6 1605.8 356.6C1606.5 356.6 1608.3 356.6 1608.9 356.6C1609.5 356.6 1611.3 356.8 1611.9 356.8C1612.5 356.7 1614.3 356.1 1615 356C1615.6 356 1617.4 356.3 1618 356.3C1618.6 356.3 1620.4 356.3 1621 356.3C1621.6 356.3 1623.5 356.4 1624.1 356.3C1624.7 356.3 1626.5 355.9 1627.1 355.9C1627.7 355.9 1629.5 356 1630.1 356C1630.7 355.9 1632.6 355.8 1633.2 355.8C1633.8 355.8 1636.1 356.3 1636.2 355.8C1636.5 354.5 1638.7 329 1639.3 329.1C1639.9 329.2 1641.8 355.7 1642.1 357C1642.2 357.6 1644.6 357.3 1645.2 357.2C1645.9 357.2 1647.8 356.7 1648.4 356.7C1649 356.6 1650.9 356.6 1651.5 356.6C1652.2 356.6 1654.1 357.1 1654.7 357C1655.3 357 1657.2 356.6 1657.8 356.5C1658.5 356.5 1660.4 356.6 1661 356.6C1661.6 356.6 1663.5 356.4 1664.1 356.4C1664.8 356.4 1666.7 356.6 1667.3 356.6C1667.9 356.6 1669.8 356.5 1670.4 356.4C1671.1 356.4 1673 356.4 1673.6 356.3C1674.2 356.2 1676.2 355.8 1676.8 355.8C1677.5 355.8 1679.4 356.4 1680.1 356.4C1680.7 356.4 1682.7 356 1683.3 356C1683.9 355.9 1685.9 355.8 1686.5 355.8C1687.2 355.7 1689.1 355.7 1689.8 355.7C1690.4 355.7 1692.4 355.6 1693 355.7C1693.6 355.7 1695.6 355.8 1696.2 355.8C1696.9 355.7 1698.8 355.1 1699.5 355C1700.1 355 1702.1 355.3 1702.7 355.3C1703.3 355.3 1705.1 355.3 1705.7 355.3C1706.3 355.3 1708.2 355.3 1708.8 355.3C1709.4 355.2 1711.2 354.8 1711.8 354.7C1712.4 354.7 1714.2 354.8 1714.8 354.8C1715.4 354.8 1717.3 354.6 1717.9 354.6C1718.5 354.6 1720.3 354.9 1720.9 354.8C1721.5 354.8 1723.3 354.3 1723.9 354.2C1724.5 354.2 1726.4 354.1 1727 354.1C1727.6 354.1 1729.4 354.5 1730 354.5C1730.6 354.5 1732.4 354 1733 353.9C1733.6 353.8 1735.5 353.9 1736.1 353.9C1736.7 353.9 1738.6 354.1 1739.1 353.8C1739.6 353.5 1740.7 350.9 1741.1 350.9C1741.6 350.9 1742.9 353.5 1743.5 353.8C1744 354.1 1745.9 353.7 1746.5 353.7C1747.1 353.7 1748.9 354 1749.5 354C1750.2 354 1752 353.9 1752.6 353.9C1753.2 353.8 1755 353.4 1755.6 353.4C1756.2 353.5 1758 354.1 1758.6 354.1C1759.2 354.1 1761 353.9 1761.7 353.8C1762.3 353.8 1764.1 353.7 1764.7 353.7C1765.3 353.7 1767.6 354.4 1767.7 353.8C1767.9 352.5 1770 318.2 1770.6 318.2C1771.2 318.2 1773.4 352.5 1773.6 353.8C1773.7 354.5 1776.7 354 1777.5 354.1C1778.2 354.1 1780.6 354.3 1781.3 354.3C1782.1 354.4 1784.4 354.6 1785.2 354.6C1785.8 354.6 1787.8 354.8 1788.4 354.8C1789.1 354.7 1791 354.1 1791.7 354.1C1792.3 354.1 1794.3 354.4 1794.9 354.5C1795.5 354.5 1797.5 354.6 1798.1 354.6C1798.8 354.5 1800.7 354.1 1801.4 354.1C1802 354 1804 354.2 1804.6 354.2C1805.2 354.2 1807.2 354.1 1807.8 354.1C1808.5 354.1 1810.4 354.3 1811.1 354.3C1811.7 354.3 1813.6 353.9 1814.3 353.8C1814.9 353.8 1816.9 353.7 1817.5 353.7C1818.2 353.8 1820.1 354.2 1820.8 354.2C1821.4 354.2 1823.4 353.9 1824 353.8C1824.6 353.7 1826.5 353.6 1827.1 353.5C1827.8 353.5 1829.6 353.6 1830.3 353.6C1830.9 353.5 1832.8 353.5 1833.4 353.5C1834 353.5 1835.9 353.6 1836.5 353.5C1837.2 353.5 1839.1 353.4 1839.7 353.4C1840.3 353.3 1842.2 352.8 1842.8 352.8C1843.4 352.8 1845.3 353.4 1845.9 353.4C1846.6 353.4 1848.5 353.1 1849.1 353C1849.7 352.9 1851.6 352.7 1852.2 352.7C1852.8 352.7 1854.7 352.8 1855.4 352.8C1856 352.8 1857.9 352.7 1858.5 352.7C1859.1 352.7 1861 352.9 1861.6 352.8C1862.3 352.8 1864.1 352.2 1864.8 352.2C1865.4 352.1 1867.3 352.4 1867.9 352.5C1868.5 352.5 1870.4 352.6 1871 352.6C1871.7 352.5 1873.5 352 1874.2 352C1874.8 351.9 1877.2 352.7 1877.3 352.1C1877.5 350.8 1879.6 318.2 1880.2 318.2C1880.8 318.2 1883.2 350.8 1883.4 352.1C1883.5 352.7 1886 352.1 1886.6 352.1C1887.2 352 1889.1 351.9 1889.8 351.9C1890.4 351.9 1892.3 352.1 1893 352.1C1893.6 352 1895.5 351.6 1896.2 351.6C1896.8 351.5 1898.7 351.4 1899.3 351.5C1900 351.5 1901.9 352 1902.5 352C1903.2 351.9 1905.1 351.4 1905.7 351.3C1906.3 351.2 1908.3 351.4 1908.9 351.4C1909.5 351.4 1911.3 351.2 1911.9 351.2C1912.5 351.2 1914.3 351.2 1915 351.2C1915.6 351.2 1917.4 351.2 1918 351.1C1918.6 351.1 1920.4 350.9 1921 350.9C1921.6 350.9 1923.4 351 1924 351C1924.6 350.9 1926.4 350.5 1927 350.5C1927.7 350.6 1929.5 351.2 1930.1 351.2C1930.7 351.3 1932.5 351 1933.1 350.9C1933.7 350.9 1935.5 350.7 1936.1 350.7C1936.7 350.7 1938.5 350.9 1939.2 351C1939.8 351 1941.6 350.9 1942.2 350.9C1942.8 350.9 1944.6 350.9 1945.2 350.9C1945.8 350.9 1947.8 351.1 1948.4 351C1949.1 351 1951 350.4 1951.7 350.4C1952.3 350.4 1954.3 350.7 1954.9 350.7C1955.5 350.8 1957.5 350.9 1958.1 350.8C1958.8 350.8 1960.7 350.2 1961.4 350.2C1962 350.2 1964 350.3 1964.6 350.4C1965.2 350.4 1967 350.7 1967.7 350.7C1968.3 350.8 1970.6 350.4 1970.7 350.9C1970.9 352.2 1971.9 371.4 1971.9 372.7C1971.9 374 1973.7 456.3 1973.8 457.6C1973.8 458.2 1976.6 458.6 1976.7 458.1C1976.9 456.8 1979.1 427.4 1979.2 426.1C1979.3 424.8 1984.3 376.5 1984.5 375.2C1984.7 373.9 1989.9 353.3 1990.1 354.6C1990.3 355.9 1991.7 421.5 1992.5 422.5C1993.2 423.5 1997.3 365 1998.1 365C1998.9 365 1999.7 422.6 2000.5 422.5C2001.3 422.4 2005 364.3 2005.8 364.3C2006.6 364.3 2007.9 422 2008.8 422.5C2009.6 423 2013.5 369.2 2014.3 369.1C2015.1 369 2016.3 421.7 2017 421.2C2017.8 420.7 2021.4 365.6 2021.6 364.3C2021.7 363.5 2025 364 2025.8 363.9C2026.6 363.8 2029.2 363.6 2030 363.5" fill="none" stroke="#f23030" stroke-width="1.4" stroke-linejoin="round"/>
<g font-family="Liberation Sans, Arial, sans-serif" font-size="18" fill="#9a9a9a">
<text x="93" y="163.3" text-anchor="end">8</text>
<text x="93" y="214.3" text-anchor="end">6</text>
<text x="93" y="265.3" text-anchor="end">4</text>
<text x="93" y="316.3" text-anchor="end">2</text>
<text x="93" y="367.3" text-anchor="end">0</text>
<text x="93" y="418.3" text-anchor="end">-2</text>
<text x="93" y="469.3" text-anchor="end">-4</text>
<text x="93" y="520.3" text-anchor="end">-6</text>
<text x="93" y="571.3" text-anchor="end">-8</text>
<text transform="translate(112.8,583) rotate(-50)" text-anchor="end" x="0" y="12" font-size="17.2">14:52</text>
<text transform="translate(214.8,583) rotate(-50)" text-anchor="end" x="0" y="12" font-size="17.2">14:59</text>
<text transform="translate(326.8,583) rotate(-50)" text-anchor="end" x="0" y="12" font-size="17.2">15:06</text>
<text transform="translate(438.6,583) rotate(-50)" text-anchor="end" x="0" y="12" font-size="17.2">15:13</text>
<text transform="translate(550.7,583) rotate(-50)" text-anchor="end" x="0" y="12" font-size="17.2">15:20</text>
<text transform="translate(663.8,583) rotate(-50)" text-anchor="end" x="0" y="12" font-size="17.2">15:27</text>
<text transform="translate(775.8,583) rotate(-50)" text-anchor="end" x="0" y="12" font-size="17.2">15:34</text>
<text transform="translate(888.9,583) rotate(-50)" text-anchor="end" x="0" y="12" font-size="17.2">15:41</text>
<text transform="translate(1000.8,583) rotate(-50)" text-anchor="end" x="0" y="12" font-size="17.2">15:48</text>
<text transform="translate(1112.8,583) rotate(-50)" text-anchor="end" x="0" y="12" font-size="17.2">15:55</text>
<text transform="translate(1225.6,583) rotate(-50)" text-anchor="end" x="0" y="12" font-size="17.2">16:02</text>
<text transform="translate(1337.6,583) rotate(-50)" text-anchor="end" x="0" y="12" font-size="17.2">16:09</text>
<text transform="translate(1450.7,583) rotate(-50)" text-anchor="end" x="0" y="12" font-size="17.2">16:16</text>
<text transform="translate(1562.7,583) rotate(-50)" text-anchor="end" x="0" y="12" font-size="17.2">16:23</text>
<text transform="translate(1674.9,583) rotate(-50)" text-anchor="end" x="0" y="12" font-size="17.2">16:30</text>
<text transform="translate(1786.8,583) rotate(-50)" text-anchor="end" x="0" y="12" font-size="17.2">16:37</text>
<text transform="translate(1899.7,583) rotate(-50)" text-anchor="end" x="0" y="12" font-size="17.2">16:44</text>
<text transform="translate(2011.8,583) rotate(-50)" text-anchor="end" x="0" y="12" font-size="17.2">16:51</text>
<text transform="translate(61,360) rotate(-90)" text-anchor="middle">Leistung [kW]</text>
<rect x="588.0" y="124" width="60.0" height="18" fill="#fdb3b3" stroke="#f55" stroke-width="1.5"/>
<text x="656.3" y="138.2">EVU</text>
<rect x="708.7" y="124" width="60.0" height="18" fill="#ccc" stroke="#444" stroke-width="3"/>
<text x="777.0" y="138.2">Hausverbrauch</text>
<rect x="914.5" y="124" width="60.0" height="18" fill="#e6e6ff" stroke="#dedef3" stroke-width="1.5"/>
<text x="982.8" y="138.2">LP ges.</text>
<rect x="1059.3" y="124" width="60.2" height="18" fill="#999" stroke="#999" stroke-width="3"/>
<text x="1127.8" y="138.2">Zähler 10</text>
<rect x="1219.8" y="124" width="60.0" height="18" fill="#b3ffb3" stroke="#4f4" stroke-width="1.5"/>
<text x="1288.1" y="138.2">PV ges.</text>
<rect x="1366.5" y="124" width="60.5" height="18" fill="#4d4dff" stroke="#3c3cf5" stroke-width="3"/>
<text x="1435.3" y="138.2">LP 13</text>
</g>
</svg>
<div class="thead"></div>
<div class="trow"></div>
<span class="t" id="t1">4,08 kW</span><span class="t" id="t2">100 W</span><span class="t" id="t3">316 W</span><span class="t" id="t4">3,66 kW</span>
<span class="t" id="t5">Diagramm</span>
<span class="cell b" id="h1">Ladepunkt</span><span class="cell b" id="h2">Lademodus</span><span class="cell b" id="h3">Fahrzeug</span>
<span class="cell b" id="h4">Parameter</span><span class="cell b" id="h5">SoC</span><span class="cell b" id="h6">geladen</span>
<span class="cell b" id="r1">Gartenhaus</span><span class="cell" id="r2">PV</span><span class="cell" id="r3">Tesla</span>
<span class="cell" id="r4">3,66 kW</span><span class="cell" id="r5">16 A</span><span class="cell" id="r6">5,3 kWh / 26,4 km</span>
<svg class="ic" style="left:38.90px;top:15.00px;width:29.50px;height:23.80px;color:#000" viewBox="0 0 640 512" preserveAspectRatio="none"><path fill="currentColor" d="M431.980 448.010l-47.970.05V416h-128v32.210l-47.980.05c-8.820.01-15.970 7.160-15.980 15.990l-.05 31.730c-.01 8.850 7.170 16.030 16.020 16.020l223.960-.26c8.820-.01 15.970-7.160 15.980-15.980l.04-31.730c.01-8.850-7.170-16.030-16.020-16.020zM585.200 26.740C582.580 11.310 568.990 0 553.060 0H86.930C71 0 57.410 11.310 54.790 26.740-3.320 369.160.04 348.080.03 352c-.03 17.320 14.290 32 32.600 32h574.740c18.230 0 32.510-14.560 32.590-31.790.02-4.080 3.350 16.950-54.760-325.470zM259.830 64h120.330l9.770 96H250.060l9.770-96zm-75.170 256H71.090L90.100 208h105.970l-11.410 112zm16.290-160H98.240l16.290-96h96.190l-9.770 96zm32.820 160l11.400-112h149.650l11.400 112H233.770zm195.500-256h96.190l16.290 96H439.040l-9.770-96zm26.060 256l-11.400-112H549.900l19.010 112H455.330z"/></svg><svg class="ic" style="left:38.50px;top:64.40px;width:24.20px;height:17.50px;color:#000" viewBox="0 64 512 384" preserveAspectRatio="none"><path fill="currentColor" d="M500 384c6.600 0 12 5.400 12 12v40c0 6.600-5.400 12-12 12H12c-6.600 0-12-5.400-12-12V76c0-6.600 5.400-12 12-12h40c6.600 0 12 5.400 12 12v308h436zM372.700 159.500L288 216l-85.300-113.700c-5.100-6.800-15.500-6.300-19.900 1L96 248v104h384l-89.900-187.800c-3.200-6.500-11.400-8.700-17.400-4.700z"/></svg><svg class="ic" style="left:492.20px;top:15.50px;width:20.90px;height:20.60px;color:#000" viewBox="0 32 448 448" preserveAspectRatio="none"><path fill="currentColor" d="M400 32H48C21.5 32 0 53.5 0 80v352c0 26.500 21.500 48 48 48h352c26.500 0 48-21.500 48-48V80c0-26.500-21.500-48-48-48zm-32 252c0 6.600-5.400 12-12 12h-92v92c0 6.600-5.400 12-12 12h-56c-6.600 0-12-5.400-12-12v-92H92c-6.600 0-12-5.400-12-12v-56c0-6.600 5.400-12 12-12h92v-92c0-6.600 5.400-12 12-12h56c6.600 0 12 5.400 12 12v92h92c6.600 0 12 5.400 12 12v56z"/></svg><svg class="ic" style="left:998.20px;top:15.50px;width:20.90px;height:20.60px;color:#000" viewBox="0 32 448 448" preserveAspectRatio="none"><path fill="currentColor" d="M400 32H48C21.5 32 0 53.5 0 80v352c0 26.500 21.500 48 48 48h352c26.500 0 48-21.500 48-48V80c0-26.500-21.500-48-48-48zm-32 252c0 6.600-5.400 12-12 12h-92v92c0 6.600-5.400 12-12 12h-56c-6.600 0-12-5.400-12-12v-92H92c-6.600 0-12-5.400-12-12v-56c0-6.600 5.400-12 12-12h92v-92c0-6.600 5.400-12 12-12h56c6.600 0 12 5.400 12 12v92h92c6.600 0 12 5.400 12 12v56z"/></svg><svg class="ic" style="left:1504.20px;top:15.50px;width:20.90px;height:20.60px;color:#000" viewBox="0 32 448 448" preserveAspectRatio="none"><path fill="currentColor" d="M400 32H48C21.5 32 0 53.5 0 80v352c0 26.500 21.500 48 48 48h352c26.500 0 48-21.500 48-48V80c0-26.500-21.500-48-48-48zm-32 252c0 6.600-5.400 12-12 12h-92v92c0 6.600-5.400 12-12 12h-56c-6.600 0-12-5.400-12-12v-92H92c-6.600 0-12-5.400-12-12v-56c0-6.600 5.400-12 12-12h92v-92c0-6.600 5.400-12 12-12h56c6.600 0 12 5.400 12 12v92h92c6.600 0 12 5.400 12 12v56z"/></svg><svg class="ic" style="left:2010.30px;top:15.50px;width:20.90px;height:20.60px;color:#000" viewBox="0 32 448 448" preserveAspectRatio="none"><path fill="currentColor" d="M400 32H48C21.5 32 0 53.5 0 80v352c0 26.500 21.500 48 48 48h352c26.500 0 48-21.500 48-48V80c0-26.500-21.500-48-48-48zm-32 252c0 6.600-5.400 12-12 12h-92v92c0 6.600-5.400 12-12 12h-56c-6.600 0-12-5.400-12-12v-92H92c-6.600 0-12-5.400-12-12v-56c0-6.600 5.400-12 12-12h92v-92c0-6.600 5.400-12 12-12h56c6.600 0 12 5.400 12 12v92h92c6.600 0 12 5.400 12 12v56z"/></svg><svg class="ic" style="left:2010.30px;top:61.60px;width:20.90px;height:20.80px;color:#000" viewBox="0 32 448 448" preserveAspectRatio="none"><path fill="currentColor" d="M400 32H48C21.500 32 0 53.500 0 80v352c0 26.500 21.500 48 48 48h352c26.500 0 48-21.500 48-48V80c0-26.500-21.500-48-48-48zM92 296c-6.600 0-12-5.400-12-12v-56c0-6.600 5.400-12 12-12h264c6.600 0 12 5.400 12 12v56c0 6.600-5.400 12-12 12H92z"/></svg><svg class="ic" style="left:2010.20px;top:743.40px;width:21.10px;height:21.20px;color:#464646" viewBox="0 32 448 448" preserveAspectRatio="none"><path fill="currentColor" d="M400 32H48C21.5 32 0 53.5 0 80v352c0 26.500 21.500 48 48 48h352c26.500 0 48-21.500 48-48V80c0-26.500-21.500-48-48-48zm-32 252c0 6.600-5.400 12-12 12h-92v92c0 6.600-5.400 12-12 12h-56c-6.600 0-12-5.400-12-12v-92H92c-6.600 0-12-5.400-12-12v-56c0-6.600 5.400-12 12-12h92v-92c0-6.600 5.400-12 12-12h56c6.600 0 12 5.400 12 12v92h92c6.600 0 12 5.400 12 12v56z"/></svg><svg class="ic" style="left:545.50px;top:16.70px;width:26.30px;height:20.30px;color:#000" viewBox="0 32.05 576 447.95" preserveAspectRatio="none"><path fill="currentColor" d="M280.370 148.260L96 300.110V464a16 16 0 0 0 16 16l112.060-.29a16 16 0 0 0 15.920-16V368a16 16 0 0 1 16-16h64a16 16 0 0 1 16 16v95.640a16 16 0 0 0 16 16.050L464 480a16 16 0 0 0 16-16V300L295.670 148.260a12.190 12.190 0 0 0-15.300 0zM571.600 251.470L488 182.560V44.050a12 12 0 0 0-12-12h-56a12 12 0 0 0-12 12v72.610L318.470 43a48 48 0 0 0-61 0L4.340 251.470a12 12 0 0 0-1.600 16.900l25.500 31A12 12 0 0 0 45.150 301l235.220-193.740a12.190 12.190 0 0 1 15.300 0L530.900 301a12 12 0 0 0 16.900-1.600l25.500-31a12 12 0 0 0-1.700-16.930z"/></svg><svg class="ic" style="left:1051.30px;top:16.70px;width:26.50px;height:20.30px;color:#000" viewBox="0 32.05 576 447.95" preserveAspectRatio="none"><path fill="currentColor" d="M280.370 148.260L96 300.110V464a16 16 0 0 0 16 16l112.060-.29a16 16 0 0 0 15.920-16V368a16 16 0 0 1 16-16h64a16 16 0 0 1 16 16v95.640a16 16 0 0 0 16 16.050L464 480a16 16 0 0 0 16-16V300L295.670 148.260a12.190 12.190 0 0 0-15.300 0zM571.600 251.470L488 182.560V44.050a12 12 0 0 0-12-12h-56a12 12 0 0 0-12 12v72.610L318.470 43a48 48 0 0 0-61 0L4.340 251.470a12 12 0 0 0-1.600 16.900l25.500 31A12 12 0 0 0 45.150 301l235.220-193.740a12.190 12.190 0 0 1 15.300 0L530.900 301a12 12 0 0 0 16.900-1.600l25.500-31a12 12 0 0 0-1.700-16.930z"/></svg><svg class="ic" style="left:580.00px;top:20.00px;width:18.50px;height:14.00px;color:#000" viewBox="24.75 95.95 398.6 320.1" preserveAspectRatio="none"><path fill="currentColor" d="M224.300 273l-136 136c-9.400 9.400-24.600 9.400-33.900 0l-22.600-22.600c-9.400-9.400-9.400-24.600 0-33.900l96.400-96.400-96.400-96.400c-9.400-9.400-9.400-24.600 0-33.900L54.300 103c9.400-9.400 24.600-9.400 33.900 0l136 136c9.500 9.400 9.500 24.600.1 34zm192-34l-136-136c-9.400-9.400-24.600-9.400-33.900 0l-22.600 22.600c-9.400 9.400-9.400 24.600 0 33.900l96.400 96.400-96.400 96.400c-9.400 9.400-9.400 24.600 0 33.900l22.600 22.600c9.400 9.400 24.600 9.400 33.900 0l136-136c9.400-9.200 9.400-24.400 0-33.800z"/></svg><svg class="ic" style="left:610.00px;top:16.70px;width:18.20px;height:26.70px;color:#000" viewBox="14 11 43 63" preserveAspectRatio="none"><g fill="none" stroke="currentColor" stroke-width="2.700" stroke-linejoin="round" stroke-linecap="round">
<path d="M35.500 12.500 L30 20 L30 40 L21.500 72.500 M35.500 12.500 L41 20 L41 40 L49.500 72.500"/>
<path d="M30 20 H41 M30 26 H41 M30 33 H41 M29 40 H42" stroke-width="2.600"/>
<path d="M30 20.500 C23 22 17 24.500 16.500 30 V34.500 M41 20.500 C48 22 54 24.500 54.500 30 V34.500" stroke-width="2.800"/>
<path d="M30 35 C24 36.500 17 39 15.500 43.500 L17.500 48.500 M41 35 C47 36.500 54 39 55.500 43.500 L53.500 48.500" stroke-width="2.800"/>
<path d="M20 39 Q35.500 44.500 51 39" stroke-width="1.800"/>
<path d="M30 40 L44 57 M41 40 L27 57 M27 57 L40 66 M44 57 L31 66" stroke-width="2"/>
<path d="M21.500 72.500 L35.500 59.500 L49.500 72.500" stroke-width="2.400"/>
</g></svg><svg class="ic" style="left:1557.00px;top:15.20px;width:26.90px;height:23.60px;color:#000" viewBox="0 0 576 512" preserveAspectRatio="none"><path fill="currentColor" d="M336 448H16c-8.840 0-16 7.160-16 16v32c0 8.840 7.160 16 16 16h320c8.840 0 16-7.160 16-16v-32c0-8.840-7.160-16-16-16zm208-320V80c0-8.840-7.160-16-16-16s-16 7.160-16 16v48h-32V80c0-8.840-7.160-16-16-16s-16 7.160-16 16v48h-16c-8.840 0-16 7.160-16 16v32c0 35.760 23.620 65.690 56 75.930v118.490c0 13.950-9.500 26.920-23.260 29.190C431.220 402.500 416 388.990 416 372v-28c0-48.600-39.400-88-88-88h-8V64c0-35.350-28.650-64-64-64H96C60.650 0 32 28.650 32 64v352h288V304h8c22.090 0 40 17.910 40 40v24.610c0 39.670 28.920 75.160 68.410 79.010C481.710 452.050 520 416.410 520 372V251.930c32.380-10.240 56-40.170 56-75.930v-32c0-8.840-7.160-16-16-16h-16zm-283.910 47.760l-93.700 139c-2.200 3.330-6.210 5.240-10.390 5.240-7.670 0-13.470-6.280-11.670-12.920L167.350 224H108c-7.250 0-12.850-5.590-11.890-11.890l16-107C112.900 99.900 117.980 96 124 96h68c7.880 0 13.620 6.540 11.600 13.210L192 160h57.700c9.240 0 15.010 8.780 10.390 15.760z"/></svg><svg class="ic" style="left:174.80px;top:748.50px;width:13.70px;height:17.50px;color:#0a640a" viewBox="0 0 384 512" preserveAspectRatio="none"><path fill="currentColor" d="M320 32a32 32 0 0 0-64 0v96h64zm48 128H16a16 16 0 0 0-16 16v32a16 16 0 0 0 16 16h16v32a160.070 160.070 0 0 0 128 156.800V512h64v-99.200A160.070 160.070 0 0 0 352 256v-32h16a16 16 0 0 0 16-16v-32a16 16 0 0 0-16-16zM128 32a32 32 0 0 0-64 0v96h64z"/></svg><svg class="ic" style="left:1135.00px;top:747.50px;width:18.00px;height:18.00px;color:#464646" viewBox="0 0 20 20"><circle cx="10" cy="10" r="9" fill="none" stroke="currentColor" stroke-width="1.600"/><path d="M7.800 7.300 L10.600 5.400 V14.800" fill="none" stroke="currentColor" stroke-width="1.600"/></svg>
</body></html>
